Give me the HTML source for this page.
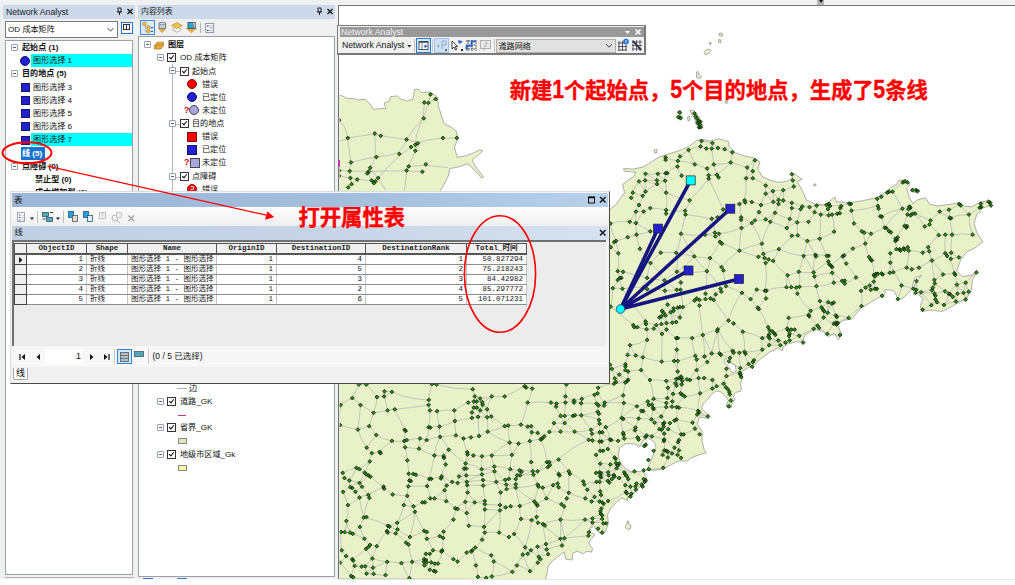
<!DOCTYPE html>
<html lang="zh">
<head>
<meta charset="utf-8">
<title>OD 成本矩阵</title>
<style>
html,body{margin:0;padding:0;}
body{width:1015px;height:585px;overflow:hidden;background:#fff;position:relative;font-family:"Liberation Sans","Noto Sans CJK SC",sans-serif;font-size:10px;color:#111;}
.abs{position:absolute;}
#app{position:absolute;left:0;top:0;width:1015px;height:579px;background:#f0f0f0;}
.ptitle{position:absolute;height:14px;background:#ccd9ea;font-size:8.3px;line-height:14px;color:#1a1a1a;white-space:nowrap;}
.box{position:absolute;background:#fff;border:1px solid #828790;box-sizing:border-box;}
.row{position:absolute;height:13px;line-height:13px;white-space:nowrap;font-size:8.1px;}
.b{font-weight:bold;}
.sq{position:absolute;width:9px;height:9px;background:#2121d2;border:1px solid #15156a;box-sizing:border-box;}
.exp{position:absolute;width:7px;height:7px;border:1px solid #9aa0a8;background:#fff;box-sizing:border-box;border-radius:1px;}
.exp:after{content:"";position:absolute;left:1px;top:2px;width:3px;height:1px;background:#4a62a0;}
.cb{position:absolute;width:9px;height:9px;border:1px solid #333;background:#fff;box-sizing:border-box;}
.cb:after{content:"";position:absolute;left:2px;top:0px;width:2px;height:4px;border:solid #111;border-width:0 1.5px 1.5px 0;transform:rotate(40deg);}
.circ{position:absolute;width:10px;height:10px;border-radius:50%;box-sizing:border-box;border:1px solid #333;}
#map{position:absolute;left:338px;top:4.500px;width:677px;height:574.500px;background:#fff;border-left:1.700px solid #707070;border-top:1.400px solid #747474;box-sizing:border-box;overflow:hidden;}
.mono{font-family:"Liberation Mono","Noto Sans CJK SC",monospace;}
.red{color:#ff0000;font-weight:bold;-webkit-text-stroke:0.350px #ff0000;font-family:"Liberation Sans","Noto Sans CJK SC",sans-serif;}
</style>
</head>
<body>
<div id="app">
<div id="map"></div>
<div class="abs" style="left:817px;top:0;width:7px;height:4.500px;background:#b4b4b4;"><div class="abs" style="left:2px;top:0;width:0;height:0;border:2px solid transparent;border-top:3px solid #111;"></div></div>
<svg class="abs" style="left:0;top:0" width="1015" height="585" viewBox="0 0 1015 585">
<defs><clipPath id="mc"><rect x="339.700" y="5.900" width="676" height="573.100"/></clipPath></defs>
<g clip-path="url(#mc)">
<path d="M339 95.3L342.5 95.9L346.3 98.2L353.8 98.5L357.6 100L365 99.1L369.8 103.8L373.5 109.4L380.1 108.5L385.8 108.5L384.2 102.9L389.5 101L390.5 96.7L397 95.9L400.8 99.1L407.4 101L413 99.1L414.3 89.7L418.6 89.1L421.5 92.5L429 92.1L432.7 93.5L437.4 97.2L438.4 105.7L441.2 115.1L444 123.5L451.5 127.3L456.2 131L458.1 138.6L454.4 147L457.2 157.4L466.6 155.5L474.1 152.7L479.7 149.8L482.6 150.8L477.9 155.5L472.2 160.2L475 165.8L483.5 177.1L481.6 178L470.3 165.8L466.6 163.9L459 166.8L449.7 168.6L448.7 175.2L444 184.6L440.3 190.3L445 200L520 215L600 212L610.3 209.1L616.4 204L624.6 192.7L622.6 184.5L627.7 180.4L633.8 176.3L635.9 172.2L630.8 171.8L624.2 171.2L623.6 168.5L632.8 169.1L643.1 167.1L651.3 161.9L659.5 156.8L669.7 153.7L682.1 149.6L690.3 145.5L696.4 140.4L702.6 139.4L710.8 141L719 138.9L728.2 141.4L729.2 146.5L735.4 152.7L743.6 155.8L753.8 157.8L760 161.9L757.9 169.1L762.1 176.3L770.3 180.4L778.5 182.4L786.7 181.4L791.8 178.3L793.8 173.2L796.2 175.3L802.3 179.4L797.2 181.4L802.3 190.6L806.4 199.9L814.6 204L823.8 205L830 200.9L835.1 196.8L836.2 201.9L849.5 202.5L861.8 200.9L876.2 197.8L884.4 192.7L890.5 187.6L896.7 184.5L898.7 180.4L906.9 180L910 184.5L906.9 188.6L909 196.8L913.1 204L917.2 199.9L925.4 197.8L929.5 204L937.7 206L952.1 204L958.2 202.9L964.4 206L971.1 206.9L979.9 202.6L987.1 200.6L991.5 204L982.8 208.4L977 214.2L974 222.9L977 233.1L982.8 241.8L975.5 247.6L966.8 251.9L961 259.2L956.6 270.8L962.4 276.6L971.1 275.2L977 272.3L972.6 279.5L971.1 291.1L966.8 298.4L958.1 302.8L950.8 307.1L942.1 311.5L930.5 310L921.8 311.5L920.3 305.7L923.2 298.4L917.4 294L913.1 288.2L917.4 279.5L921.8 275.2L914.5 278.1L911.6 289.7L904.4 296.9L898.6 299.9L895 293L892.8 290.5L885.6 289.5L884.6 294.6L876.4 298.7L868.2 303.8L861 307.9L855.9 314.1L851.8 319.2L843.6 320.3L837.4 324.4L841.5 333.6L838.5 339.7L834.4 333.6L828.2 336.7L823.1 331.5L816.9 329.5L810.8 331.5L804.6 335.6L802.6 341.8L796.4 341.8L788.2 343.8L783.1 346.9L782.1 351L777.9 347.9L769.7 352.1L761.5 358.2L754.4 364.4L747.2 368.5L741.4 371.5L742.6 377.5L740.3 383.5L741.4 388.3L740.3 391.3L735.5 392.5L733.1 395.5L734.9 399.7L731.9 403.8L731.3 407.4L727.1 407.4L726.5 405L728.3 400.3L725.9 396.7L723.5 394.3L719.9 391.3L715.7 391.3L711.5 394.3L707.9 399.1L703.2 403.8L701.4 408.6L705.6 412.2L709.1 415.8L706.7 418.2L699.6 417L697.1 424.1L702.2 431.3L702.2 441.5L704.2 449.7L706.3 452.8L699.1 454.9L690.9 457.9L687.8 461L678.6 461L670.4 465.1L662.2 469.2L654 470.3L646.8 470.3L648.2 467.2L651.3 460L653.8 453.4L656 447.7L654.4 441.9L647.8 437.8L642.7 440.7L640 446.5L633.9 443.8L625.3 443.8L619.5 447.7L618.3 455.9L620.3 462.9L625.9 469L632.6 472.3L637.6 471.5L643.7 471.9L646.8 478.5L643.7 484.6L637.6 488.7L633.5 493.8L627.3 497.9L632.4 495.3L627 498L627.9 500.6L621.7 498L616.4 502.4L611.1 507.7L607.5 514.8L608.4 522.8L605.8 530.8L602.2 534.3L597.8 531.7L593.3 526.4L589.8 528.1L590.7 532.6L595.1 534.3L590.7 539.7L588.9 543.2L592.5 548.5L591.6 552.1L587.1 551.2L582.7 553.8L577.4 551.2L573 553L572.1 560L565.9 559.2L564.1 552.1L560.5 554.7L552.6 560.9L548.1 566.3L547.2 573.3L545.5 579.6L339 579ZM725.3 357.8L728.3 362L731.9 363.2L735.5 365.6L736.1 371.5L731.9 372.7L729.5 367.9L725.9 364.4L724.1 362Z" fill="#e9f1c9" stroke="#9a9a9a" stroke-width="0.8" fill-rule="evenodd"/>
<path d="M627.9 520.5L629 524L631 525.5L630.5 528.5L627.5 529.5L625.3 527.5L626.3 524.5Z" fill="#e9f1c9" stroke="#8a8a8a" stroke-width="0.7"/>
<path d="M704 52.5L706 50L709.5 49L711 50.5L709 53L705.5 55Z" fill="#e9f1c9" stroke="#8a8a8a" stroke-width="0.7"/>
<path d="M696.5 72L698 71.5L699 75L701.5 76.5L700 78.5L696.5 77.5Z" fill="#e9f1c9" stroke="#8a8a8a" stroke-width="0.7"/>
<path d="M719 33.5L722 33L722.5 36L719.5 36Z" fill="#e9f1c9" stroke="#8a8a8a" stroke-width="0.7"/>
<path d="M718.5 39.5L721 40L720.5 43L718.5 42Z" fill="#e9f1c9" stroke="#8a8a8a" stroke-width="0.7"/>
<path d="M709.5 42L711.5 43L710 45Z" fill="#e9f1c9" stroke="#8a8a8a" stroke-width="0.7"/>
<path d="M725.5 100.5L727.5 101L727 103.5L725.5 103Z" fill="#e9f1c9" stroke="#8a8a8a" stroke-width="0.7"/>
<path d="M654 150L657 149.5L657 152.5L654.5 153Z" fill="#e9f1c9" stroke="#8a8a8a" stroke-width="0.7"/>
<path d="M910.5 189L914 188.3L918.5 189.5L919.5 191.5L916 192.5L911.5 191.5Z" fill="#e9f1c9" stroke="#8a8a8a" stroke-width="0.7"/>
<path d="M813.5 184.5L816 183.8L816 185.5L814 186Z" fill="#e9f1c9" stroke="#8a8a8a" stroke-width="0.7"/>
<path d="M690 110.5L693 110L696 113L699 117L702 123L702.5 128L699 129L696.5 124L694 118L691.5 114Z" fill="#e9f1c9" stroke="#8a8a8a" stroke-width="0.7"/>
<path d="M677.5 111.5L680.5 111L682 114L680 116Z" fill="#e9f1c9" stroke="#8a8a8a" stroke-width="0.7"/>
<path d="M677 116L680 115.5L682 118.5L679 120Z" fill="#e9f1c9" stroke="#8a8a8a" stroke-width="0.7"/>
<path d="M687.5 117L689.5 116.5L690 120L688 121Z" fill="#e9f1c9" stroke="#8a8a8a" stroke-width="0.7"/>
<path d="M599.6 501.5Q601.4 503.1 603.6 503.8M807.4 240.9Q811.5 247.8 815.4 254.8M482 474.4Q482.3 477.3 483 480.1M546.3 498.4Q553.5 502.1 561.4 504.2M618.3 253.3Q619.6 262.3 617.7 271.2M711.8 148.6Q714.9 148.7 717.9 148M522.8 554.7Q525.3 554.7 527.7 553.8M427.2 486.1Q429.7 492 430.3 498.4M943 274.5Q948.6 274 954.3 273.2M516.9 565.4Q519.3 559.8 522.8 554.7M871 233.7Q878.2 231.4 884.8 227.6M717.9 148Q721.5 147.9 724.7 149.2M792.8 180.4Q793.3 183.5 793.8 186.5M762.3 338.1Q761.6 343.9 762.3 349.7M842.7 256.4Q844 260.2 846.2 263.6M791.8 202.9Q797.4 203.8 802.3 206.4M819.9 301.1Q824 302.3 828.3 302.2M921 292.3Q927.8 292.3 934.4 293.7M659.5 429.2Q661.6 431.8 664.2 433.7M681 233.7Q687.6 245.1 694.2 256.4M384.5 391.3Q388.3 391 391.9 391.9M754.9 220.4Q760.4 220.4 765.7 219.4M824.2 311.4Q823.5 314.4 823.6 317.5M869.7 285.5Q870.1 287.7 870.8 289.8M598.2 387.8Q597.3 390.5 597.6 393.3M679 440.1Q679.6 445.2 679 450.4M841.3 206Q845 204.3 849.1 203.6M467.2 485.2Q468 488.8 467.6 492.4M963.5 292.9Q964.6 296.2 965.7 299.5M823.6 317.5Q820.7 321.8 817.4 325.7M636.9 406.3Q639.2 408.4 641.3 410.8M369.2 426.2Q363.5 428 357.9 429.6M574.6 431.7Q582.1 435.1 588.7 439.9M696.6 370.1Q698.5 373.9 698.6 378.1M565.4 402.6Q565.1 409.2 564.7 415.9M874.9 288.8Q878.8 292 882.1 295.8M929.5 224.5Q930 222.4 930.5 220.4M907.5 214.6Q904.9 220 904.5 225.9M480.1 410.4Q479.6 413.8 478.1 416.9M434.4 455.5Q439 456 443.6 455.9M739.4 250.7Q748.7 254.3 758.4 256.8M619.1 478.1Q622.5 481.3 625.3 485.2M741.1 217.3Q741.4 222.6 741.5 228M968.6 291.7Q966.4 295.3 965.7 299.5M949.6 217.9Q951.4 226.2 952.1 234.7M635.9 211.6Q632.3 216.4 629.7 221.8M676.8 271.8Q691.9 273.7 706.9 271.2M710.6 298.5Q712.2 299.1 713.7 299.9M769.7 330.3Q769 332.2 769.1 334.4M392.7 494.5Q400 495.6 407.3 495.9M730.1 357.9Q729.5 359.7 728.9 361.4M807.4 240.9Q804.8 248.3 803.6 256M584.2 484.6Q585.9 487.1 587.3 489.7M696.6 370.1Q697.1 364.8 696.7 359.5M601.1 494.9Q604.9 497.6 608.1 501M653.6 398.9Q650.4 399.7 647.8 401.5M774.2 333.3Q771.7 333.8 769.1 334.4M426.8 538.8Q430.5 544.2 433 550.3M701.5 141Q701.1 143.8 700.5 146.5M638.6 418.6Q630.1 416.8 621.6 417.9M602.2 518.9Q602.5 521.2 603.5 523.3M525.1 547.3Q528 548.8 530.9 550.3M666.5 329.6Q664.4 331.9 662 333.9M877.9 273.8Q879.8 273.5 881.6 273.4M698.1 410.8Q702.4 414.7 707.9 416.5M544.2 436.4Q542.7 438.2 540.7 439.5M652.9 407.7Q656.3 412.8 661.2 416.5M341.1 532Q340 541.2 341.7 550.3M741.1 217.3Q746.8 219.5 751.8 223.1M945.3 234.7Q948.7 234.5 952.1 234.7M384.5 391.3Q384.3 393.8 384.1 396.4M623.8 403Q621.7 410.3 621.6 417.9M635.5 486.3Q638.8 486 641.7 484.6M827.9 209.1Q829.4 212.3 832.1 214.6M770.3 221.8Q778.8 224.1 786.7 228M601.1 494.9Q597.9 496.3 594.5 496.9M667.9 457.5Q665.6 462.7 663.2 467.8M888.9 231.1Q892.2 235 895.6 238.8M631.2 197.8Q634.8 201.7 639 205M413.3 473.9Q421.7 475 429.3 478.9M500 505.1Q499.9 507.7 500 510.4M341.1 532Q342.9 532.4 344.7 532.2M673.7 308.3Q675.8 308.4 677.8 307.7M588.7 439.9Q571.7 446.8 558.6 459.6M739.5 204Q730.8 205.2 723.1 209.5M465.6 463.5Q464.3 465.9 464.1 468.6M516.9 565.4Q515.3 569.1 512.4 571.9M700.1 393.3Q698.6 385.8 698.6 378.1M661.4 316.3Q664.2 319.5 666.5 323.1M799.3 335.8Q801.2 339.1 803.1 342.6M922.7 252.7Q926 250.5 928.2 247.2M787.6 275.3Q789.1 281.3 791.3 287.2M560.5 538.8Q561.5 542.1 562 545.5M833.8 282.7Q837.9 281.6 842.1 281M645.1 180.4Q650.7 183.3 657 184.1M935.4 299.5Q936 300.9 937 302.2M616 463.1Q616.7 465.6 616.6 468.2M730.7 162.5Q724.5 169.5 716.9 174.8M608.2 472.3Q604.3 474.4 600.2 476M376.9 397Q380.5 396.3 384.1 396.4M473.8 407.7Q472.8 410 471.9 412.4M627.6 354.9Q627.1 359.7 625.4 364.2M816.7 205.6Q821.6 205.5 826.5 205M614.6 457.5Q611.8 460.6 610.3 464.5M553.1 485.2Q555.7 486.7 558.6 487.3M455.9 435.4Q460 436.3 463.5 438.5M939.7 211.6Q945.1 214.1 949.6 217.9M652.9 407.7Q652.5 413.6 651.5 419.4M909.4 206.6Q912 210.3 915.1 213.6M568.8 471.3Q576.3 476.1 583.2 481.5M751.8 223.1Q758 232.8 761.9 243.7M892.6 191.7Q898.1 199.8 902.4 208.7M830 206Q835.6 205.3 841.3 206M413.5 506.3Q418.2 505.1 422.3 502.4M831.8 303.6Q833.3 309.7 835.9 315.5M467.2 452.2Q470.3 453.7 473.4 455.5M643.7 211.6Q639.3 217 635.9 223.1M674.1 361Q675.9 366.3 677.7 371.5M373.5 412.8Q371.2 419.5 369.2 426.2M520.1 475.4Q526.8 474.7 533.5 474.8M465.3 501.9Q460.2 505.1 455.2 508.3M440.1 436.8Q435.3 445.5 434.4 455.5M434.8 563.6Q436.4 563.8 438 563.6M430.3 498.4Q432.3 498.7 434.4 498.4M408.7 473.7Q409 477.1 409.4 480.5M600.8 513.9Q601.7 516.4 602.2 518.9M373 567.7Q370.3 571.3 366.5 573.7M667.3 398.1Q670 399.7 672.4 401.5M514.2 534Q520.4 540 525.1 547.3M713.8 164.4Q722.4 164.6 730.7 162.5M530.9 550.3Q529.2 551.9 527.7 553.8M510.3 469.2Q513.4 472.6 517.1 475.4M403.7 505.1Q402.1 514.5 397.2 522.8M789.6 333.7Q790.1 337.1 789.6 340.5M752.8 178.3Q760 180.6 765.7 185.5M798.8 271.8Q800.5 279.2 799.5 286.8M765.6 263Q767.7 276.9 765 290.7M744.6 200.3Q741.7 201.6 739.5 204M681 233.7Q692.9 236.3 705 234.7M676.2 338.1Q677.2 343.9 676.8 349.7M667.9 451.8Q668.2 454.7 667.9 457.5M639 205Q640.7 208.8 643.7 211.6M783.2 190.2Q788.6 188.5 793.8 186.5M588.7 439.9Q590.6 440.1 592.4 440.5M645.5 173.8Q651.3 177 657 180.4M705 234.7Q709.8 233.2 714.9 232.7M837.9 323.1Q838.8 329.1 840 335M494.5 471.3Q499.4 476.1 505.2 479.9M625.3 485.2Q627.8 486 630.4 486.7M429.3 478.9Q427.7 482.3 427.2 486.1M553.9 423.1Q552.4 427.9 549.4 431.9M828.3 302.2Q824.8 304.6 821.5 307.3M797.8 235.4Q802 239.2 807.4 240.9M948.7 293.7Q947.2 299.7 944 305M510.3 469.2Q509.6 474.1 508.8 478.9M608.8 475.4Q608.2 478.1 607.8 480.9M697.1 414.5Q695.1 418.7 692.5 422.7M764.6 258.1Q766.5 259.2 768.7 259.5M772.9 191.1Q773.2 196.5 773.3 201.9M681 376.6Q684 377.9 686.9 379.3M968.9 214.6Q968.9 225 972.6 234.7M952.8 296.8Q954.9 298.9 955.9 301.5M542.8 487.7Q543.7 493.3 546.3 498.4M428.8 399.9Q429.2 402.5 428.6 405M484.8 509.5Q492.4 509.5 500 510.4M466.8 481.9Q467 483.6 467.2 485.2M394.8 409.3Q399.8 419.5 404.6 429.8M494.3 466.6Q502.6 466.3 510.3 469.2M484.8 532.6Q483.7 536.2 482.1 539.7M581.8 398.9Q581.6 401 581.2 403.2M928.2 247.2Q928.3 249.3 929.2 251.3M536.2 503.8Q536.2 510.4 536.6 517M359.5 483Q354.5 484.1 350.3 487.1M680 156.4Q678.6 158.5 677.9 160.9M407.3 460.4Q408.4 467 408.7 473.7M896.4 249.2Q893.7 251.8 890.3 253.3M653.8 328.6Q657.8 331.5 662 333.9M932.9 287.6Q933.9 290.6 934.4 293.7M830.8 265.6Q832.3 269.1 832.2 272.8M827.3 333.9Q833.5 335.8 840 335M865.6 287.6Q868 289.2 870.8 289.8M542.8 487.7Q547.9 486.5 553.1 485.2M820.8 214.6Q824.7 215.2 828.6 215.3M648.8 405Q644.8 407.6 641.3 410.8M619.1 478.1Q615.4 477.9 611.9 479.1M587.3 489.7Q590.9 493.3 594.5 496.9M470.9 437.4Q475 436.9 479.1 436M659.5 429.2Q656.1 433.3 651.9 436.4M471.9 412.4Q475.3 414.3 478.1 416.9M532.8 471.3Q535.2 471.3 537.6 471.3M635.9 489.7Q633.9 492.1 631.4 493.8M649.9 380Q644.5 376 641.1 370.1M514.2 534Q511.6 535.6 508.9 537M477.9 576.9Q482 577.8 486.2 577.8M667.6 304.6Q670.8 306.2 673.7 308.3M340.6 405Q338.7 415 340 425.1M441.6 476.4Q446.7 479.7 452.2 481.9M531.2 462.1Q531.7 466.7 532.8 471.3M486.2 577.8Q489.1 577.7 491.9 576.5M566.8 498.4Q566.2 502.7 564.1 506.5M493.8 561.5Q503.9 565.4 512.4 571.9M798.8 271.8Q806.2 273.4 813.7 272.4M794.7 329.6Q796.4 333.1 799.3 335.8M556.5 403.6Q560.9 402.3 565.4 402.6M537.5 546.7Q534 548.1 530.9 550.3M532.8 471.3Q533.5 473 533.5 474.8M698.1 410.8Q697.9 412.7 697.1 414.5M442.2 550.3Q441.2 557.3 438 563.6M762.3 349.7Q758.6 355.3 754 360.2M711.8 218.7Q714.6 217.9 717.5 217.3M500.6 492.4Q500.5 498.8 500 505.1M774.2 333.3Q776.9 336.6 778.3 340.5M751.8 202.1Q756.6 203.1 761 205M676.5 407.1Q677.9 413.2 676.5 419.4M827.9 209.1Q828.9 212.1 828.6 215.3M752.8 171.2Q752.9 174.7 752.8 178.3M754.9 220.4Q753.3 221.7 751.8 223.1M719 233.7Q717.3 235.3 715.3 236.4M478.1 416.9Q482.6 416.9 487.1 417.3M621.6 417.9Q614.5 423.9 605.8 427.2M387.2 561.8Q385.9 568.4 385.5 575.1M560.6 415.9Q557.4 419.6 553.9 423.1M980.8 203.6Q984.5 202.2 988.6 201.9M619.1 463.7Q621.7 468 624.2 472.3M751.8 223.1Q747 226.2 741.5 228M441.6 476.4Q435.5 478.2 429.3 478.9M711.8 218.7Q714.5 225.5 714.9 232.7M505.7 507.4Q502.7 508.5 500 510.4M413.5 506.3Q414.5 509 414.9 511.8M387.8 525.8Q392.3 528.6 397.5 529.4M662 310.8Q663.9 313.1 665.5 315.5M482.1 539.7Q479.3 544.2 475.2 547.6M483 480.1Q489.6 481.6 496.3 481.9M424.1 530.8Q425 534.9 426.8 538.8M673.1 393.9Q676.9 394.3 680.6 393.3M786.7 228Q791.5 224.4 797.2 222.4M656.3 325.1Q654.8 326.7 653.8 328.6M661.4 316.3Q660.8 320.2 661.4 324.1M726 286.2Q734.3 288.9 742 292.9M680.6 393.3Q682.7 394.8 684.7 396.4M581.2 415.3Q589.5 414 597.6 411.8M560.5 538.8Q553.6 542.2 546 544.1M732.6 350.8Q735.9 352.1 739.4 352.8M562 545.5Q554 546.3 546.7 549.4M947.1 256Q949 257.4 950.8 258.9M568.8 471.3Q568.8 482.1 568.8 492.8M814.4 276.5Q823 273.5 832.2 272.8M525.1 547.3Q524.2 551.1 522.8 554.7M646.8 435.4Q649.3 436.2 651.9 436.4M666.5 329.6Q670.5 334.8 676.2 338.1M619.1 463.7Q618.2 466.1 616.6 468.2M516.9 565.4Q524 567 530 571.2M893.3 272.2Q898.7 278.1 901.5 285.5M901.5 285.5Q907.5 287 913.4 288.8M976.4 272.4Q970.4 276.9 965.7 282.7M557.6 483.6Q558.3 485.4 558.6 487.3M949 209.7Q949.3 213.8 949.6 217.9M674.1 361Q675.9 361 677.7 361M721.5 267.1Q722.2 268.9 723.4 270.4M952.1 234.7Q962.3 233.2 972.6 234.7M596.5 403.6Q597.9 407.6 597.6 411.8M676.2 252.9Q685.2 254.7 694.2 256.4M726 286.2Q723.3 287.7 720.5 288.8M363.8 517.5Q362.3 522.4 359.9 526.9M787.2 328.6Q789.1 329.4 791.3 329.6M630.4 486.7Q627.9 489 625.9 491.8M791.3 329.6Q793 329.3 794.7 329.6M899.5 249.2Q901.5 248.8 903.6 248.2M509.7 442.6Q510 448.9 511.9 454.9M459 476.4Q462.4 479.9 466.8 481.9M625.3 382.5Q619.6 381.6 614.8 378.4M591.6 501.5Q595.6 500.7 599.6 501.5M903.6 248.2Q905.7 247.9 907.7 247.2M889.8 272.8Q891.6 272.6 893.3 272.2M706.3 148.6Q709 149.1 711.8 148.6M630 345.2Q632.6 350.5 635.8 355.5M434.8 563.6Q435 567.4 433.9 571M945.3 234.7Q944.6 244 945.2 253.3M707.1 168.5Q708.3 171.8 708.7 175.3M568.8 471.3Q563.5 471.9 558.6 473.9M662.6 454.9Q665.5 455.7 667.9 457.5M467.6 492.4Q471.5 497.1 474.7 502.4M657.8 173.8Q657.2 177.1 657 180.4M585.3 498.4Q576.6 496.8 568.8 492.8M401.4 563.1Q404.9 570.9 409.4 578.1M632.8 192.7Q637.6 194.7 642.7 195.8M604.1 405.6Q600.5 408.4 597.6 411.8M565.4 396.4Q564.9 399.5 565.4 402.6M623.2 395.4Q614.1 399.3 604.7 402.6M605.8 427.2Q603.1 430.2 599.6 432.3M681 376.6Q678.7 378 676.3 379M759 212.2Q762.5 215.6 765.7 219.4M664.2 439.5Q670.2 442.6 674.5 447.7M625.4 370.1Q622.1 372.1 619.2 374.6M654.6 422.7Q657.7 425.5 659.5 429.2M613.6 475Q613.1 477.2 611.9 479.1M371.8 453.2Q375.9 453.3 379.6 451.8M684.7 396.4Q679.9 401.2 676.5 407.1M628.1 371.5Q634.6 370.1 641.1 370.1M628.3 479.1Q627 482.3 625.3 485.2M700.1 393.3Q697.9 401.9 698.1 410.8M459 476.4Q462.6 476.1 466.2 475.4M778.9 249.2Q776.7 255.4 773.2 260.9M412.1 561.8Q418.1 560.4 424.1 559.2M466.2 475.4Q474.2 476.1 482 474.4M455.2 508.3Q455.5 514.1 453.4 519.6M500 510.4Q491.8 518.4 484.1 526.9M684.7 396.4Q692.6 395.9 700.1 393.3M546 544.1Q541.8 545.6 537.5 546.7M561.4 504.2Q562.7 505.4 564.1 506.5M710 258.1Q716.3 261.9 721.5 267.1M665.6 157.4Q671.5 160.2 677.9 160.9M895.6 238.8Q895.6 244.1 896.4 249.2M711.7 353.4Q710.1 358 707.3 362M512.4 571.9Q502.5 575.8 491.9 576.5M706.9 271.2Q715.4 278.7 720.5 288.8M530.9 550.3Q534.7 553.7 538.7 556.9M368.7 475.4Q364.7 479.8 359.5 483M408.5 544.6Q410.1 553.3 412.1 561.8M629.7 221.8Q632.7 222.9 635.9 223.1M439.5 426.6Q447.7 425.1 454.9 421M871.8 260.5Q874 267.5 873.8 274.9M663.2 467.8Q656.1 469 648.8 469.2M664.2 422.7Q664 424.7 663.6 426.8M471.9 412.4Q472.1 415.2 471.9 417.9M482 456.3Q486.9 455.7 491.8 455.5M938.7 235.2Q942 234.9 945.3 234.7M828.3 302.2Q827.4 307.5 827.7 312.8M624.2 438.5Q621.3 440 618.1 440.9M865.3 243.6Q859.3 246.5 852.9 248.6M764.6 258.1Q765.2 260.5 765.6 263M798.8 271.8Q793.5 274.4 787.6 275.3M968.9 214.6Q974.5 211.5 979.7 207.7M610.3 464.5Q609.4 468.5 608.2 472.3M931.3 305.2Q926.5 306.7 922.5 309.7M359.5 483Q360.5 485 362 486.7M448.7 449.7Q446.5 453.1 443.6 455.9M484.8 504.2Q485.1 506.8 484.8 509.5M372.3 558.6Q379.6 561.2 387.2 561.8M506.6 489.1Q511.2 488.5 515.8 487.7M634.5 471.3Q639.9 474.2 643.7 479.1M482 456.3Q481.4 462.8 481.6 469.2M556.5 403.6Q556.4 405.1 556.1 406.7M789.6 333.7Q794.3 335.4 799.3 335.8M723.4 270.4Q723.8 278.4 726 286.2M391.9 440.9Q384.8 445.2 379.6 451.8M907.7 247.2Q908.1 249 908.7 250.7M670 423.1Q667.1 422.3 664.2 422.7M688.6 150Q692.2 157 694.8 164.4M599.6 441.5Q604.5 439.5 609.9 439.5M594.5 394.8Q587.8 395.8 581.8 398.9M752.8 171.2Q750 175.3 746.1 178.3M609.9 439.5Q614 440.3 618.1 440.9M596.1 472.9Q597.9 472.6 599.6 472.3M666.1 192.7Q677.3 198.1 689.6 200.3M783.2 200.5Q787.5 201.5 791.8 202.9M828.3 302.2Q830.2 302.6 831.8 303.6M869.7 285.5Q872.4 287 874.9 288.8M599.6 472.3Q603.9 471.5 608.2 472.3M980.8 203.6Q980.4 205.7 979.7 207.7M480.1 410.4Q483.4 414 487.1 417.3M711.8 218.7Q710 227.4 705 234.7M610.3 223.5Q611.2 232.8 616 240.9M599.6 441.5Q599.8 446.2 600.2 450.8M921 292.3Q926.7 298.3 931.3 305.2M635.9 211.6Q635.1 217.3 635.9 223.1M677.7 371.5Q677.6 375.4 676.3 379M670.6 312.2Q668.2 314 665.5 315.5M369.4 497.9Q364.7 507.2 363.8 517.5M426.8 562.4Q429 562.1 431.2 562.4M437.1 411.2Q437.5 419 439.5 426.6M762.3 338.1Q766.1 337.6 769.7 338.5M653.6 398.9Q660.4 398.6 667.3 398.1M774.2 333.3Q780.4 330.1 787.2 328.6M454.3 410.4Q455 415.7 454.9 421M947.1 256Q949.2 254.4 951.2 252.7M603.5 523.3Q602.7 527.9 602.2 532.6M677.9 160.9Q686.6 161.4 694.8 164.4M601.3 508.6Q601.2 511.3 600.8 513.9M951.2 252.7Q951.2 255.8 950.8 258.9M869.7 285.5Q867.6 286.3 865.6 287.6M355.4 491.8Q357.8 494.4 359.5 497.5M560.5 519.6Q560.7 529.2 560.5 538.8M522.8 554.7Q526.3 563 530 571.2M670.6 312.2Q673.2 317.2 676.2 322.1M955.9 301.5Q960.9 301 965.7 299.5M536.6 517Q536.9 520 538 522.8M442.2 550.3Q447.4 555.2 453.4 559.2M491.8 396.4Q498.3 397.3 504.7 396.4M916.5 281Q914.3 284.7 913.4 288.8M504.7 426.2Q506.5 425.7 508.2 425.5M635.5 486.3Q635.5 488 635.9 489.7M638.6 418.6Q637 423.1 635.5 427.6M339.9 562.7Q346.2 568.8 351.1 576M861.8 231.3Q866.6 231.8 871 233.7M508.2 425.5Q514.6 425.9 520.9 424.7M611.8 368.9Q615.3 372 619.2 374.6M363.8 517.5Q376.6 519.4 387.8 525.8M959.2 204Q963.8 209.5 968.9 214.6M929.5 224.5Q935.2 228.9 938.7 235.2M739.5 204Q740.6 210.6 741.1 217.3M452.2 481.9Q454.9 482.5 457.6 483M647.1 277.9Q655.7 279.8 664.5 280.4M465.6 463.5Q474 465.2 481.6 469.2M598.2 387.8Q605.7 384.2 614 383.7M466.2 475.4Q466.4 478.7 466.8 481.9M560.5 519.6Q572.8 521.3 585 519.6M565.4 402.6Q569.6 401.3 574 400.5M534.3 501.5Q526.9 503.5 519.8 506M434.8 563.6Q432 566.5 429.8 569.8M747.1 167.5Q749.6 169.8 752.8 171.2M922.7 252.7Q925.9 252 929.2 251.3M397.5 529.4Q403.1 534.2 409.9 537M574 400.5Q577.8 399.4 581.8 398.9M692.5 422.7Q694.1 425.5 695 428.6M732.6 350.8Q731.7 354.5 730.1 357.9M650.5 263Q648 270.3 647.1 277.9M773.3 201.9Q776.1 201.3 778.5 199.9M679.9 317.5Q678.1 319.8 676.2 322.1M695 428.6Q697.1 431.7 699.7 434.4M778.5 199.9Q780.9 199.8 783.2 200.5M935.4 299.5Q933.3 302.4 931.3 305.2M645.5 191.7Q644.2 193.8 642.7 195.8M412.1 561.8Q411 570 409.4 578.1M757.8 307.7Q764.3 316.7 768.1 327.2M759 212.2Q756.7 216.2 754.9 220.4M566.4 384.5Q565.4 390.4 565.4 396.4M877.2 198.8Q879.3 197.9 881.3 196.8M937 302.2Q940.4 304 944 305M890.3 253.3Q890.3 257.9 890.3 262.6M572.9 415.9Q568.3 418.9 564.7 423.1M614.6 457.5Q615.2 460.3 616 463.1M624.2 472.3Q625.2 474.6 626.9 476.4M775 212.8Q770.5 216.3 765.7 219.4M881.3 196.8Q884.5 195 887.4 192.7M834.1 231.7Q827.4 236.2 819.7 238.8M581.2 415.3Q590.5 416 599 420M610.7 247.2Q614 251 618.3 253.3M343.1 491.8Q345.9 498.3 347.9 505.1M647.1 289.2Q656.1 288.2 664.9 290.7M465.3 501.9Q465.7 507.5 466.7 513.1M619.8 277.9Q620.1 283.6 622.4 288.8M816.4 286.2Q817.3 293.8 819.9 301.1M681.7 384.5Q682.3 382.8 682.3 381M787.2 328.6Q787.9 331.4 789.6 333.7M673.7 308.3Q672.2 310.3 670.6 312.2M373 567.7Q373.9 570.7 373.6 573.9M623.8 403Q630.5 404 636.9 406.3M742 292.9Q746.2 296.3 750.6 299.1M789.6 340.5Q787.4 341.2 785.5 342.6M950.8 258.9Q954.7 257.3 959 257.4M542.8 524Q550.6 532.6 560.5 538.8M647.1 339.9Q644 348.4 642.9 357.3M546.7 549.4Q547.2 551.9 548.1 554.2M744.6 200.3Q748.4 200.6 751.8 202.1M689.9 380Q692.3 374.4 696.6 370.1M821.5 307.3Q822.7 309.5 824.2 311.4M553.9 423.1Q557 427.6 560.6 431.7M714.9 232.7Q715.2 234.5 715.3 236.4M856 277.5Q861.2 282.2 865.6 287.6M583.2 481.5Q584 483 584.2 484.6M657 184.1Q650.5 186.6 645.5 191.7M608.8 475.4Q610.1 477.5 611.9 479.1M473.8 401.5Q475.3 401.9 476.8 401.5M623.2 395.4Q623 399.2 623.8 403M772.9 191.1Q775.8 195.4 778.5 199.9M873.8 281.6Q873.8 285.3 874.9 288.8M664.2 439.5Q665 444.9 664.2 450.4M527.7 426.6Q529.5 426.5 531.2 426.2M500 505.1Q503 505.9 505.7 507.4M466.8 481.9Q474.9 480.6 483 480.1M603.6 503.8Q606.1 502.8 608.1 501M414.9 511.8Q406.2 517.6 397.2 522.8M778.9 249.2Q790.7 254.7 803.6 256M702.8 335Q697.4 336.3 692.2 338.1M487.1 417.3Q488.1 424.5 487.7 431.7M592.5 518.4Q592.7 520.4 592.5 522.5M641.3 410.8Q647.3 414 651.5 419.4M546 544.1Q546.3 546.8 546.7 549.4M645.5 173.8Q651.7 174.7 657.8 173.8M657.8 173.8Q661.7 173 665.6 173.2M783.2 200.5Q780.8 202.3 778.5 204M624.2 438.5Q631 439.4 637.6 437.4M661.2 416.5Q656.4 418.2 651.5 419.4M815.4 254.8Q812.9 263.4 813.7 272.4M610.3 464.5Q613.3 464.2 616 463.1M849.1 203.6Q850.3 207.2 851.5 210.7M670 423.1Q669 426.1 668.3 429.2M613.6 475Q616.6 476 619.1 478.1M636.5 234.7Q632.1 235.9 627.7 237.2M930.5 220.4Q935.6 216.5 939.7 211.6M587.3 489.7Q586.8 494.2 585.3 498.4M954.3 273.2Q956.7 278.7 956.9 284.7M892.6 191.7Q896.7 186 902.8 182.4M404.2 441.1Q411.9 438.6 420 438.5M915.1 213.6Q920.7 219.5 924.8 226.5M677.7 371.5Q679 374.3 681 376.6M487.1 409.3Q489.2 412.9 491.2 416.5M517.1 475.4Q518.6 475.4 520.1 475.4M676.8 289.8Q678.6 289.7 680.5 289.8M369.2 426.2Q373.1 430.2 376.3 435M366.7 447.7Q369.2 450.5 371.8 453.2M359.5 497.5Q360.6 507.7 363.8 517.5M482.2 402.2Q479.9 405.3 476.8 407.7M820.8 214.6Q820.6 226.8 819.7 238.8M585.3 498.4Q588.3 500.1 591.6 501.5M352.3 398.1Q345.8 400.4 340.6 405M803.6 256Q802 264.1 798.8 271.8M360.5 405Q359.8 417.4 357.9 429.6M645.6 321.4Q646 325.3 646.6 329.2M682.3 381Q681.3 378.9 681 376.6M359.9 526.9Q361.9 532.9 364.4 538.8M537.5 546.7Q541.8 549 546.7 549.4M670.6 312.2Q672 317.4 672.3 322.7M662 333.9Q662 347.8 661.7 361.6M517.1 475.4Q516.7 477.3 515.8 479.1M610.7 306.7Q622 316 633.3 325.1M431.2 562.4Q429.7 565.9 429.8 569.8M352.3 559.2Q353.4 562.6 354.6 565.9M612.8 288.2Q612.9 297.6 610.7 306.7M647.8 401.5Q642.6 404.4 636.9 406.3M594.5 394.8Q595.3 399.2 596.5 403.6M719 233.7Q730.7 232.6 741.5 228M809.5 207.1Q813.1 206.3 816.7 205.6M621.6 417.9Q628.6 422.7 635.5 427.6M560.6 415.9Q562.2 419.8 564.7 423.1M902.4 208.7Q905.7 207.1 909.4 206.6M636.9 406.3Q628.1 410.6 621.6 417.9M391.9 391.9Q388.1 394.2 384.1 396.4M880.3 216.3Q882.9 221.8 884.8 227.6M739.7 372.7Q740.2 374.9 741.2 376.9M344.7 532.2Q347.4 532.1 350 532.6M387.8 525.8Q387.7 528.6 386.9 531.1M677.8 307.7Q680.4 307.1 682.9 307.1M662 310.8Q661.5 313.5 661.4 316.3M765 290.7Q775.5 287 786.5 287.2M695.3 355.9Q686.5 358.6 677.7 361M387.2 561.8Q394.4 561.6 401.4 563.1M466.7 513.1Q467.6 519.5 468.8 525.8M803.6 256Q809.4 254.4 815.4 254.8M510.7 506.3Q515.2 506.7 519.8 506M670.6 312.2Q674.8 315.7 679.9 317.5M661.4 324.1Q663.9 323.4 666.5 323.1M426.6 440.1Q423.1 444.7 419 448.7M534.3 501.5Q535.2 502.7 536.2 503.8M515.8 487.7Q524.3 495.6 534.3 501.5M346.4 521Q346.6 526.8 344.7 532.2M627.6 354.9Q631.6 355.5 635.8 355.5M538.7 556.9Q537.9 559.7 537.8 562.7M636.5 234.7Q637.3 242 639.9 248.8M604.7 402.6Q614.3 402.5 623.8 403M537.8 562.7Q533.3 566.4 530 571.2M525.1 547.3Q526.3 550.6 527.7 553.8M842.1 281Q843.6 282.2 844.7 283.7M424.5 565.4Q427.3 567.3 429.8 569.8M828.3 261.5Q820.8 266.7 813.7 272.4M937 302.2Q934.1 303.6 931.3 305.2M664.9 290.7Q665.3 297.8 667.6 304.6M664.2 450.4Q663.2 452.5 662.6 454.9M656.3 325.1Q659.7 329.2 662 333.9M797.2 222.4Q802.8 221.9 808.5 221.8M653.6 398.9Q652.4 401.6 651.9 404.6M428.6 427.2Q434.1 426.8 439.5 426.6M597.6 411.8Q598.8 415.8 599 420M956.9 284.7Q952 288.4 948.7 293.7M748.6 364.1Q744.5 366.2 740.3 368.2M527.7 402.6Q539.4 401.6 551 402.6M473.4 455.5Q477.7 455.9 482 456.3M426.6 440.1Q433.2 437.9 440.1 436.8M619.8 277.9Q616.8 283.4 612.8 288.2M617.7 271.2Q618.5 274.6 619.8 277.9M474.7 502.4Q470 507.2 466.7 513.1M397.5 529.4Q396.7 531.4 395.7 533.4M481.6 469.2Q488.2 469.3 494.5 471.3M619.2 374.6Q623.7 377.1 628.1 379.8M689.9 380Q688.4 379.7 686.9 379.3M384.1 396.4Q386.1 403.3 387.6 410.4M404.6 429.8Q405.1 435.5 404.2 441.1M581.2 415.3Q585.2 423.1 591 429.8M630.4 486.7Q631.4 490.2 631.4 493.8M791.8 235.8Q794.8 235 797.8 235.4M791.3 329.6Q790.3 331.6 789.6 333.7M623.1 271.8Q621.1 274.7 619.8 277.9M625.3 382.5Q626.5 381 628.1 379.8M645.6 321.4Q641.9 324.9 637.4 327.2M551 402.6Q553.7 403.6 556.5 403.6M500 510.4Q500.8 521.5 499.1 532.6M354.6 565.9Q352.7 570.9 351.1 576M676.5 419.4Q673.4 421.6 670 423.1M952.1 234.7Q950.7 243.7 951.2 252.7M773.3 201.9Q775.9 202.9 778.5 204M592.4 440.5Q596.1 440.8 599.6 441.5M491.2 555.3Q492.3 558.5 493.8 561.5M657.8 173.8Q661.5 177.4 665.2 180.8M632.8 192.7Q632.3 195.4 631.2 197.8M714.9 232.7Q716.9 233.1 719 233.7M600.2 450.8Q597.8 452.4 596.1 454.9M565.4 396.4Q569.4 399 574 400.5M807.4 240.9Q813.6 239.9 819.7 238.8M537.6 484.6Q540.1 486.3 542.8 487.7M568.8 492.8Q568.3 495.8 566.8 498.4M537.6 432.9Q539.3 436.1 540.7 439.5M907.5 214.6Q909 215.2 910.6 215.3M649.9 380Q653 389.2 653.6 398.9M628.3 479.1Q628.6 483.1 630.4 486.7M949 209.7Q954.5 207.6 959.2 204M642.9 357.3Q652.2 360.2 661.7 361.6M758.4 256.8Q760.8 255.2 763.4 253.9M532.2 388.6Q531.2 396 527.7 402.6M676.2 338.1Q684.2 337.3 692.2 338.1M581.2 403.2Q588.9 403.1 596.5 403.6M424.1 559.2Q425.2 560.9 426.8 562.4M475.2 547.6Q482.6 552.6 491.2 555.3M700.5 146.5Q694.3 147.3 688.6 150M553.9 423.1Q559.3 423.6 564.7 423.1M713.8 164.4Q710.7 166.8 707.1 168.5M945.2 253.3Q946.4 254.5 947.1 256M705.5 293.7Q708.5 295.6 710.6 298.5M414.9 511.8Q418.5 521.8 424.1 530.8M542.8 524Q544.4 534.1 546 544.1M674.5 447.7Q676.6 449.3 679 450.4M730.7 162.5Q739.1 164.2 747.1 167.5M846.2 263.6Q851.6 270.2 856 277.5M873.8 281.6Q871.5 283.2 869.7 285.5M629.7 221.8Q619.8 220.5 610.3 223.5M944 305Q949.6 302.2 955.9 301.5M817.4 325.7Q821.9 330.5 827.3 333.9M854 223.5Q857.8 227.5 861.8 231.3M646.6 329.2Q648 334.5 647.1 339.9M821.5 307.3Q816 308.7 810.7 310.8M667.3 398.1Q667 400.6 666.3 403M754 360.2Q751.4 362.3 748.6 364.1M934.8 283.5Q933.4 285.3 932.9 287.6M487.1 409.3Q486.7 413.3 487.1 417.3M465.3 501.9Q470 501.2 474.7 502.4M491.8 455.5Q501.9 456 511.9 454.9M540.7 439.5Q546.2 450.1 546.9 462.1M439.5 426.6Q438.9 431.7 440.1 436.8M426.8 538.8Q433.3 537.7 439.7 536.1M453.4 559.2Q455.4 560.4 457.5 561.5M861.1 290.9Q862.9 298.4 861.5 306.1M521 518.9Q526.4 518.6 531.6 520.1M425.9 553.8Q425 556.5 424.1 559.2M750.6 299.1Q754.5 303.2 757.8 307.7M356.4 467.8Q349.2 469.4 342.7 472.9M815.4 254.8Q821.1 254.7 826.7 255.8M346.1 556.1Q349.3 557.5 352.3 559.2M908.7 250.7Q915.9 250.5 922.7 252.7M934.4 280Q934.6 281.7 934.8 283.5M744.5 351.8Q745.3 358.4 748.6 364.1M537.6 484.6Q526.9 487.3 515.8 487.7M938.7 235.2Q932.7 240.5 928.2 247.2M665.5 315.5Q666.6 319.2 666.5 323.1M761 205Q767.4 204.5 773.3 201.9M788.6 317.9Q798.6 316.5 808.6 314.9M810.7 310.8Q810 313 808.6 314.9M480.1 398.5Q480.9 400.4 482.2 402.2M826.5 205Q826.9 207.2 827.9 209.1M610.3 464.5Q613.7 465.9 616.6 468.2M564.7 415.9Q565.3 419.5 564.7 423.1M599.6 423.7Q595.6 427.2 591 429.8M531.8 432.3Q534.7 432.6 537.6 432.9M558.6 487.3Q563.2 491.1 568.8 492.8M613.6 475Q611.2 474.8 608.8 475.4M599.6 441.5Q604 445 607.8 449.1M949.6 217.9Q958.9 214.3 968.9 214.6M514.2 534Q517.9 526.6 521 518.9M915.1 213.6Q922.7 217.3 930.5 220.4M622.4 288.8Q632.9 286.8 643.6 287.2M717.8 329.2Q718.1 341.4 719.5 353.4M621.6 417.9Q620.8 425.6 623.2 432.9M496.3 481.9Q500.6 480.2 505.2 479.9M643.6 287.2Q645.4 288.1 647.1 289.2M505.2 479.9Q507.1 479.7 508.8 478.9M667.9 387.8Q671.4 384.9 675.5 383.1M665.5 315.5Q663.5 316.2 661.4 316.3M694.6 300.5Q697.4 302.7 699.4 305.6M785.5 342.6Q782.8 343.6 780.4 345.2M675.5 383.1Q678.7 383.3 681.7 384.5M604.7 402.6Q604.7 404.2 604.1 405.6M769.7 338.5Q774 339.7 778.3 340.5M951.2 252.7Q954.8 255.5 959 257.4M765 290.7Q765.1 294.6 766 298.5M483 480.1Q483.2 482.9 483.2 485.6M599 420Q599 421.9 599.6 423.7M560.5 519.6Q562.7 528.9 564.4 538.2M478.1 416.9Q478.4 426.5 479.1 436M803.6 256Q809.8 263.5 813.7 272.4M599.6 423.7Q603 425 605.8 427.2M496.3 481.9Q501 484.3 506.2 484.6M664.2 450.4Q666.1 450.9 667.9 451.8M713.7 299.9Q721.1 310.3 728.5 320.6M791.8 208.1Q796.1 209.4 800.7 209.1M667.9 451.8Q665.4 453.6 662.6 454.9M585 519.6Q575.3 529.5 564.4 538.2M916.5 281Q916.3 285.4 916.3 289.8M441.6 476.4Q445 480.5 446.7 485.6M695 428.6Q688.6 432.9 681.1 434.4M827.7 312.8Q831.7 314.4 835.9 315.5M600.2 476Q604.5 475.4 608.8 475.4M748.6 364.1Q750.7 365.1 752.2 366.8M616.6 468.2Q612.6 470.7 608.2 472.3M694.2 256.4Q702.1 257.9 710 258.1M419 448.7Q426.3 453 434.4 455.5M358.9 384.5Q355.6 391.3 352.3 398.1M746.1 178.3Q746.7 189.4 744.6 200.3M619.2 374.6Q616.7 376.2 614.8 378.4M931.9 260.5Q938.3 266.8 943 274.5M484.8 501Q484.6 502.6 484.8 504.2M901.5 285.5Q900.7 292.6 897.8 299.1M720.5 288.8Q717.6 291.1 715.8 294.4M439.7 536.1Q441.3 537.2 443.1 537.9M633.3 325.1Q635.4 326.2 637.4 327.2M769.1 345.2Q774.7 345.1 780.4 345.2M515.8 487.7Q517.5 496.9 519.8 506M533.5 474.8Q535.4 479.7 537.6 484.6M574 400.5Q577.4 402.2 581.2 403.2M650.5 263Q659.1 270.4 664.5 280.4M585 519.6Q588.7 518.9 592.5 518.4M869.1 257Q870.3 258.9 871.8 260.5M956.9 284.7Q961.3 283.6 965.7 282.7M778.5 199.9Q778 201.9 778.5 204M600.2 450.8Q604 450 607.8 449.1M677.9 160.9Q678 163.8 677.5 166.6M665.6 173.2Q664.8 177 665.2 180.8M694.8 164.4Q701 166.2 707.1 168.5M711.8 148.6Q712.7 156.5 713.8 164.4M607.8 480.9Q609.9 480.1 611.9 479.1M537.6 432.9Q540.6 435.2 544.2 436.4M775 212.8Q773.2 217.6 770.3 221.8M765.7 193.7Q762.5 199 761 205M931.9 260.5Q925.3 263.9 919 267.7M491.8 396.4Q486 397.8 480.1 398.5M626.9 476.4Q627.7 477.7 628.3 479.1M653.6 398.9Q659.5 402.3 666.3 403M698.6 378.1Q701.4 378.7 704.1 378.1M642.9 357.3Q641.9 363.7 641.1 370.1M956.9 284.7Q957.5 289.2 957.5 293.7M376.3 435Q383.5 439.6 391.9 440.9M814.4 276.5Q816.4 281.1 816.4 286.2M861.8 231.3Q864.8 237.1 865.3 243.6M950.8 258.9Q952.6 266 954.3 273.2M359.5 469.2Q362 471.1 364.6 472.7M605.8 427.2Q609.2 432.9 609.9 439.5M508.8 478.9Q512.3 478.5 515.8 479.1M429.8 569.8Q431.9 570.1 433.9 571M778.3 340.5Q782 341.1 785.5 342.6M705.5 293.7Q706 296.4 705.5 299.1M558.6 473.9Q558.9 478.9 557.6 483.6M673.1 393.9Q673 397.8 672.4 401.5M654.6 422.7Q659.4 421.9 664.2 422.7M546.7 549.4Q542.3 552.7 538.7 556.9M746.1 178.3Q749.4 178.2 752.8 178.3M650.3 208.1Q658.3 207.8 666.1 210.1M676.5 419.4Q684.4 421.6 692.5 422.7M817.4 325.7Q815.4 327 813.7 328.8M705 234.7Q710.2 235.2 715.3 236.4M833.8 282.7Q825.5 286.3 816.4 286.2M429.9 410.4Q433.4 411 437.1 411.2M657 184.1Q661.1 188.9 666.1 192.7M802.3 206.4Q801.3 207.6 800.7 209.1M600.2 491.4Q600.5 493.2 601.1 494.9M672.4 401.5Q669.3 402.1 666.3 403M642.7 195.8Q641.1 200.5 639 205M778.5 204Q777.2 208.6 775 212.8M689.6 200.3Q688.4 205.9 685.1 210.7M877.8 206Q878.3 211.3 880.3 216.3M635.9 223.1Q643 227.3 650.3 231.3M476.8 401.5Q479.5 401.6 482.2 402.2M564.7 423.1Q570.4 426.6 574.6 431.7M527.7 426.6Q530 429.2 531.8 432.3M431.9 384.1Q429.5 391.8 428.8 399.9M463.5 438.5Q467.1 437.5 470.9 437.4M783.2 190.2Q784.2 195.4 783.2 200.5M519.5 470.3Q526.2 470.4 532.8 471.3M625.3 382.5Q621.9 378.7 619.2 374.6M404.2 441.1Q404.4 444.2 405.1 447.3M397.2 522.8Q397.3 526.1 397.5 529.4M408.3 486.3Q417.8 486 427.2 486.1M797.4 293.7Q802.3 303.6 810.7 310.8M420 438.5Q418.7 443.5 419 448.7M473.8 401.5Q475.8 404.4 476.8 407.7M725.8 387.2Q727.8 389.3 729.3 391.9M766 298.5Q762.1 303.2 757.8 307.7M656.3 325.1Q658.7 324.1 661.4 324.1M744.5 351.8Q748.8 356.5 754 360.2M672 406.7Q674.3 406.7 676.5 407.1M778.3 340.5Q773.3 342 769.1 345.2M549.4 431.9Q555 431.9 560.6 431.7M661.2 416.5Q658.2 420 654.6 422.7M826.5 205Q828.2 205.6 830 206M870.8 289.8Q872.9 289.5 874.9 288.8M708.7 175.3Q708.6 177 708.7 178.7M407.3 495.9Q409.3 501.7 413.5 506.3M596.1 454.9Q597.4 459.7 600.2 463.7M667.9 387.8Q667.8 392.9 667.3 398.1M689.9 380Q694.2 378.9 698.6 378.1M625.9 491.8Q628.9 492.2 631.4 493.8M428.6 405Q411.8 407.8 394.8 409.3M630.4 486.7Q632.9 486.1 635.5 486.3M609.9 439.5Q609.7 444.5 607.8 449.1M403.7 505.1Q408.5 506.4 413.5 506.3M666.1 192.7Q667.9 201.4 666.1 210.1M832.1 214.6Q834.5 223 834.1 231.7M610 364.8Q610.8 366.9 611.8 368.9M717.8 329.2Q714.4 341.2 711.7 353.4M934.8 283.5Q940 287.2 945 291.3M768.7 259.5Q770.9 260.5 773.2 260.9M484.8 532.6Q492 531.7 499.1 532.6M482.2 402.2Q481.7 406.4 480.1 410.4M431.2 562.4Q433 563 434.8 563.6M352.3 398.1Q357 400.8 360.5 405M475.2 547.6Q473.7 548.8 472.4 550.3M664.5 280.4Q663.7 285.6 664.9 290.7M350.3 487.1Q346.4 488.9 343.1 491.8M682.3 381Q679.4 379.5 676.3 379M699.4 299.9Q699.9 302.8 699.4 305.6M682.9 307.1Q681.6 312.4 679.9 317.5M625.3 485.2Q625 488.6 625.9 491.8M711.7 353.4Q715.6 354 719.5 353.4M712.4 380Q712.3 384.3 712.4 388.6M614 383.7Q614.6 381.1 614.8 378.4M529.8 441.1Q531.6 451.5 531.2 462.1M356.4 467.8Q353.5 474.5 349.3 480.5M496.3 481.9Q490.1 485 483.2 485.6M409.4 480.5Q408.3 483.3 408.3 486.3M346.1 556.1Q343.7 560.1 339.9 562.7M519.8 506Q519.5 512.5 521 518.9M505.2 479.9Q505.6 482.3 506.2 484.6M769.1 334.4Q766.1 336.9 762.3 338.1M663.6 426.8Q663.7 430.3 664.2 433.7M639 181.4Q642.1 181.2 645.1 180.4M929.2 251.3Q930.2 256 931.9 260.5M647.8 401.5Q648.2 403.3 648.8 405M827.7 312.8Q825.5 315 823.6 317.5M372.3 558.6Q368.3 562 365.2 566.3M765.7 185.5Q766 189.6 765.7 193.7M809.5 207.1Q811.5 210.1 814.6 212.2M468.2 402.6Q471 402 473.8 401.5M902.4 208.7Q905.3 211.4 907.5 214.6M391.9 391.9Q409.5 399.9 428.8 399.9M520.9 424.7Q524.4 425.3 527.7 426.6M702.8 335Q707.5 344.1 711.7 353.4M597.6 393.3Q600.8 398.3 604.7 402.6M496.3 481.9Q497.8 487.5 500.6 492.4M599.6 423.7Q600 428 599.6 432.3M444.6 490.2Q446.6 495.5 446.3 501.2M473.8 407.7Q475.3 407.7 476.8 407.7M739.7 372.7Q733 374.1 726.5 376.1M707.3 362Q701.6 365.5 696.6 370.1M457.6 483Q462.1 482 466.8 481.9M468.2 402.6Q460.7 405.5 454.3 410.4M639.9 248.8Q644.4 256.5 650.5 263M425.9 553.8Q427.8 554.2 429.8 553.8M614 383.7Q619.7 383.7 625.3 382.5M446.7 485.6Q445.5 487.8 444.6 490.2M426.8 562.4Q425.6 563.8 424.5 565.4M346.4 521Q347.3 527.1 350 532.6M484.8 509.5Q485.5 518.2 484.1 526.9M931.9 260.5Q932.4 270.3 934.4 280M730.9 400.5Q729.5 403.3 728.8 406.3M667.6 304.6Q668.6 308.6 670.6 312.2M715.8 294.4Q712.8 295.9 710.6 298.5M765.7 185.5Q769 188.7 772.9 191.1M704.5 356.5Q706.3 359 707.3 362M537.5 546.7Q538.1 551.8 538.7 556.9M430.3 498.4Q426 499.8 422.3 502.4M677.5 166.6Q671.1 169 665.6 173.2M364.6 472.7Q362 477.8 359.5 483M887.4 192.7Q889.9 191.7 892.6 191.7M664.2 433.7Q664.6 436.6 664.2 439.5M434.4 498.4Q440.6 498.5 446.3 501.2M828.6 215.3Q830.3 214.7 832.1 214.6M832.2 272.8Q837.9 276 842.1 281M852.9 248.6Q847.5 252.1 842.7 256.4M904.5 225.9Q899.5 232 895.6 238.8M871 233.7Q868.3 238.7 865.3 243.6M664.9 290.7Q670.9 291.3 676.8 289.8M814.6 212.2Q812.3 217.5 808.5 221.8M694.6 300.5Q697 299.9 699.4 299.9M368.3 494.9Q368.8 496.4 369.4 497.9M623.1 271.8Q635 275 647.1 277.9M428.6 427.2Q428.7 433.8 426.6 440.1M645.6 321.4Q650.6 324.2 656.3 325.1M376.3 435Q371.2 441.1 366.7 447.7M359.9 526.9Q356.2 530.2 352.8 533.8M676.8 271.8Q670.4 275.8 664.5 280.4M676.2 252.9Q678.3 262.3 676.8 271.8M769.1 345.2Q765.9 347.8 762.3 349.7M508.2 425.5Q508.4 434.1 509.7 442.6M673.1 393.9Q670.1 395.9 667.3 398.1M366 548.9Q369.1 553.8 372.3 558.6M762.3 338.1Q766 341.4 769.1 345.2M672 453.4Q674.6 454.7 677.6 454.9M481.6 469.2Q481.3 471.8 482 474.4M666.3 403Q668.9 405.2 672 406.7M762.3 349.7Q753.6 352.5 744.5 351.8M657 180.4Q657.4 182.2 657 184.1M564.1 506.5Q563.1 513.3 560.5 519.6M515.8 479.1Q515.5 481.6 515.8 484.2M493.8 561.5Q493.8 569.1 491.9 576.5M824.2 311.4Q826 311.9 827.7 312.8M476.8 401.5Q478.3 399.8 480.1 398.5M564.7 423.1Q562.3 427.2 560.6 431.7M624.2 472.3Q621.6 475.1 619.1 478.1M775 212.8Q781.9 217 789.7 218.9M599.6 432.3Q600.5 436.9 599.6 441.5M531.2 426.2Q532.1 429.2 531.8 432.3M783.2 190.2Q780.1 194.7 778.5 199.9M505.7 507.4Q508.1 506.4 510.7 506.3M758.4 256.8Q761.5 257.7 764.6 258.1M699.4 305.6Q700.4 320.4 702.8 335M504.7 426.2Q496.6 430 487.7 431.7M473.8 401.5Q474.1 404.6 473.8 407.7M851.5 210.7Q864.9 209.8 877.8 206M354.6 565.9Q358.2 565.5 361.7 566.6M476.8 401.5Q476.2 404.6 476.8 407.7M796.2 287.6Q797.4 290.5 797.4 293.7M649.9 380Q658.2 379.3 666.3 381M413.3 473.9Q411.1 477.1 409.4 480.5M676.8 349.7Q678.2 355.3 677.7 361M361.7 566.6Q363.5 566.8 365.2 566.3M675.5 383.1Q675.8 381 676.3 379M592.5 522.5Q598 521.9 603.5 523.3M666.3 381Q667.6 384.3 667.9 387.8M519.5 470.3Q518.2 472.8 517.1 475.4M945.2 253.3Q948.3 253.5 951.2 252.7M706.9 271.2Q707.4 282.5 705.5 293.7M362 486.7Q358.8 489.4 355.4 491.8M799.3 335.8Q794.4 338 789.6 340.5M596.5 403.6Q600.7 403.3 604.7 402.6M408.3 486.3Q407.3 491 407.3 495.9M756.8 289.6Q754.1 294.6 750.6 299.1M720 241.9Q715.5 250.3 710 258.1M791.8 202.9Q791.4 205.5 791.8 208.1M407.3 495.9Q404.7 500.2 403.7 505.1M650.3 208.1Q647 209.9 643.7 211.6M754.9 160.3Q752.7 165.5 752.8 171.2M627.7 237.2Q622.1 239.9 616 240.9M692.2 338.1Q692.4 347.2 695.3 355.9M666.1 210.1Q675.5 212.2 685.1 210.7M754 360.2Q753 363.4 752.2 366.8M902.8 182.4Q905.2 182.6 907.5 182.4M549.4 431.9Q547.2 434.7 544.2 436.4M837.2 213.8Q839.8 210.2 841.3 206M420 438.5Q423.2 439.5 426.6 440.1M957.5 293.7Q956.6 297.6 955.9 301.5M672.4 401.5Q672.1 404.1 672 406.7M660.8 252.7Q668.5 251.7 676.2 252.9M726.5 368.8Q725.9 372.4 726.5 376.1M924.8 226.5Q927.1 225.5 929.5 224.5M368.7 475.4Q375.9 481.4 383.5 486.7M474.7 502.4Q479.8 502.6 484.8 504.2M350.3 487.1Q352.7 489.6 355.4 491.8M352.8 533.8Q358.9 535.6 364.4 538.8M728.5 320.6Q730.9 322.3 733.6 323.5M712.4 380Q715.1 382.7 716.5 386.2M467.2 452.2Q467.3 458 465.6 463.5M429.9 410.4Q430.3 418.8 428.6 427.2M412.1 561.8Q418.3 563.3 424.5 565.4M487.7 431.7Q497.8 438.9 509.7 442.6M647.1 339.9Q639.1 344.4 630 345.2M454.9 421Q455.2 428.2 455.9 435.4M716.5 386.2Q714.7 387.8 712.4 388.6M651.9 404.6Q652.6 406.1 652.9 407.7M799.3 335.8Q806.5 332.2 813.7 328.8M464.1 468.6Q461.8 472.7 459 476.4M395.7 533.4Q401.4 537.5 406 542.7M663.6 426.8Q665.9 428.1 668.3 429.2M592.5 522.5Q594.7 526.1 598.1 528.7M537.6 471.3Q541.7 466.2 546.9 462.1M668.3 429.2Q665.8 431 664.2 433.7M529.8 441.1Q535.1 439.5 540.7 439.5M357.9 429.6Q360.5 439.5 366.7 447.7M945.2 253.3Q939.3 258.2 931.9 260.5M674.5 447.7Q673.9 450.8 672 453.4M772.9 191.1Q769.6 193 765.7 193.7M596.5 481.9Q598.1 482.1 599.6 481.9M702.8 335Q704.9 345.6 704.5 356.5M599.6 481.9Q603.7 481 607.8 480.9M679 450.4Q678.1 452.6 677.6 454.9M428.6 405Q429.8 407.6 429.9 410.4M639 181.4Q642.2 186.6 645.5 191.7M474.8 396.4Q475.9 398.9 476.8 401.5M761 205Q760.5 208.7 759 212.2M717.8 329.2Q723.3 341.3 732.6 350.8M786.5 287.2Q788.9 287 791.3 287.2M455.2 508.3Q461.1 510.1 466.7 513.1M660.8 252.7Q655.2 257.4 650.5 263M666.5 323.1Q669.4 323.3 672.3 322.7M482.2 402.2Q485.1 405.4 487.1 409.3M440.1 436.8Q445.5 442.6 448.7 449.7M531.8 432.3Q529.9 436.5 529.8 441.1M370 545Q368.1 547 366 548.9M365.2 566.3Q369.1 567 373 567.7M667.6 304.6Q664.9 307.7 662 310.8M635.8 355.5Q639.2 356.9 642.9 357.3M371.8 453.2Q370.9 457.4 369.8 461.4M675.5 383.1Q679 382.4 682.3 381M538 522.8Q540.5 523 542.8 524M537.6 471.3Q535.2 472.7 533.5 474.8M819.7 238.8Q823.1 247.4 826.7 255.8M603.6 503.8Q602.6 506.3 601.3 508.6M913.4 288.8Q915 289 916.3 289.8M708.7 175.3Q712.8 175.4 716.9 174.8M789.7 218.9Q793.5 220.5 797.2 222.4M916.3 289.8Q916 291.4 915.5 292.9M833.8 323.7Q835.9 323.3 837.9 323.1M667.9 451.8Q670 452.5 672 453.4M643.7 479.1Q644.3 480.5 644.7 481.9M832.2 272.8Q833.5 277.7 833.8 282.7M434.4 455.5Q432 467.2 429.3 478.9M665.2 180.8Q666.8 186.7 666.1 192.7M625.4 364.2Q625.8 367.1 625.4 370.1M616.6 468.2Q620.5 470.2 624.2 472.3M770.3 221.8Q764.2 232.1 761.9 243.7M440.1 436.8Q448 435.9 455.9 435.4M483.2 485.6Q483.8 493.3 484.8 501M341.7 550.3Q343.4 553.6 346.1 556.1M510.3 469.2Q514.8 470.4 519.5 470.3M799.5 286.8Q808 286.9 816.4 286.2M366 548.9Q359.8 554.9 352.3 559.2M694.2 256.4Q686.7 265.5 676.8 271.8M723.7 383.7Q725.1 385.3 725.8 387.2M666.3 403Q666.2 405 666.3 407.1M376.8 546.2Q374.3 552.3 372.3 558.6M585 519.6Q589 520.3 592.5 522.5M657 180.4Q661.1 181.2 665.2 180.8M712.4 143.1Q712.2 145.8 711.8 148.6M452.2 481.9Q449.4 483.7 446.7 485.6M494.5 471.3Q488.5 474 482 474.4M666.3 407.1Q669.2 407.3 672 406.7M665.2 180.8Q661.3 183 657 184.1M387.2 561.8Q380.1 564.8 373 567.7M814.6 212.2Q817.7 213.5 820.8 214.6M906.7 267.7Q899.6 268.7 893.3 272.2M359.5 497.5Q354.5 502.5 347.9 505.1M741.5 228Q739.6 239.2 739.4 250.7M765.7 193.7Q769.7 197.7 773.3 201.9M819.9 301.1Q820.3 304.3 821.5 307.3M833.8 323.7Q830.2 328.6 827.3 333.9M635.5 427.6Q629 429.4 623.2 432.9M626.9 476.4Q622.9 476.6 619.1 478.1M518.5 443.6Q524.3 443.1 529.8 441.1M491.8 396.4Q487.5 400.1 482.2 402.2M549.8 465.1Q554.1 469.6 558.6 473.9M910.6 215.3Q913 214.7 915.1 213.6M956.9 284.7Q959.7 289.2 963.5 292.9M634.5 471.3Q630.2 473.1 626.9 476.4M600.2 476Q600 479 599.6 481.9M719 233.7Q720.4 237.7 720 241.9M965.7 282.7Q966.7 287.3 968.6 291.7M763.4 253.9Q764.2 255.9 764.6 258.1M796.2 287.6Q797.8 287.3 799.5 286.8M376.9 397Q376.8 405.3 373.5 412.8M676.8 349.7Q675.8 355.5 674.1 361M506.2 484.6Q506.3 486.9 506.6 489.1M594.5 496.9Q593.4 499.5 591.6 501.5M518.5 443.6Q515.7 449.5 511.9 454.9M594.5 394.8Q595.9 393.8 597.6 393.3M677.8 307.7Q678 312.8 679.9 317.5M598.1 528.7Q599.9 530.9 602.2 532.6M653.8 328.6Q650.2 328.7 646.6 329.2M560.6 415.9Q562.7 416.3 564.7 415.9M588.9 532.2Q588.8 534 588.4 535.8M560.5 519.6Q551.5 521 542.8 524M704.5 356.5Q707.8 354.3 711.7 353.4M906.7 267.7Q909.2 268.7 911.8 269.3M564.7 415.9Q568.8 415.3 572.9 415.9M911.8 269.3Q915.2 267.7 919 267.7M842.7 256.4Q835.9 260 830.8 265.6M527.7 402.6Q525.4 414 520.9 424.7M915.5 292.9Q918.3 293.2 921 292.3M754.9 160.3Q750.7 163.6 747.1 167.5M732.3 152.3Q731.1 157.3 730.7 162.5M681.7 384.5Q680.8 388.9 680.6 393.3M672 453.4Q669.5 455 667.9 457.5M623.2 432.9Q624.1 435.6 624.2 438.5M921 292.3Q927.5 291.2 932.9 287.6M873.8 274.9Q874.1 278.3 873.8 281.6M681 233.7Q680.3 243.8 676.2 252.9M742 292.9Q732.7 305.5 728.5 320.6M600.2 463.7Q605.3 463.2 610.3 464.5M802.3 206.4Q805.9 206.7 809.5 207.1M362 486.7Q364.6 491.2 368.3 494.9M679 440.1Q677.1 444.1 674.5 447.7M786.7 228Q788.9 232.1 791.8 235.8M635.9 223.1Q635.8 228.9 636.5 234.7M617.7 271.2Q620.4 271.7 623.1 271.8M437.1 411.2Q445.6 409.4 454.3 410.4M474.7 502.4Q479.8 502.2 484.8 501M635.5 427.6Q640.6 432.3 646.8 435.4M487.7 431.7Q483.8 434.5 479.1 436M499.1 532.6Q503.6 535.8 508.9 537M433 550.3Q437.6 551.2 442.2 550.3M769.7 330.3Q772.1 331.6 774.2 333.3M473.4 455.5Q468.7 458.7 465.6 463.5M511.9 454.9Q510.3 462 510.3 469.2M600.8 513.9Q596.2 515.3 592.5 518.4M778.3 340.5Q779 343 780.4 345.2M873.8 274.9Q875.8 274 877.9 273.8M701.5 141Q707 141.8 712.4 143.1M728.5 320.6Q723 324.8 717.8 329.2M603.5 523.3Q600.9 526.1 598.1 528.7M602.2 518.9Q597.7 521.5 592.5 522.5M957.5 293.7Q960.4 292.7 963.5 292.9M733.6 323.5Q738.6 327.2 742.8 331.7M723.7 383.7Q725 379.8 726.5 376.1M720 241.9Q729.5 246.6 739.4 250.7M848.6 317.9Q842.8 319.4 837.9 323.1M963.5 292.9Q965.9 291.8 968.6 291.7M431.9 384.1Q434.2 384.2 436.4 384.5M436.4 384.5Q454.2 389.8 472.7 389.2M639 181.4Q635.1 186.6 632.8 192.7M830 206Q829.2 207.7 827.9 209.1M474.8 396.4Q474.1 398.9 473.8 401.5M934.4 293.7Q935.4 296.5 935.4 299.5M831.8 303.6Q828.8 307.8 827.7 312.8M471.9 417.9Q474.9 417.1 478.1 416.9M645.1 180.4Q645.1 186 645.5 191.7M884.8 227.6Q886.8 229.3 888.9 231.1M768.7 259.5Q767.1 261.2 765.6 263M890.3 262.6Q892.4 267.2 893.3 272.2M387.6 410.4Q380.6 412 373.5 412.8M356.4 467.8Q358 468.4 359.5 469.2M405.1 447.3Q412 448.4 419 448.7M491.2 416.5Q498.1 421.1 504.7 426.2M664.5 280.4Q670.5 285.4 676.8 289.8M628.1 371.5Q628.1 375.7 628.1 379.8M515.8 484.2Q515.7 485.9 515.8 487.7M682.3 381Q684.8 380.7 686.9 379.3M680.9 282.5Q680.6 286.2 680.5 289.8M724.7 149.2Q728.5 150.8 732.3 152.3M383.5 486.7Q375.7 490.4 368.3 494.9M548.1 554.2Q543.4 555.4 538.7 556.9M739.4 352.8Q740.1 360.5 740.3 368.2M572.9 415.9Q577 415.1 581.2 415.3M588.4 535.8Q576.4 536.8 564.4 538.2M769.1 334.4Q769.6 336.4 769.7 338.5M444.6 490.2Q439.2 493.9 434.4 498.4M445.7 464.5Q442.6 470.1 441.6 476.4M787.6 275.3Q786.3 281.2 786.5 287.2M765.7 219.4Q767.8 220.9 770.3 221.8M372.3 558.6Q373.3 563.1 373 567.7M637.6 437.4Q642 435.5 646.8 435.4M414.9 511.8Q414.1 524.7 409.9 537M685.1 210.7Q685.3 212.7 685.5 214.6M616 463.1Q617.6 463.1 619.1 463.7M553.1 485.2Q555.2 484 557.6 483.6M761.9 243.7Q761.5 249 763.4 253.9M366.3 384.5Q372 390.4 376.9 397M939.7 211.6Q944.2 209.8 949 209.7M484.8 504.2Q492.4 504.7 500 505.1M592 433.7Q591.9 437.1 592.4 440.5M558.6 459.6Q563.8 465.3 568.8 471.3M909.4 206.6Q910.7 210.8 910.6 215.3M661.7 361.6Q667.9 361.3 674.1 361M695.3 355.9Q696.3 357.5 696.7 359.5M778.9 249.2Q770.9 250.8 763.4 253.9M468.2 402.6Q470.5 405.7 473.8 407.7M625.9 491.8Q617.9 498.2 608.1 501M622.4 288.8Q633.5 305.5 645.6 321.4M491.8 455.5Q492.2 461.2 494.3 466.6M694.6 300.5Q688.6 303.4 682.9 307.1M896.4 249.2Q897.9 249 899.5 249.2M347.9 505.1Q348.7 513.2 346.4 521M616 240.9Q617.3 247.1 618.3 253.3M715.8 294.4Q715.3 297.3 713.7 299.9M651.5 419.4Q652.8 421.3 654.6 422.7M717.8 329.2Q710.3 332 702.8 335M791.8 235.8Q785.9 243 778.9 249.2M881.6 273.4Q885.8 273.6 889.8 272.8M443.1 537.9Q443.4 544.1 442.2 550.3M383.5 486.7Q388.1 490.6 392.7 494.5M712.4 388.6Q706.3 391 700.1 393.3M475.9 565.4Q477.9 571 477.9 576.9M386.9 531.1Q380.8 538 376.8 546.2M677.5 166.6Q679.2 171.3 681.6 175.7M835.9 315.5Q842.4 315.9 848.6 317.9M788.6 317.9Q788 323.3 787.2 328.6M650.3 231.3Q643.5 233.6 636.5 234.7M667.9 387.8Q669.9 391.4 673.1 393.9M639 205Q637.2 208.2 635.9 211.6M558.6 459.6Q553.6 461.5 549.8 465.1M645.5 173.8Q644.9 177.1 645.1 180.4M494.5 471.3Q494.7 476.7 496.3 481.9M634.5 471.3Q629.4 472.2 624.2 472.3M524.6 386.2Q528.2 388 532.2 388.6M596.1 472.9Q598.3 474.3 600.2 476M965.7 282.7Q963.9 287.6 963.5 292.9M391.9 440.9Q398.1 441.6 404.2 441.1M681.1 434.4Q680 437.2 679 440.1M487.1 417.3Q489.1 416.6 491.2 416.5M715.3 236.4Q717.5 239.3 720 241.9M616.6 468.2Q614.9 471.5 613.6 475M952.8 296.8Q948.1 300.6 944 305M364.6 472.7Q366.9 473.7 368.7 475.4M350 532.6Q351.5 533 352.8 533.8M647.1 277.9Q645.2 282.5 643.6 287.2M368.3 494.9Q363.7 495.5 359.5 497.5M401.4 563.1Q406.7 561.8 412.1 561.8M482 474.4Q473.7 476.8 466.8 481.9M494.3 466.6Q493.9 468.9 494.5 471.3M546.3 498.4Q541.8 502 536.2 503.8M676.8 271.8Q678.3 277.3 680.9 282.5M443.6 531.7Q443.9 534.8 443.1 537.9M443.6 455.9Q445.2 460.1 445.7 464.5M661.4 324.1Q664.1 326.7 666.5 329.6M536.6 517Q534.5 519.1 531.6 520.1M688.6 150Q684 152.8 680 156.4M648.8 405Q650.4 404.8 651.9 404.6M349.3 480.5Q354.5 481.4 359.5 483M641.3 410.8Q639.3 414.5 638.6 418.6M659.5 429.2Q661.8 428.4 663.6 426.8M635.9 211.6Q639.8 211.5 643.7 211.6M466.7 552.6Q462.4 557.4 457.5 561.5M677.6 454.9Q679.2 456.5 681.1 457.9M685.5 214.6Q698.8 216.1 711.8 218.7M823.6 317.5Q828.2 321.5 833.8 323.7M865.6 287.6Q863.5 289.4 861.1 290.9M943 274.5Q939.1 277.9 934.4 280M584.2 484.6Q590.1 482 596.5 481.9M880.3 216.3Q890.8 210.9 902.4 208.7M599.6 432.3Q605.4 435 609.9 439.5M820.8 214.6Q824.9 212.5 827.9 209.1M835.9 315.5Q836.6 319.4 837.9 323.1M676.5 419.4Q678.5 427 681.1 434.4M635.5 427.6Q635.6 432.7 637.6 437.4M480.1 410.4Q483.6 410 487.1 409.3M797.2 222.4Q796.9 228.9 797.8 235.4M739.4 250.7Q750.1 245.5 761.9 243.7M360.5 405Q367.4 408.3 373.5 412.8M471.9 417.9Q463.3 419 454.9 421M728.9 361.4Q734.1 365.6 740.3 368.2M600.2 463.7Q604.6 467.6 608.2 472.3M756.8 289.6Q760.9 290.1 765 290.7M472.7 389.2Q474.1 392.7 474.8 396.4M611.8 368.9Q613.7 373.5 614.8 378.4M800.7 209.1Q798.7 215.7 797.2 222.4M463.5 438.5Q464.1 445.7 467.2 452.2M729.3 391.9Q729.2 396.4 730.9 400.5M369.8 461.4Q367 467 364.6 472.7M406 542.7Q407.5 543.4 408.5 544.6M601.1 494.9Q600.6 498.3 599.6 501.5M506.2 484.6Q510.9 486.5 515.8 487.7M773.2 260.9Q779 269.4 787.6 275.3M666.3 381Q671.1 381.3 675.5 383.1M519.5 470.3Q519.4 472.9 520.1 475.4M491.8 396.4Q488.4 402.5 487.1 409.3M676.5 407.1Q687.6 407 698.1 410.8M739.4 250.7Q729 257.3 721.5 267.1M566.8 498.4Q564 501.2 561.4 504.2M602.2 518.9Q597.4 517.9 592.5 518.4M596.5 403.6Q600.3 404.9 604.1 405.6M560.6 431.7Q567.6 432.2 574.6 431.7M828.3 261.5Q829.3 263.7 830.8 265.6M467.2 485.2Q475.2 485.1 483.2 485.6M532.8 471.3Q526.6 473.7 520.1 475.4M574.6 431.7Q583 432.5 591 429.8M708.7 178.7Q716.7 193.7 723.1 209.5M747.1 167.5Q747.4 173 746.1 178.3M680.5 289.8Q682.3 298.4 682.9 307.1M666.1 210.1Q666 211.9 666.1 213.6M712.4 380Q708.2 379.6 704.1 378.1M472.4 550.3Q474.4 557.8 475.9 565.4M890.3 262.6Q889.8 267.7 889.8 272.8M387.6 410.4Q391.2 409.7 394.8 409.3M808.6 314.9Q812.4 320.8 817.4 325.7M611.8 368.9Q618.6 366.6 625.4 364.2M708.7 178.7Q700 190.2 689.6 200.3M340 425.1Q348.7 428.3 357.9 429.6M877.2 198.8Q877.4 202.4 877.8 206M553.1 485.2Q549.8 491.9 546.3 498.4M612.8 288.2Q617.7 287.8 622.4 288.8M472.4 550.3Q469.3 550.8 466.7 552.6M366.5 573.7Q370 573.3 373.6 573.9M433 550.3Q431.5 552.1 429.8 553.8M719.5 353.4Q726.1 352.3 732.6 350.8M716.5 386.2Q720.4 385.6 723.7 383.7M405.1 447.3Q406.8 453.7 407.3 460.4M424.1 530.8Q417.6 535.1 409.9 537M484.1 526.9Q484.2 529.8 484.8 532.6M373.6 573.9Q379.4 575.7 385.5 575.1M813.7 272.4Q814.1 274.5 814.4 276.5M464.1 468.6Q464.4 472.2 466.2 475.4M652.9 407.7Q659.6 406.9 666.3 407.1M429.8 553.8Q429.8 558.2 431.2 562.4M560.5 538.8Q562.4 538.1 564.4 538.2M592.5 522.5Q590.3 527.2 588.9 532.2M537.6 471.3Q544.2 469.2 549.8 465.1M934.4 293.7Q939.6 292 945 291.3M668.3 429.2Q674.3 432.8 681.1 434.4M645.1 180.4Q651.1 180.6 657 180.4M638.6 418.6Q645.1 418.5 651.5 419.4M537.6 484.6Q537.6 493.4 534.3 501.5M945 291.3Q946.8 292.6 948.7 293.7M661.2 416.5Q662.9 419.5 664.2 422.7M625.3 382.5Q624.1 388.9 623.2 395.4M531.6 520.1Q530.2 534.1 525.1 547.3M816.7 205.6Q816.3 209.1 814.6 212.2M476.8 407.7Q478.7 408.7 480.1 410.4M861.5 306.1Q854.7 311.6 848.6 317.9M592 433.7Q590.9 437.1 588.7 439.9M581.2 403.2Q581.7 409.2 581.2 415.3M909.4 206.6Q908.3 210.6 907.5 214.6M468.8 525.8Q476.5 525.6 484.1 526.9M474.8 396.4Q477.5 397.4 480.1 398.5M524.6 386.2Q514.9 391.7 504.7 396.4M509.7 442.6Q514 443.6 518.5 443.6M704.5 356.5Q700.7 358.2 696.7 359.5M342.7 472.9Q343.9 475.4 344.5 478.1M596.5 481.9Q591.1 484.9 587.3 489.7M742.8 331.7Q745.1 341.6 744.5 351.8M344.5 478.1Q346.8 479.4 349.3 480.5M599.6 481.9Q599.7 486.7 600.2 491.4M370 545Q373.4 545.4 376.8 546.2M409.9 537Q407.7 539.6 406 542.7M791.3 287.2Q793.7 287.7 796.2 287.6M616 240.9Q613.4 244.1 610.7 247.2M700.5 146.5Q703.5 147.3 706.3 148.6M672.3 322.7Q674.2 322 676.2 322.1M509.7 442.6Q499.7 447.6 491.8 455.5M459 476.4Q457.6 479.5 457.6 483M697.1 414.5Q702.6 415 707.9 416.5M772.9 191.1Q778 190.2 783.2 190.2M719.5 353.4Q724.7 356 730.1 357.9M637.4 327.2Q641.9 328.8 646.6 329.2M865.3 243.6Q866.2 250.6 869.1 257M591 429.8Q591.3 431.9 592 433.7M531.6 520.1Q534.7 521.7 538 522.8M717.5 217.3Q720.5 213.6 723.1 209.5M630 345.2Q629.8 350.3 627.6 354.9M916.3 289.8Q918.7 291.1 921 292.3M592 433.7Q595.9 433.4 599.6 432.3M826.7 255.8Q827.7 258.6 828.3 261.5M666.3 407.1Q664.2 412.1 661.2 416.5M675.5 383.1Q674.5 388.6 673.1 393.9M467.6 492.4Q466.3 497.1 465.3 501.9M546.9 462.1Q548.7 463.3 549.8 465.1M832.1 214.6Q834.7 214.5 837.2 213.8M713.8 164.4Q714.9 169.8 716.9 174.8M856 277.5Q850.7 281.3 844.7 283.7M599.6 472.3Q600.1 474.1 600.2 476M644.7 481.9Q643.4 483.5 641.7 484.6M789.7 218.9Q788.4 223.5 786.7 228M902.4 208.7Q891.7 216.3 884.8 227.6M851.5 210.7Q853.1 217 854 223.5M556.1 406.7Q557.5 411.7 560.6 415.9M740.3 368.2Q740.3 370.5 739.7 372.7M608.2 472.3Q608.7 473.8 608.8 475.4M625.4 370.1Q626.8 370.8 628.1 371.5M908.7 250.7Q909 259.3 906.7 267.7M699.4 299.9Q702.4 299 705.5 299.1M494.3 466.6Q487.8 467.4 481.6 469.2M397.2 522.8Q392.6 524.6 387.8 525.8M443.6 531.7Q441.5 533.7 439.7 536.1M446.3 501.2Q451.1 504.2 455.2 508.3M705.5 299.1Q708 298.5 710.6 298.5M694.2 256.4Q699.3 264.9 706.9 271.2M364.4 538.8Q367.1 542 370 545M564.4 538.2Q563.8 542.1 562 545.5M768.1 327.2Q769 328.7 769.7 330.3M666.5 323.1Q667.1 326.4 666.5 329.6M739.4 352.8Q741.8 351.8 744.5 351.8M448.7 449.7Q457 456.9 465.6 463.5M666.3 381Q671.1 379.1 676.3 379M365.2 566.3Q366.3 569.9 366.5 573.7M712.4 143.1Q715.6 145 717.9 148M710 258.1Q709.6 264.9 706.9 271.2M453.4 519.6Q448.6 525.8 443.6 531.7M651.9 436.4Q658.3 437 664.2 439.5M769.7 338.5Q769.7 341.9 769.1 345.2M948.7 293.7Q950.8 295.2 952.8 296.8M506.6 489.1Q503.8 491.2 500.6 492.4M742.8 331.7Q753.1 333.3 762.3 338.1M952.8 296.8Q954.9 294.9 957.5 293.7M358.9 384.5Q362.6 385.2 366.3 384.5M607.8 449.1Q611.5 453.1 614.6 457.5M835.9 315.5Q835 319.6 833.8 323.7M349.3 480.5Q349.4 483.9 350.3 487.1M677.7 361Q677 366.3 677.7 371.5M600.2 463.7Q599.6 468 599.6 472.3M600.2 476Q603.6 479.1 607.8 480.9M685.5 214.6Q683.1 224.1 681 233.7M791.8 208.1Q791.6 213.7 789.7 218.9M386.9 531.1Q391.3 532.5 395.7 533.4M369.8 461.4Q364.7 465.4 359.5 469.2M506.2 484.6Q511 485.1 515.8 484.2M408.7 473.7Q411 473.6 413.3 473.9M594.5 496.9Q596.8 499.4 599.6 501.5M339.1 141.4Q347.8 138 354.5 136.9Q361.3 135.8 368.1 135Q374.8 134.2 377.8 135Q380.7 135.8 393.6 137.6Q406.6 139.5 412.3 141.4Q417.9 143.3 423.4 141.4Q429 139.5 435.9 138.8Q442.9 138 456.8 138M430.5 94.4Q428.4 102.9 426.1 110.6Q423.7 118.3 418.8 123.3Q413.9 128.2 410.3 133.9Q406.6 139.5 403 146.7Q399.3 154 387.8 155.5Q376.4 157 369.8 158.1Q363.2 159.2 351 162.4M424.3 102.5Q423.7 118.3 419.8 126.1Q415.8 133.9 415.3 144.8M435.6 99.1L428.4 102.9M339.1 120.2Q344.4 124.5 346.1 131.2Q347.8 138 349.4 150.2Q351 162.4 350.3 166.8Q349.7 171.1 350 174.6Q350.4 178 351.5 184.2M374.8 133.5Q376.4 157 373.3 162.3Q370.2 167.7 368.7 170.5Q367.3 173.3 371.7 180.5M339.1 170.5Q349.7 171.1 359.2 171.3Q368.8 171.5 387.7 171Q406.6 170.5 422.4 171.8M408.7 166.4Q425.8 164.3 447.8 167.7M417.9 143.3Q415.3 150.8 412 158.6Q408.7 166.4 407.7 168.5Q406.6 170.5 404.5 190.3M411.1 147Q399.3 154 388.8 166Q378.2 178 373.9 183.1M339.1 175.8Q350.4 178 353.8 178.8Q357.2 179.5 364.4 180Q371.7 180.5 375.4 181.2M370.2 167.7Q378.2 178 385.8 190.3M348.2 187.4Q351.5 184.2 357.2 179.5" fill="none" stroke="#b2b2b2" stroke-width="0.7"/>
<path d="M430.5 92.5l1.9 1.9l-1.9 1.9l-1.9-1.9zM435.6 97.2l1.9 1.9l-1.9 1.9l-1.9-1.9zM424.3 100.6l1.9 1.9l-1.9 1.9l-1.9-1.9zM428.4 101l1.9 1.9l-1.9 1.9l-1.9-1.9zM423.7 116.4l1.9 1.9l-1.9 1.9l-1.9-1.9zM339.1 118.3l1.9 1.9l-1.9 1.9l-1.9-1.9zM374.8 131.6l1.9 1.9l-1.9 1.9l-1.9-1.9zM380.7 133.9l1.9 1.9l-1.9 1.9l-1.9-1.9zM347.8 136.1l1.9 1.9l-1.9 1.9l-1.9-1.9zM406.6 137.6l1.9 1.9l-1.9 1.9l-1.9-1.9zM442.9 136.1l1.9 1.9l-1.9 1.9l-1.9-1.9zM456.8 136.1l1.9 1.9l-1.9 1.9l-1.9-1.9zM417.9 141.4l1.9 1.9l-1.9 1.9l-1.9-1.9zM415.3 142.9l1.9 1.9l-1.9 1.9l-1.9-1.9zM411.1 145.1l1.9 1.9l-1.9 1.9l-1.9-1.9zM415.3 148.9l1.9 1.9l-1.9 1.9l-1.9-1.9zM399.3 152.1l1.9 1.9l-1.9 1.9l-1.9-1.9zM376.4 155.1l1.9 1.9l-1.9 1.9l-1.9-1.9zM351 160.5l1.9 1.9l-1.9 1.9l-1.9-1.9zM425.8 162.4l1.9 1.9l-1.9 1.9l-1.9-1.9zM408.7 164.5l1.9 1.9l-1.9 1.9l-1.9-1.9zM370.2 165.8l1.9 1.9l-1.9 1.9l-1.9-1.9zM406.6 168.6l1.9 1.9l-1.9 1.9l-1.9-1.9zM422.4 169.9l1.9 1.9l-1.9 1.9l-1.9-1.9zM349.7 169.2l1.9 1.9l-1.9 1.9l-1.9-1.9zM368.8 169.6l1.9 1.9l-1.9 1.9l-1.9-1.9zM367.3 171.4l1.9 1.9l-1.9 1.9l-1.9-1.9zM339.1 168.6l1.9 1.9l-1.9 1.9l-1.9-1.9zM339.1 173.9l1.9 1.9l-1.9 1.9l-1.9-1.9zM350.4 176.1l1.9 1.9l-1.9 1.9l-1.9-1.9zM357.2 177.6l1.9 1.9l-1.9 1.9l-1.9-1.9zM378.2 176.1l1.9 1.9l-1.9 1.9l-1.9-1.9zM371.7 178.6l1.9 1.9l-1.9 1.9l-1.9-1.9zM375.4 179.3l1.9 1.9l-1.9 1.9l-1.9-1.9zM373.9 181.2l1.9 1.9l-1.9 1.9l-1.9-1.9zM351.5 182.3l1.9 1.9l-1.9 1.9l-1.9-1.9zM348.2 185.5l1.9 1.9l-1.9 1.9l-1.9-1.9zM700.5 125.2l1.9 1.9l-1.9 1.9l-1.9-1.9zM701.5 139.1l1.9 1.9l-1.9 1.9l-1.9-1.9zM712.4 141.2l1.9 1.9l-1.9 1.9l-1.9-1.9zM700.5 144.6l1.9 1.9l-1.9 1.9l-1.9-1.9zM706.3 146.7l1.9 1.9l-1.9 1.9l-1.9-1.9zM711.8 146.7l1.9 1.9l-1.9 1.9l-1.9-1.9zM717.9 146.1l1.9 1.9l-1.9 1.9l-1.9-1.9zM724.7 147.3l1.9 1.9l-1.9 1.9l-1.9-1.9zM732.3 150.4l1.9 1.9l-1.9 1.9l-1.9-1.9zM688.6 148.1l1.9 1.9l-1.9 1.9l-1.9-1.9zM680 154.5l1.9 1.9l-1.9 1.9l-1.9-1.9zM665.6 155.5l1.9 1.9l-1.9 1.9l-1.9-1.9zM665.6 158l1.9 1.9l-1.9 1.9l-1.9-1.9zM677.9 159l1.9 1.9l-1.9 1.9l-1.9-1.9zM694.8 162.5l1.9 1.9l-1.9 1.9l-1.9-1.9zM713.8 162.5l1.9 1.9l-1.9 1.9l-1.9-1.9zM730.7 160.6l1.9 1.9l-1.9 1.9l-1.9-1.9zM754.9 158.4l1.9 1.9l-1.9 1.9l-1.9-1.9zM677.5 164.7l1.9 1.9l-1.9 1.9l-1.9-1.9zM707.1 166.6l1.9 1.9l-1.9 1.9l-1.9-1.9zM747.1 165.6l1.9 1.9l-1.9 1.9l-1.9-1.9zM752.8 169.3l1.9 1.9l-1.9 1.9l-1.9-1.9zM645.5 171.9l1.9 1.9l-1.9 1.9l-1.9-1.9zM657.8 171.9l1.9 1.9l-1.9 1.9l-1.9-1.9zM665.6 171.3l1.9 1.9l-1.9 1.9l-1.9-1.9zM667.3 171.3l1.9 1.9l-1.9 1.9l-1.9-1.9zM681.6 173.8l1.9 1.9l-1.9 1.9l-1.9-1.9zM708.7 173.4l1.9 1.9l-1.9 1.9l-1.9-1.9zM716.9 172.9l1.9 1.9l-1.9 1.9l-1.9-1.9zM718.6 175.4l1.9 1.9l-1.9 1.9l-1.9-1.9zM746.1 176.4l1.9 1.9l-1.9 1.9l-1.9-1.9zM752.8 176.4l1.9 1.9l-1.9 1.9l-1.9-1.9zM639 179.5l1.9 1.9l-1.9 1.9l-1.9-1.9zM645.1 178.5l1.9 1.9l-1.9 1.9l-1.9-1.9zM657 178.5l1.9 1.9l-1.9 1.9l-1.9-1.9zM665.2 178.9l1.9 1.9l-1.9 1.9l-1.9-1.9zM657 182.2l1.9 1.9l-1.9 1.9l-1.9-1.9zM708.7 176.8l1.9 1.9l-1.9 1.9l-1.9-1.9zM765.7 183.6l1.9 1.9l-1.9 1.9l-1.9-1.9zM772.9 189.2l1.9 1.9l-1.9 1.9l-1.9-1.9zM783.2 188.3l1.9 1.9l-1.9 1.9l-1.9-1.9zM792.8 178.5l1.9 1.9l-1.9 1.9l-1.9-1.9zM793.8 184.6l1.9 1.9l-1.9 1.9l-1.9-1.9zM791.8 172.3l1.9 1.9l-1.9 1.9l-1.9-1.9zM632.8 190.8l1.9 1.9l-1.9 1.9l-1.9-1.9zM645.5 189.8l1.9 1.9l-1.9 1.9l-1.9-1.9zM666.1 190.8l1.9 1.9l-1.9 1.9l-1.9-1.9zM642.7 193.9l1.9 1.9l-1.9 1.9l-1.9-1.9zM631.2 195.9l1.9 1.9l-1.9 1.9l-1.9-1.9zM765.7 191.8l1.9 1.9l-1.9 1.9l-1.9-1.9zM689.6 198.4l1.9 1.9l-1.9 1.9l-1.9-1.9zM744.6 198.4l1.9 1.9l-1.9 1.9l-1.9-1.9zM739.5 202.1l1.9 1.9l-1.9 1.9l-1.9-1.9zM745.2 200.6l1.9 1.9l-1.9 1.9l-1.9-1.9zM751.8 200.2l1.9 1.9l-1.9 1.9l-1.9-1.9zM761 203.1l1.9 1.9l-1.9 1.9l-1.9-1.9zM773.3 200l1.9 1.9l-1.9 1.9l-1.9-1.9zM778.5 198l1.9 1.9l-1.9 1.9l-1.9-1.9zM783.2 198.6l1.9 1.9l-1.9 1.9l-1.9-1.9zM778.5 202.1l1.9 1.9l-1.9 1.9l-1.9-1.9zM791.8 201l1.9 1.9l-1.9 1.9l-1.9-1.9zM791.8 206.2l1.9 1.9l-1.9 1.9l-1.9-1.9zM639 203.1l1.9 1.9l-1.9 1.9l-1.9-1.9zM650.3 206.2l1.9 1.9l-1.9 1.9l-1.9-1.9zM666.1 208.2l1.9 1.9l-1.9 1.9l-1.9-1.9zM635.9 209.7l1.9 1.9l-1.9 1.9l-1.9-1.9zM643.7 209.7l1.9 1.9l-1.9 1.9l-1.9-1.9zM685.1 208.8l1.9 1.9l-1.9 1.9l-1.9-1.9zM666.1 211.7l1.9 1.9l-1.9 1.9l-1.9-1.9zM685.5 212.7l1.9 1.9l-1.9 1.9l-1.9-1.9zM759 210.3l1.9 1.9l-1.9 1.9l-1.9-1.9zM775 210.9l1.9 1.9l-1.9 1.9l-1.9-1.9zM711.8 216.8l1.9 1.9l-1.9 1.9l-1.9-1.9zM717.5 215.4l1.9 1.9l-1.9 1.9l-1.9-1.9zM723.1 207.6l1.9 1.9l-1.9 1.9l-1.9-1.9zM741.1 215.4l1.9 1.9l-1.9 1.9l-1.9-1.9zM741.1 217.9l1.9 1.9l-1.9 1.9l-1.9-1.9zM754.9 218.5l1.9 1.9l-1.9 1.9l-1.9-1.9zM765.7 217.5l1.9 1.9l-1.9 1.9l-1.9-1.9zM770.3 219.9l1.9 1.9l-1.9 1.9l-1.9-1.9zM751.8 221.2l1.9 1.9l-1.9 1.9l-1.9-1.9zM789.7 217l1.9 1.9l-1.9 1.9l-1.9-1.9zM629.7 219.9l1.9 1.9l-1.9 1.9l-1.9-1.9zM635.9 221.2l1.9 1.9l-1.9 1.9l-1.9-1.9zM610.3 221.6l1.9 1.9l-1.9 1.9l-1.9-1.9zM681 231.8l1.9 1.9l-1.9 1.9l-1.9-1.9zM705 232.8l1.9 1.9l-1.9 1.9l-1.9-1.9zM714.9 230.8l1.9 1.9l-1.9 1.9l-1.9-1.9zM719 231.8l1.9 1.9l-1.9 1.9l-1.9-1.9zM715.3 234.5l1.9 1.9l-1.9 1.9l-1.9-1.9zM741.5 226.1l1.9 1.9l-1.9 1.9l-1.9-1.9zM786.7 226.1l1.9 1.9l-1.9 1.9l-1.9-1.9zM650.3 229.4l1.9 1.9l-1.9 1.9l-1.9-1.9zM636.5 232.8l1.9 1.9l-1.9 1.9l-1.9-1.9zM627.7 235.3l1.9 1.9l-1.9 1.9l-1.9-1.9zM616 239l1.9 1.9l-1.9 1.9l-1.9-1.9zM720 240l1.9 1.9l-1.9 1.9l-1.9-1.9zM791.8 233.9l1.9 1.9l-1.9 1.9l-1.9-1.9zM802.3 204.5l1.9 1.9l-1.9 1.9l-1.9-1.9zM800.7 207.2l1.9 1.9l-1.9 1.9l-1.9-1.9zM809.5 205.2l1.9 1.9l-1.9 1.9l-1.9-1.9zM816.7 203.7l1.9 1.9l-1.9 1.9l-1.9-1.9zM814.6 210.3l1.9 1.9l-1.9 1.9l-1.9-1.9zM820.8 212.7l1.9 1.9l-1.9 1.9l-1.9-1.9zM826.5 203.1l1.9 1.9l-1.9 1.9l-1.9-1.9zM829 202.1l1.9 1.9l-1.9 1.9l-1.9-1.9zM830 204.1l1.9 1.9l-1.9 1.9l-1.9-1.9zM827.9 207.2l1.9 1.9l-1.9 1.9l-1.9-1.9zM828.6 213.4l1.9 1.9l-1.9 1.9l-1.9-1.9zM832.1 212.7l1.9 1.9l-1.9 1.9l-1.9-1.9zM837.2 211.9l1.9 1.9l-1.9 1.9l-1.9-1.9zM839.8 211.3l1.9 1.9l-1.9 1.9l-1.9-1.9zM841.3 204.1l1.9 1.9l-1.9 1.9l-1.9-1.9zM840.3 206.2l1.9 1.9l-1.9 1.9l-1.9-1.9zM849.1 201.7l1.9 1.9l-1.9 1.9l-1.9-1.9zM850.9 202.1l1.9 1.9l-1.9 1.9l-1.9-1.9zM851.5 208.8l1.9 1.9l-1.9 1.9l-1.9-1.9zM797.2 220.5l1.9 1.9l-1.9 1.9l-1.9-1.9zM808.5 219.9l1.9 1.9l-1.9 1.9l-1.9-1.9zM854 221.6l1.9 1.9l-1.9 1.9l-1.9-1.9zM834.1 229.8l1.9 1.9l-1.9 1.9l-1.9-1.9zM861.8 229.4l1.9 1.9l-1.9 1.9l-1.9-1.9zM864.3 230.8l1.9 1.9l-1.9 1.9l-1.9-1.9zM871 231.8l1.9 1.9l-1.9 1.9l-1.9-1.9zM797.8 233.5l1.9 1.9l-1.9 1.9l-1.9-1.9zM807.4 239l1.9 1.9l-1.9 1.9l-1.9-1.9zM819.7 236.9l1.9 1.9l-1.9 1.9l-1.9-1.9zM865.3 241.7l1.9 1.9l-1.9 1.9l-1.9-1.9zM877.2 196.9l1.9 1.9l-1.9 1.9l-1.9-1.9zM881.3 194.9l1.9 1.9l-1.9 1.9l-1.9-1.9zM887.4 190.8l1.9 1.9l-1.9 1.9l-1.9-1.9zM889.1 189.8l1.9 1.9l-1.9 1.9l-1.9-1.9zM892.6 189.8l1.9 1.9l-1.9 1.9l-1.9-1.9zM902.8 180.5l1.9 1.9l-1.9 1.9l-1.9-1.9zM904.9 179.5l1.9 1.9l-1.9 1.9l-1.9-1.9zM907.5 180.5l1.9 1.9l-1.9 1.9l-1.9-1.9zM912.5 188.3l1.9 1.9l-1.9 1.9l-1.9-1.9zM916.2 188.3l1.9 1.9l-1.9 1.9l-1.9-1.9zM917.6 189.2l1.9 1.9l-1.9 1.9l-1.9-1.9zM877.8 204.1l1.9 1.9l-1.9 1.9l-1.9-1.9zM878.6 206.8l1.9 1.9l-1.9 1.9l-1.9-1.9zM880.3 214.4l1.9 1.9l-1.9 1.9l-1.9-1.9zM881.9 214.8l1.9 1.9l-1.9 1.9l-1.9-1.9zM902.4 206.8l1.9 1.9l-1.9 1.9l-1.9-1.9zM909.4 204.7l1.9 1.9l-1.9 1.9l-1.9-1.9zM910.4 205.8l1.9 1.9l-1.9 1.9l-1.9-1.9zM908.4 207.2l1.9 1.9l-1.9 1.9l-1.9-1.9zM907.5 212.7l1.9 1.9l-1.9 1.9l-1.9-1.9zM910.6 213.4l1.9 1.9l-1.9 1.9l-1.9-1.9zM912.5 211.9l1.9 1.9l-1.9 1.9l-1.9-1.9zM915.1 211.7l1.9 1.9l-1.9 1.9l-1.9-1.9zM884.8 225.7l1.9 1.9l-1.9 1.9l-1.9-1.9zM886.4 226.3l1.9 1.9l-1.9 1.9l-1.9-1.9zM888.9 229.2l1.9 1.9l-1.9 1.9l-1.9-1.9zM890.9 230.4l1.9 1.9l-1.9 1.9l-1.9-1.9zM904.5 224l1.9 1.9l-1.9 1.9l-1.9-1.9zM906.9 224.2l1.9 1.9l-1.9 1.9l-1.9-1.9zM906.3 225.7l1.9 1.9l-1.9 1.9l-1.9-1.9zM895.6 236.9l1.9 1.9l-1.9 1.9l-1.9-1.9zM897.7 235.5l1.9 1.9l-1.9 1.9l-1.9-1.9zM896.7 238l1.9 1.9l-1.9 1.9l-1.9-1.9zM924.8 224.6l1.9 1.9l-1.9 1.9l-1.9-1.9zM929.5 222.6l1.9 1.9l-1.9 1.9l-1.9-1.9zM930.5 218.5l1.9 1.9l-1.9 1.9l-1.9-1.9zM939.7 209.7l1.9 1.9l-1.9 1.9l-1.9-1.9zM949 207.8l1.9 1.9l-1.9 1.9l-1.9-1.9zM949.6 216l1.9 1.9l-1.9 1.9l-1.9-1.9zM951 216.4l1.9 1.9l-1.9 1.9l-1.9-1.9zM938.7 233.3l1.9 1.9l-1.9 1.9l-1.9-1.9zM945.3 232.8l1.9 1.9l-1.9 1.9l-1.9-1.9zM952.1 232.8l1.9 1.9l-1.9 1.9l-1.9-1.9zM959.2 202.1l1.9 1.9l-1.9 1.9l-1.9-1.9zM960.7 203.5l1.9 1.9l-1.9 1.9l-1.9-1.9zM968.9 212.7l1.9 1.9l-1.9 1.9l-1.9-1.9zM972.6 232.8l1.9 1.9l-1.9 1.9l-1.9-1.9zM980.8 201.7l1.9 1.9l-1.9 1.9l-1.9-1.9zM979.7 205.8l1.9 1.9l-1.9 1.9l-1.9-1.9zM988.6 200l1.9 1.9l-1.9 1.9l-1.9-1.9zM990 200.6l1.9 1.9l-1.9 1.9l-1.9-1.9zM614.2 240.2l1.9 1.9l-1.9 1.9l-1.9-1.9zM610.7 245.3l1.9 1.9l-1.9 1.9l-1.9-1.9zM618.3 251.4l1.9 1.9l-1.9 1.9l-1.9-1.9zM639.9 246.9l1.9 1.9l-1.9 1.9l-1.9-1.9zM660.8 250.8l1.9 1.9l-1.9 1.9l-1.9-1.9zM676.2 251l1.9 1.9l-1.9 1.9l-1.9-1.9zM694.2 254.5l1.9 1.9l-1.9 1.9l-1.9-1.9zM710 256.2l1.9 1.9l-1.9 1.9l-1.9-1.9zM650.5 261.1l1.9 1.9l-1.9 1.9l-1.9-1.9zM721.9 241.8l1.9 1.9l-1.9 1.9l-1.9-1.9zM739.4 248.8l1.9 1.9l-1.9 1.9l-1.9-1.9zM761.9 241.8l1.9 1.9l-1.9 1.9l-1.9-1.9zM778.9 247.3l1.9 1.9l-1.9 1.9l-1.9-1.9zM758.4 254.9l1.9 1.9l-1.9 1.9l-1.9-1.9zM763.4 252l1.9 1.9l-1.9 1.9l-1.9-1.9zM764.6 256.2l1.9 1.9l-1.9 1.9l-1.9-1.9zM768.7 257.6l1.9 1.9l-1.9 1.9l-1.9-1.9zM773.2 259l1.9 1.9l-1.9 1.9l-1.9-1.9zM765.6 261.1l1.9 1.9l-1.9 1.9l-1.9-1.9zM803.6 254.1l1.9 1.9l-1.9 1.9l-1.9-1.9zM617.7 269.3l1.9 1.9l-1.9 1.9l-1.9-1.9zM623.1 269.9l1.9 1.9l-1.9 1.9l-1.9-1.9zM676.8 269.9l1.9 1.9l-1.9 1.9l-1.9-1.9zM706.9 269.3l1.9 1.9l-1.9 1.9l-1.9-1.9zM721.5 265.2l1.9 1.9l-1.9 1.9l-1.9-1.9zM723.4 268.5l1.9 1.9l-1.9 1.9l-1.9-1.9zM798.8 269.9l1.9 1.9l-1.9 1.9l-1.9-1.9zM787.6 273.4l1.9 1.9l-1.9 1.9l-1.9-1.9zM619.8 276l1.9 1.9l-1.9 1.9l-1.9-1.9zM617.7 278.1l1.9 1.9l-1.9 1.9l-1.9-1.9zM621.4 276l1.9 1.9l-1.9 1.9l-1.9-1.9zM647.1 276l1.9 1.9l-1.9 1.9l-1.9-1.9zM664.5 278.5l1.9 1.9l-1.9 1.9l-1.9-1.9zM680.9 280.6l1.9 1.9l-1.9 1.9l-1.9-1.9zM612.8 286.3l1.9 1.9l-1.9 1.9l-1.9-1.9zM622.4 286.9l1.9 1.9l-1.9 1.9l-1.9-1.9zM643.6 285.3l1.9 1.9l-1.9 1.9l-1.9-1.9zM647.1 287.3l1.9 1.9l-1.9 1.9l-1.9-1.9zM664.9 288.8l1.9 1.9l-1.9 1.9l-1.9-1.9zM676.8 287.9l1.9 1.9l-1.9 1.9l-1.9-1.9zM680.5 287.9l1.9 1.9l-1.9 1.9l-1.9-1.9zM726 284.3l1.9 1.9l-1.9 1.9l-1.9-1.9zM720.5 286.9l1.9 1.9l-1.9 1.9l-1.9-1.9zM721.3 289.8l1.9 1.9l-1.9 1.9l-1.9-1.9zM715.8 292.5l1.9 1.9l-1.9 1.9l-1.9-1.9zM705.5 291.8l1.9 1.9l-1.9 1.9l-1.9-1.9zM756.8 287.7l1.9 1.9l-1.9 1.9l-1.9-1.9zM765 288.8l1.9 1.9l-1.9 1.9l-1.9-1.9zM766.4 288.8l1.9 1.9l-1.9 1.9l-1.9-1.9zM786.5 285.3l1.9 1.9l-1.9 1.9l-1.9-1.9zM791.3 285.3l1.9 1.9l-1.9 1.9l-1.9-1.9zM796.2 285.7l1.9 1.9l-1.9 1.9l-1.9-1.9zM799.5 284.9l1.9 1.9l-1.9 1.9l-1.9-1.9zM797.4 291.8l1.9 1.9l-1.9 1.9l-1.9-1.9zM742 291l1.9 1.9l-1.9 1.9l-1.9-1.9zM694.6 298.6l1.9 1.9l-1.9 1.9l-1.9-1.9zM696.7 296.6l1.9 1.9l-1.9 1.9l-1.9-1.9zM699.4 298l1.9 1.9l-1.9 1.9l-1.9-1.9zM705.5 297.2l1.9 1.9l-1.9 1.9l-1.9-1.9zM710.6 296.6l1.9 1.9l-1.9 1.9l-1.9-1.9zM713.7 298l1.9 1.9l-1.9 1.9l-1.9-1.9zM750.6 297.2l1.9 1.9l-1.9 1.9l-1.9-1.9zM766 296.6l1.9 1.9l-1.9 1.9l-1.9-1.9zM610.7 304.8l1.9 1.9l-1.9 1.9l-1.9-1.9zM667.6 302.7l1.9 1.9l-1.9 1.9l-1.9-1.9zM699.4 303.7l1.9 1.9l-1.9 1.9l-1.9-1.9zM673.7 306.4l1.9 1.9l-1.9 1.9l-1.9-1.9zM677.8 305.8l1.9 1.9l-1.9 1.9l-1.9-1.9zM679.9 305.2l1.9 1.9l-1.9 1.9l-1.9-1.9zM682.9 305.2l1.9 1.9l-1.9 1.9l-1.9-1.9zM757.8 305.8l1.9 1.9l-1.9 1.9l-1.9-1.9zM758.8 307.2l1.9 1.9l-1.9 1.9l-1.9-1.9zM662 308.9l1.9 1.9l-1.9 1.9l-1.9-1.9zM663.5 310.9l1.9 1.9l-1.9 1.9l-1.9-1.9zM670.6 310.3l1.9 1.9l-1.9 1.9l-1.9-1.9zM673.7 308.9l1.9 1.9l-1.9 1.9l-1.9-1.9zM665.5 313.6l1.9 1.9l-1.9 1.9l-1.9-1.9zM661.4 314.4l1.9 1.9l-1.9 1.9l-1.9-1.9zM659.4 315.6l1.9 1.9l-1.9 1.9l-1.9-1.9zM679.9 315.6l1.9 1.9l-1.9 1.9l-1.9-1.9zM788.6 316l1.9 1.9l-1.9 1.9l-1.9-1.9zM728.5 318.7l1.9 1.9l-1.9 1.9l-1.9-1.9zM733.6 321.6l1.9 1.9l-1.9 1.9l-1.9-1.9zM645.6 319.5l1.9 1.9l-1.9 1.9l-1.9-1.9zM646 322.2l1.9 1.9l-1.9 1.9l-1.9-1.9zM633.3 323.2l1.9 1.9l-1.9 1.9l-1.9-1.9zM634.3 325.3l1.9 1.9l-1.9 1.9l-1.9-1.9zM637.4 325.3l1.9 1.9l-1.9 1.9l-1.9-1.9zM656.3 323.2l1.9 1.9l-1.9 1.9l-1.9-1.9zM661.4 322.2l1.9 1.9l-1.9 1.9l-1.9-1.9zM666.5 321.2l1.9 1.9l-1.9 1.9l-1.9-1.9zM672.3 320.8l1.9 1.9l-1.9 1.9l-1.9-1.9zM676.2 320.2l1.9 1.9l-1.9 1.9l-1.9-1.9zM653.8 326.7l1.9 1.9l-1.9 1.9l-1.9-1.9zM646.6 327.3l1.9 1.9l-1.9 1.9l-1.9-1.9zM666.5 327.7l1.9 1.9l-1.9 1.9l-1.9-1.9zM717.8 327.3l1.9 1.9l-1.9 1.9l-1.9-1.9zM717.2 329.4l1.9 1.9l-1.9 1.9l-1.9-1.9zM742.8 329.8l1.9 1.9l-1.9 1.9l-1.9-1.9zM768.1 325.3l1.9 1.9l-1.9 1.9l-1.9-1.9zM769.7 328.4l1.9 1.9l-1.9 1.9l-1.9-1.9zM772.2 329.4l1.9 1.9l-1.9 1.9l-1.9-1.9zM774.2 331.4l1.9 1.9l-1.9 1.9l-1.9-1.9zM775.3 332.9l1.9 1.9l-1.9 1.9l-1.9-1.9zM769.1 332.5l1.9 1.9l-1.9 1.9l-1.9-1.9zM768.5 334.5l1.9 1.9l-1.9 1.9l-1.9-1.9zM787.2 326.7l1.9 1.9l-1.9 1.9l-1.9-1.9zM788.2 328.4l1.9 1.9l-1.9 1.9l-1.9-1.9zM791.3 327.7l1.9 1.9l-1.9 1.9l-1.9-1.9zM794.7 327.7l1.9 1.9l-1.9 1.9l-1.9-1.9zM789.6 331.8l1.9 1.9l-1.9 1.9l-1.9-1.9zM789 334.1l1.9 1.9l-1.9 1.9l-1.9-1.9zM799.3 333.9l1.9 1.9l-1.9 1.9l-1.9-1.9zM662 332l1.9 1.9l-1.9 1.9l-1.9-1.9zM702.8 333.1l1.9 1.9l-1.9 1.9l-1.9-1.9zM676.2 336.2l1.9 1.9l-1.9 1.9l-1.9-1.9zM677.8 336.2l1.9 1.9l-1.9 1.9l-1.9-1.9zM692.2 336.2l1.9 1.9l-1.9 1.9l-1.9-1.9zM762.3 336.2l1.9 1.9l-1.9 1.9l-1.9-1.9zM769.7 336.6l1.9 1.9l-1.9 1.9l-1.9-1.9zM778.3 338.6l1.9 1.9l-1.9 1.9l-1.9-1.9zM789.6 338.6l1.9 1.9l-1.9 1.9l-1.9-1.9zM785.5 340.7l1.9 1.9l-1.9 1.9l-1.9-1.9zM647.1 338l1.9 1.9l-1.9 1.9l-1.9-1.9zM630 343.3l1.9 1.9l-1.9 1.9l-1.9-1.9zM769.1 343.3l1.9 1.9l-1.9 1.9l-1.9-1.9zM780.4 343.3l1.9 1.9l-1.9 1.9l-1.9-1.9zM676.8 347.8l1.9 1.9l-1.9 1.9l-1.9-1.9zM762.3 347.8l1.9 1.9l-1.9 1.9l-1.9-1.9zM627.6 353l1.9 1.9l-1.9 1.9l-1.9-1.9zM635.8 353.6l1.9 1.9l-1.9 1.9l-1.9-1.9zM642.9 355.4l1.9 1.9l-1.9 1.9l-1.9-1.9zM695.3 354l1.9 1.9l-1.9 1.9l-1.9-1.9zM704.5 354.6l1.9 1.9l-1.9 1.9l-1.9-1.9zM711.7 351.5l1.9 1.9l-1.9 1.9l-1.9-1.9zM719.5 351.5l1.9 1.9l-1.9 1.9l-1.9-1.9zM720.9 353l1.9 1.9l-1.9 1.9l-1.9-1.9zM732.6 348.9l1.9 1.9l-1.9 1.9l-1.9-1.9zM733.6 350.9l1.9 1.9l-1.9 1.9l-1.9-1.9zM739.4 350.9l1.9 1.9l-1.9 1.9l-1.9-1.9zM744.5 349.9l1.9 1.9l-1.9 1.9l-1.9-1.9zM745.5 351.9l1.9 1.9l-1.9 1.9l-1.9-1.9zM730.1 356l1.9 1.9l-1.9 1.9l-1.9-1.9zM852.9 246.7l1.9 1.9l-1.9 1.9l-1.9-1.9zM895.4 239.1l1.9 1.9l-1.9 1.9l-1.9-1.9zM896.4 247.3l1.9 1.9l-1.9 1.9l-1.9-1.9zM899.5 247.3l1.9 1.9l-1.9 1.9l-1.9-1.9zM900.5 248.8l1.9 1.9l-1.9 1.9l-1.9-1.9zM903.6 246.3l1.9 1.9l-1.9 1.9l-1.9-1.9zM904.6 247.7l1.9 1.9l-1.9 1.9l-1.9-1.9zM907.7 245.3l1.9 1.9l-1.9 1.9l-1.9-1.9zM908.7 248.8l1.9 1.9l-1.9 1.9l-1.9-1.9zM890.3 251.4l1.9 1.9l-1.9 1.9l-1.9-1.9zM922.7 250.8l1.9 1.9l-1.9 1.9l-1.9-1.9zM928.2 245.3l1.9 1.9l-1.9 1.9l-1.9-1.9zM929.2 249.4l1.9 1.9l-1.9 1.9l-1.9-1.9zM945.2 251.4l1.9 1.9l-1.9 1.9l-1.9-1.9zM947.1 254.1l1.9 1.9l-1.9 1.9l-1.9-1.9zM951.2 250.8l1.9 1.9l-1.9 1.9l-1.9-1.9zM950.8 257l1.9 1.9l-1.9 1.9l-1.9-1.9zM959 255.5l1.9 1.9l-1.9 1.9l-1.9-1.9zM931.9 258.6l1.9 1.9l-1.9 1.9l-1.9-1.9zM815.4 252.9l1.9 1.9l-1.9 1.9l-1.9-1.9zM816 254.5l1.9 1.9l-1.9 1.9l-1.9-1.9zM826.7 253.9l1.9 1.9l-1.9 1.9l-1.9-1.9zM828.7 253.9l1.9 1.9l-1.9 1.9l-1.9-1.9zM842.7 254.5l1.9 1.9l-1.9 1.9l-1.9-1.9zM844.1 253.5l1.9 1.9l-1.9 1.9l-1.9-1.9zM869.1 255.1l1.9 1.9l-1.9 1.9l-1.9-1.9zM870.8 257.6l1.9 1.9l-1.9 1.9l-1.9-1.9zM871.8 258.6l1.9 1.9l-1.9 1.9l-1.9-1.9zM890.3 260.7l1.9 1.9l-1.9 1.9l-1.9-1.9zM828.3 259.6l1.9 1.9l-1.9 1.9l-1.9-1.9zM829.3 262.3l1.9 1.9l-1.9 1.9l-1.9-1.9zM830.8 263.7l1.9 1.9l-1.9 1.9l-1.9-1.9zM832.2 265.2l1.9 1.9l-1.9 1.9l-1.9-1.9zM846.2 261.7l1.9 1.9l-1.9 1.9l-1.9-1.9zM906.7 265.8l1.9 1.9l-1.9 1.9l-1.9-1.9zM911.8 267.4l1.9 1.9l-1.9 1.9l-1.9-1.9zM919 265.8l1.9 1.9l-1.9 1.9l-1.9-1.9zM813.7 270.5l1.9 1.9l-1.9 1.9l-1.9-1.9zM814.4 274.6l1.9 1.9l-1.9 1.9l-1.9-1.9zM832.2 270.9l1.9 1.9l-1.9 1.9l-1.9-1.9zM856 275.6l1.9 1.9l-1.9 1.9l-1.9-1.9zM873.8 273l1.9 1.9l-1.9 1.9l-1.9-1.9zM874.9 274.6l1.9 1.9l-1.9 1.9l-1.9-1.9zM875.9 271.9l1.9 1.9l-1.9 1.9l-1.9-1.9zM877.9 271.9l1.9 1.9l-1.9 1.9l-1.9-1.9zM881.6 271.5l1.9 1.9l-1.9 1.9l-1.9-1.9zM882.7 272.6l1.9 1.9l-1.9 1.9l-1.9-1.9zM889.8 270.9l1.9 1.9l-1.9 1.9l-1.9-1.9zM893.3 270.3l1.9 1.9l-1.9 1.9l-1.9-1.9zM943 272.6l1.9 1.9l-1.9 1.9l-1.9-1.9zM954.3 271.3l1.9 1.9l-1.9 1.9l-1.9-1.9zM955.3 273l1.9 1.9l-1.9 1.9l-1.9-1.9zM976.4 270.5l1.9 1.9l-1.9 1.9l-1.9-1.9zM833.8 280.8l1.9 1.9l-1.9 1.9l-1.9-1.9zM842.1 279.1l1.9 1.9l-1.9 1.9l-1.9-1.9zM844.7 278.7l1.9 1.9l-1.9 1.9l-1.9-1.9zM844.7 281.8l1.9 1.9l-1.9 1.9l-1.9-1.9zM873.8 279.7l1.9 1.9l-1.9 1.9l-1.9-1.9zM869.7 283.6l1.9 1.9l-1.9 1.9l-1.9-1.9zM865.6 285.7l1.9 1.9l-1.9 1.9l-1.9-1.9zM816.4 284.3l1.9 1.9l-1.9 1.9l-1.9-1.9zM901.5 283.6l1.9 1.9l-1.9 1.9l-1.9-1.9zM916.5 279.1l1.9 1.9l-1.9 1.9l-1.9-1.9zM934.4 278.1l1.9 1.9l-1.9 1.9l-1.9-1.9zM934.8 281.6l1.9 1.9l-1.9 1.9l-1.9-1.9zM956.9 282.8l1.9 1.9l-1.9 1.9l-1.9-1.9zM965.7 280.8l1.9 1.9l-1.9 1.9l-1.9-1.9zM861.1 289l1.9 1.9l-1.9 1.9l-1.9-1.9zM870.8 287.9l1.9 1.9l-1.9 1.9l-1.9-1.9zM874.9 286.9l1.9 1.9l-1.9 1.9l-1.9-1.9zM876.9 286.9l1.9 1.9l-1.9 1.9l-1.9-1.9zM913.4 286.9l1.9 1.9l-1.9 1.9l-1.9-1.9zM916.3 287.9l1.9 1.9l-1.9 1.9l-1.9-1.9zM915.5 291l1.9 1.9l-1.9 1.9l-1.9-1.9zM921 290.4l1.9 1.9l-1.9 1.9l-1.9-1.9zM932.9 285.7l1.9 1.9l-1.9 1.9l-1.9-1.9zM931.9 288.4l1.9 1.9l-1.9 1.9l-1.9-1.9zM934.4 291.8l1.9 1.9l-1.9 1.9l-1.9-1.9zM935.4 293.9l1.9 1.9l-1.9 1.9l-1.9-1.9zM945 289.4l1.9 1.9l-1.9 1.9l-1.9-1.9zM948.7 291.8l1.9 1.9l-1.9 1.9l-1.9-1.9zM950.2 292.5l1.9 1.9l-1.9 1.9l-1.9-1.9zM952.8 294.9l1.9 1.9l-1.9 1.9l-1.9-1.9zM957.5 291.8l1.9 1.9l-1.9 1.9l-1.9-1.9zM963.5 291l1.9 1.9l-1.9 1.9l-1.9-1.9zM968.6 289.8l1.9 1.9l-1.9 1.9l-1.9-1.9zM882.1 293.9l1.9 1.9l-1.9 1.9l-1.9-1.9zM897.8 297.2l1.9 1.9l-1.9 1.9l-1.9-1.9zM819.9 299.2l1.9 1.9l-1.9 1.9l-1.9-1.9zM828.3 300.3l1.9 1.9l-1.9 1.9l-1.9-1.9zM831.8 301.7l1.9 1.9l-1.9 1.9l-1.9-1.9zM833.8 300.7l1.9 1.9l-1.9 1.9l-1.9-1.9zM935.4 297.6l1.9 1.9l-1.9 1.9l-1.9-1.9zM937 300.3l1.9 1.9l-1.9 1.9l-1.9-1.9zM931.3 303.3l1.9 1.9l-1.9 1.9l-1.9-1.9zM944 303.1l1.9 1.9l-1.9 1.9l-1.9-1.9zM955.9 299.6l1.9 1.9l-1.9 1.9l-1.9-1.9zM965.7 297.6l1.9 1.9l-1.9 1.9l-1.9-1.9zM861.5 304.2l1.9 1.9l-1.9 1.9l-1.9-1.9zM821.5 305.4l1.9 1.9l-1.9 1.9l-1.9-1.9zM823 307.8l1.9 1.9l-1.9 1.9l-1.9-1.9zM824.2 309.5l1.9 1.9l-1.9 1.9l-1.9-1.9zM827.7 310.9l1.9 1.9l-1.9 1.9l-1.9-1.9zM810.7 308.9l1.9 1.9l-1.9 1.9l-1.9-1.9zM808.6 313l1.9 1.9l-1.9 1.9l-1.9-1.9zM809.2 314.4l1.9 1.9l-1.9 1.9l-1.9-1.9zM823.6 315.6l1.9 1.9l-1.9 1.9l-1.9-1.9zM835.9 313.6l1.9 1.9l-1.9 1.9l-1.9-1.9zM836.9 315l1.9 1.9l-1.9 1.9l-1.9-1.9zM848.6 316l1.9 1.9l-1.9 1.9l-1.9-1.9zM922.5 307.8l1.9 1.9l-1.9 1.9l-1.9-1.9zM833.8 321.8l1.9 1.9l-1.9 1.9l-1.9-1.9zM835.9 320.8l1.9 1.9l-1.9 1.9l-1.9-1.9zM837.9 321.2l1.9 1.9l-1.9 1.9l-1.9-1.9zM836.5 322.6l1.9 1.9l-1.9 1.9l-1.9-1.9zM817.4 323.8l1.9 1.9l-1.9 1.9l-1.9-1.9zM819.1 325.9l1.9 1.9l-1.9 1.9l-1.9-1.9zM813.7 326.9l1.9 1.9l-1.9 1.9l-1.9-1.9zM827.3 332l1.9 1.9l-1.9 1.9l-1.9-1.9zM840 333.1l1.9 1.9l-1.9 1.9l-1.9-1.9zM803.1 340.7l1.9 1.9l-1.9 1.9l-1.9-1.9zM358.9 382.6l1.9 1.9l-1.9 1.9l-1.9-1.9zM366.3 382.6l1.9 1.9l-1.9 1.9l-1.9-1.9zM431.9 382.2l1.9 1.9l-1.9 1.9l-1.9-1.9zM436.4 382.6l1.9 1.9l-1.9 1.9l-1.9-1.9zM472.7 387.3l1.9 1.9l-1.9 1.9l-1.9-1.9zM524.6 384.3l1.9 1.9l-1.9 1.9l-1.9-1.9zM526.1 385.7l1.9 1.9l-1.9 1.9l-1.9-1.9zM532.2 386.7l1.9 1.9l-1.9 1.9l-1.9-1.9zM384.5 389.4l1.9 1.9l-1.9 1.9l-1.9-1.9zM391.9 390l1.9 1.9l-1.9 1.9l-1.9-1.9zM352.3 396.2l1.9 1.9l-1.9 1.9l-1.9-1.9zM376.9 395.1l1.9 1.9l-1.9 1.9l-1.9-1.9zM384.1 394.5l1.9 1.9l-1.9 1.9l-1.9-1.9zM428.8 398l1.9 1.9l-1.9 1.9l-1.9-1.9zM474.8 394.5l1.9 1.9l-1.9 1.9l-1.9-1.9zM491.8 394.5l1.9 1.9l-1.9 1.9l-1.9-1.9zM504.7 394.5l1.9 1.9l-1.9 1.9l-1.9-1.9zM468.2 400.7l1.9 1.9l-1.9 1.9l-1.9-1.9zM473.8 399.6l1.9 1.9l-1.9 1.9l-1.9-1.9zM476.8 399.6l1.9 1.9l-1.9 1.9l-1.9-1.9zM480.1 396.6l1.9 1.9l-1.9 1.9l-1.9-1.9zM482.2 400.3l1.9 1.9l-1.9 1.9l-1.9-1.9zM482.6 403.1l1.9 1.9l-1.9 1.9l-1.9-1.9zM527.7 400.7l1.9 1.9l-1.9 1.9l-1.9-1.9zM340.6 403.1l1.9 1.9l-1.9 1.9l-1.9-1.9zM360.5 403.1l1.9 1.9l-1.9 1.9l-1.9-1.9zM428.6 403.1l1.9 1.9l-1.9 1.9l-1.9-1.9zM387.6 408.5l1.9 1.9l-1.9 1.9l-1.9-1.9zM394.8 407.4l1.9 1.9l-1.9 1.9l-1.9-1.9zM373.5 410.9l1.9 1.9l-1.9 1.9l-1.9-1.9zM429.9 408.5l1.9 1.9l-1.9 1.9l-1.9-1.9zM437.1 409.3l1.9 1.9l-1.9 1.9l-1.9-1.9zM454.3 408.5l1.9 1.9l-1.9 1.9l-1.9-1.9zM473.8 405.8l1.9 1.9l-1.9 1.9l-1.9-1.9zM476.8 405.8l1.9 1.9l-1.9 1.9l-1.9-1.9zM480.1 408.5l1.9 1.9l-1.9 1.9l-1.9-1.9zM471.9 410.5l1.9 1.9l-1.9 1.9l-1.9-1.9zM487.1 407.4l1.9 1.9l-1.9 1.9l-1.9-1.9zM471.9 416l1.9 1.9l-1.9 1.9l-1.9-1.9zM478.1 415l1.9 1.9l-1.9 1.9l-1.9-1.9zM487.1 415.4l1.9 1.9l-1.9 1.9l-1.9-1.9zM491.2 414.6l1.9 1.9l-1.9 1.9l-1.9-1.9zM340 423.2l1.9 1.9l-1.9 1.9l-1.9-1.9zM369.2 424.3l1.9 1.9l-1.9 1.9l-1.9-1.9zM357.9 427.7l1.9 1.9l-1.9 1.9l-1.9-1.9zM404.6 427.9l1.9 1.9l-1.9 1.9l-1.9-1.9zM405.7 429l1.9 1.9l-1.9 1.9l-1.9-1.9zM428.6 425.3l1.9 1.9l-1.9 1.9l-1.9-1.9zM430.3 425.7l1.9 1.9l-1.9 1.9l-1.9-1.9zM439.5 424.7l1.9 1.9l-1.9 1.9l-1.9-1.9zM454.9 419.1l1.9 1.9l-1.9 1.9l-1.9-1.9zM504.7 424.3l1.9 1.9l-1.9 1.9l-1.9-1.9zM508.2 423.6l1.9 1.9l-1.9 1.9l-1.9-1.9zM520.9 422.8l1.9 1.9l-1.9 1.9l-1.9-1.9zM527.7 424.7l1.9 1.9l-1.9 1.9l-1.9-1.9zM531.2 424.3l1.9 1.9l-1.9 1.9l-1.9-1.9zM531.8 430.4l1.9 1.9l-1.9 1.9l-1.9-1.9zM537.6 431l1.9 1.9l-1.9 1.9l-1.9-1.9zM487.7 429.8l1.9 1.9l-1.9 1.9l-1.9-1.9zM376.3 433.1l1.9 1.9l-1.9 1.9l-1.9-1.9zM391.9 439l1.9 1.9l-1.9 1.9l-1.9-1.9zM404.2 439.2l1.9 1.9l-1.9 1.9l-1.9-1.9zM406.7 438.2l1.9 1.9l-1.9 1.9l-1.9-1.9zM420 436.6l1.9 1.9l-1.9 1.9l-1.9-1.9zM426.6 438.2l1.9 1.9l-1.9 1.9l-1.9-1.9zM440.1 434.9l1.9 1.9l-1.9 1.9l-1.9-1.9zM455.9 433.5l1.9 1.9l-1.9 1.9l-1.9-1.9zM463.5 436.6l1.9 1.9l-1.9 1.9l-1.9-1.9zM470.9 435.5l1.9 1.9l-1.9 1.9l-1.9-1.9zM479.1 434.1l1.9 1.9l-1.9 1.9l-1.9-1.9zM509.7 440.7l1.9 1.9l-1.9 1.9l-1.9-1.9zM518.5 441.7l1.9 1.9l-1.9 1.9l-1.9-1.9zM529.8 439.2l1.9 1.9l-1.9 1.9l-1.9-1.9zM366.7 445.8l1.9 1.9l-1.9 1.9l-1.9-1.9zM405.1 445.4l1.9 1.9l-1.9 1.9l-1.9-1.9zM419 446.8l1.9 1.9l-1.9 1.9l-1.9-1.9zM448.7 447.8l1.9 1.9l-1.9 1.9l-1.9-1.9zM371.8 451.3l1.9 1.9l-1.9 1.9l-1.9-1.9zM379.6 449.9l1.9 1.9l-1.9 1.9l-1.9-1.9zM380.6 451.3l1.9 1.9l-1.9 1.9l-1.9-1.9zM434.4 453.6l1.9 1.9l-1.9 1.9l-1.9-1.9zM443.6 454l1.9 1.9l-1.9 1.9l-1.9-1.9zM444 456l1.9 1.9l-1.9 1.9l-1.9-1.9zM467.2 450.3l1.9 1.9l-1.9 1.9l-1.9-1.9zM467.6 452.6l1.9 1.9l-1.9 1.9l-1.9-1.9zM473.4 453.6l1.9 1.9l-1.9 1.9l-1.9-1.9zM482 454.4l1.9 1.9l-1.9 1.9l-1.9-1.9zM491.8 453.6l1.9 1.9l-1.9 1.9l-1.9-1.9zM511.9 453l1.9 1.9l-1.9 1.9l-1.9-1.9zM369.8 459.5l1.9 1.9l-1.9 1.9l-1.9-1.9zM407.3 458.5l1.9 1.9l-1.9 1.9l-1.9-1.9zM445.7 462.6l1.9 1.9l-1.9 1.9l-1.9-1.9zM465.6 461.6l1.9 1.9l-1.9 1.9l-1.9-1.9zM531.2 460.2l1.9 1.9l-1.9 1.9l-1.9-1.9zM494.3 464.7l1.9 1.9l-1.9 1.9l-1.9-1.9zM356.4 465.9l1.9 1.9l-1.9 1.9l-1.9-1.9zM359.5 467.3l1.9 1.9l-1.9 1.9l-1.9-1.9zM364.6 470.8l1.9 1.9l-1.9 1.9l-1.9-1.9zM366.3 472.5l1.9 1.9l-1.9 1.9l-1.9-1.9zM368.7 473.5l1.9 1.9l-1.9 1.9l-1.9-1.9zM370.4 474.9l1.9 1.9l-1.9 1.9l-1.9-1.9zM464.1 466.7l1.9 1.9l-1.9 1.9l-1.9-1.9zM466.2 466.7l1.9 1.9l-1.9 1.9l-1.9-1.9zM481.6 467.3l1.9 1.9l-1.9 1.9l-1.9-1.9zM494.5 469.4l1.9 1.9l-1.9 1.9l-1.9-1.9zM510.3 467.3l1.9 1.9l-1.9 1.9l-1.9-1.9zM519.5 468.4l1.9 1.9l-1.9 1.9l-1.9-1.9zM521.6 469.8l1.9 1.9l-1.9 1.9l-1.9-1.9zM532.8 469.4l1.9 1.9l-1.9 1.9l-1.9-1.9zM537.6 469.4l1.9 1.9l-1.9 1.9l-1.9-1.9zM342.7 471l1.9 1.9l-1.9 1.9l-1.9-1.9zM344.5 476.2l1.9 1.9l-1.9 1.9l-1.9-1.9zM349.3 478.6l1.9 1.9l-1.9 1.9l-1.9-1.9zM408.7 471.8l1.9 1.9l-1.9 1.9l-1.9-1.9zM413.3 472l1.9 1.9l-1.9 1.9l-1.9-1.9zM415.9 472.9l1.9 1.9l-1.9 1.9l-1.9-1.9zM441.6 474.5l1.9 1.9l-1.9 1.9l-1.9-1.9zM440.9 476.6l1.9 1.9l-1.9 1.9l-1.9-1.9zM429.3 477l1.9 1.9l-1.9 1.9l-1.9-1.9zM431.3 477l1.9 1.9l-1.9 1.9l-1.9-1.9zM459 474.5l1.9 1.9l-1.9 1.9l-1.9-1.9zM466.2 473.5l1.9 1.9l-1.9 1.9l-1.9-1.9zM482 472.5l1.9 1.9l-1.9 1.9l-1.9-1.9zM517.1 473.5l1.9 1.9l-1.9 1.9l-1.9-1.9zM520.1 473.5l1.9 1.9l-1.9 1.9l-1.9-1.9zM533.5 472.9l1.9 1.9l-1.9 1.9l-1.9-1.9zM409.4 478.6l1.9 1.9l-1.9 1.9l-1.9-1.9zM410.8 479.2l1.9 1.9l-1.9 1.9l-1.9-1.9zM359.5 481.1l1.9 1.9l-1.9 1.9l-1.9-1.9zM362 484.8l1.9 1.9l-1.9 1.9l-1.9-1.9zM452.2 480l1.9 1.9l-1.9 1.9l-1.9-1.9zM457.6 481.1l1.9 1.9l-1.9 1.9l-1.9-1.9zM466.8 480l1.9 1.9l-1.9 1.9l-1.9-1.9zM467.2 483.3l1.9 1.9l-1.9 1.9l-1.9-1.9zM483 478.2l1.9 1.9l-1.9 1.9l-1.9-1.9zM496.3 480l1.9 1.9l-1.9 1.9l-1.9-1.9zM505.2 478l1.9 1.9l-1.9 1.9l-1.9-1.9zM508.8 477l1.9 1.9l-1.9 1.9l-1.9-1.9zM515.8 477.2l1.9 1.9l-1.9 1.9l-1.9-1.9zM537.6 482.7l1.9 1.9l-1.9 1.9l-1.9-1.9zM350.3 485.2l1.9 1.9l-1.9 1.9l-1.9-1.9zM352.3 486.2l1.9 1.9l-1.9 1.9l-1.9-1.9zM355.4 489.9l1.9 1.9l-1.9 1.9l-1.9-1.9zM343.1 489.9l1.9 1.9l-1.9 1.9l-1.9-1.9zM383.5 484.8l1.9 1.9l-1.9 1.9l-1.9-1.9zM384.1 486.8l1.9 1.9l-1.9 1.9l-1.9-1.9zM408.3 484.4l1.9 1.9l-1.9 1.9l-1.9-1.9zM427.2 484.2l1.9 1.9l-1.9 1.9l-1.9-1.9zM446.7 483.7l1.9 1.9l-1.9 1.9l-1.9-1.9zM444.6 488.3l1.9 1.9l-1.9 1.9l-1.9-1.9zM483.2 483.7l1.9 1.9l-1.9 1.9l-1.9-1.9zM506.2 482.7l1.9 1.9l-1.9 1.9l-1.9-1.9zM506.6 487.2l1.9 1.9l-1.9 1.9l-1.9-1.9zM515.8 482.3l1.9 1.9l-1.9 1.9l-1.9-1.9zM515.8 485.8l1.9 1.9l-1.9 1.9l-1.9-1.9zM368.3 493l1.9 1.9l-1.9 1.9l-1.9-1.9zM369.4 496l1.9 1.9l-1.9 1.9l-1.9-1.9zM359.5 495.6l1.9 1.9l-1.9 1.9l-1.9-1.9zM392.7 492.6l1.9 1.9l-1.9 1.9l-1.9-1.9zM407.3 494l1.9 1.9l-1.9 1.9l-1.9-1.9zM430.3 496.5l1.9 1.9l-1.9 1.9l-1.9-1.9zM434.4 496.5l1.9 1.9l-1.9 1.9l-1.9-1.9zM467.6 490.5l1.9 1.9l-1.9 1.9l-1.9-1.9zM500.6 490.5l1.9 1.9l-1.9 1.9l-1.9-1.9zM566.4 382.6l1.9 1.9l-1.9 1.9l-1.9-1.9zM598.2 385.9l1.9 1.9l-1.9 1.9l-1.9-1.9zM614 381.8l1.9 1.9l-1.9 1.9l-1.9-1.9zM616 380.2l1.9 1.9l-1.9 1.9l-1.9-1.9zM625.3 380.6l1.9 1.9l-1.9 1.9l-1.9-1.9zM627.3 379.1l1.9 1.9l-1.9 1.9l-1.9-1.9zM649.9 378.1l1.9 1.9l-1.9 1.9l-1.9-1.9zM666.3 379.1l1.9 1.9l-1.9 1.9l-1.9-1.9zM667.9 385.9l1.9 1.9l-1.9 1.9l-1.9-1.9zM675.5 381.2l1.9 1.9l-1.9 1.9l-1.9-1.9zM676.5 383.8l1.9 1.9l-1.9 1.9l-1.9-1.9zM681.7 382.6l1.9 1.9l-1.9 1.9l-1.9-1.9zM682.3 379.1l1.9 1.9l-1.9 1.9l-1.9-1.9zM689.9 378.1l1.9 1.9l-1.9 1.9l-1.9-1.9zM712.4 378.1l1.9 1.9l-1.9 1.9l-1.9-1.9zM716.5 384.3l1.9 1.9l-1.9 1.9l-1.9-1.9zM712.4 386.7l1.9 1.9l-1.9 1.9l-1.9-1.9zM723.7 381.8l1.9 1.9l-1.9 1.9l-1.9-1.9zM725.8 385.3l1.9 1.9l-1.9 1.9l-1.9-1.9zM727.8 387.3l1.9 1.9l-1.9 1.9l-1.9-1.9zM729.3 390l1.9 1.9l-1.9 1.9l-1.9-1.9zM729.9 392.5l1.9 1.9l-1.9 1.9l-1.9-1.9zM730.9 398.6l1.9 1.9l-1.9 1.9l-1.9-1.9zM728.8 404.4l1.9 1.9l-1.9 1.9l-1.9-1.9zM565.4 394.5l1.9 1.9l-1.9 1.9l-1.9-1.9zM594.5 392.9l1.9 1.9l-1.9 1.9l-1.9-1.9zM597.6 391.4l1.9 1.9l-1.9 1.9l-1.9-1.9zM623.2 393.5l1.9 1.9l-1.9 1.9l-1.9-1.9zM673.1 392l1.9 1.9l-1.9 1.9l-1.9-1.9zM680.6 391.4l1.9 1.9l-1.9 1.9l-1.9-1.9zM682.3 392.9l1.9 1.9l-1.9 1.9l-1.9-1.9zM684.7 394.5l1.9 1.9l-1.9 1.9l-1.9-1.9zM700.1 391.4l1.9 1.9l-1.9 1.9l-1.9-1.9zM653.6 397l1.9 1.9l-1.9 1.9l-1.9-1.9zM647.8 399.6l1.9 1.9l-1.9 1.9l-1.9-1.9zM667.3 396.2l1.9 1.9l-1.9 1.9l-1.9-1.9zM672.4 399.6l1.9 1.9l-1.9 1.9l-1.9-1.9zM551 400.7l1.9 1.9l-1.9 1.9l-1.9-1.9zM556.5 401.7l1.9 1.9l-1.9 1.9l-1.9-1.9zM556.1 404.8l1.9 1.9l-1.9 1.9l-1.9-1.9zM565.4 400.7l1.9 1.9l-1.9 1.9l-1.9-1.9zM574 398.6l1.9 1.9l-1.9 1.9l-1.9-1.9zM574 400.7l1.9 1.9l-1.9 1.9l-1.9-1.9zM581.8 397l1.9 1.9l-1.9 1.9l-1.9-1.9zM581.2 401.3l1.9 1.9l-1.9 1.9l-1.9-1.9zM596.5 401.7l1.9 1.9l-1.9 1.9l-1.9-1.9zM598.6 403.7l1.9 1.9l-1.9 1.9l-1.9-1.9zM604.7 400.7l1.9 1.9l-1.9 1.9l-1.9-1.9zM604.1 403.7l1.9 1.9l-1.9 1.9l-1.9-1.9zM623.8 401.1l1.9 1.9l-1.9 1.9l-1.9-1.9zM636.9 404.4l1.9 1.9l-1.9 1.9l-1.9-1.9zM648.8 403.1l1.9 1.9l-1.9 1.9l-1.9-1.9zM651.9 402.7l1.9 1.9l-1.9 1.9l-1.9-1.9zM652.9 405.8l1.9 1.9l-1.9 1.9l-1.9-1.9zM653.6 407.2l1.9 1.9l-1.9 1.9l-1.9-1.9zM666.3 401.1l1.9 1.9l-1.9 1.9l-1.9-1.9zM666.3 405.2l1.9 1.9l-1.9 1.9l-1.9-1.9zM672 404.8l1.9 1.9l-1.9 1.9l-1.9-1.9zM676.5 405.2l1.9 1.9l-1.9 1.9l-1.9-1.9zM679 405.8l1.9 1.9l-1.9 1.9l-1.9-1.9zM698.1 408.9l1.9 1.9l-1.9 1.9l-1.9-1.9zM699.1 410.5l1.9 1.9l-1.9 1.9l-1.9-1.9zM697.1 412.6l1.9 1.9l-1.9 1.9l-1.9-1.9zM707.9 414.6l1.9 1.9l-1.9 1.9l-1.9-1.9zM560.6 414l1.9 1.9l-1.9 1.9l-1.9-1.9zM564.7 414l1.9 1.9l-1.9 1.9l-1.9-1.9zM572.9 414l1.9 1.9l-1.9 1.9l-1.9-1.9zM575 413.4l1.9 1.9l-1.9 1.9l-1.9-1.9zM581.2 413.4l1.9 1.9l-1.9 1.9l-1.9-1.9zM597.6 409.9l1.9 1.9l-1.9 1.9l-1.9-1.9zM599 411.9l1.9 1.9l-1.9 1.9l-1.9-1.9zM641.3 408.9l1.9 1.9l-1.9 1.9l-1.9-1.9zM643.3 409.3l1.9 1.9l-1.9 1.9l-1.9-1.9zM661.2 414.6l1.9 1.9l-1.9 1.9l-1.9-1.9zM638.6 416.7l1.9 1.9l-1.9 1.9l-1.9-1.9zM621.6 416l1.9 1.9l-1.9 1.9l-1.9-1.9zM623.2 417.1l1.9 1.9l-1.9 1.9l-1.9-1.9zM651.5 417.5l1.9 1.9l-1.9 1.9l-1.9-1.9zM654.6 420.8l1.9 1.9l-1.9 1.9l-1.9-1.9zM676.5 417.5l1.9 1.9l-1.9 1.9l-1.9-1.9zM674.5 418.7l1.9 1.9l-1.9 1.9l-1.9-1.9zM670 421.2l1.9 1.9l-1.9 1.9l-1.9-1.9zM664.2 420.8l1.9 1.9l-1.9 1.9l-1.9-1.9zM663.2 422.2l1.9 1.9l-1.9 1.9l-1.9-1.9zM692.5 420.8l1.9 1.9l-1.9 1.9l-1.9-1.9zM695 426.7l1.9 1.9l-1.9 1.9l-1.9-1.9zM699.7 432.5l1.9 1.9l-1.9 1.9l-1.9-1.9zM553.9 421.2l1.9 1.9l-1.9 1.9l-1.9-1.9zM564.7 421.2l1.9 1.9l-1.9 1.9l-1.9-1.9zM599 418.1l1.9 1.9l-1.9 1.9l-1.9-1.9zM599.6 421.8l1.9 1.9l-1.9 1.9l-1.9-1.9zM605.8 425.3l1.9 1.9l-1.9 1.9l-1.9-1.9zM635.5 425.7l1.9 1.9l-1.9 1.9l-1.9-1.9zM634.9 428.4l1.9 1.9l-1.9 1.9l-1.9-1.9zM659.5 427.3l1.9 1.9l-1.9 1.9l-1.9-1.9zM661.6 427.9l1.9 1.9l-1.9 1.9l-1.9-1.9zM663.6 424.9l1.9 1.9l-1.9 1.9l-1.9-1.9zM668.3 427.3l1.9 1.9l-1.9 1.9l-1.9-1.9zM664.2 431.8l1.9 1.9l-1.9 1.9l-1.9-1.9zM681.1 432.5l1.9 1.9l-1.9 1.9l-1.9-1.9zM683.7 432.5l1.9 1.9l-1.9 1.9l-1.9-1.9zM549.4 430l1.9 1.9l-1.9 1.9l-1.9-1.9zM560.6 429.8l1.9 1.9l-1.9 1.9l-1.9-1.9zM574.6 429.8l1.9 1.9l-1.9 1.9l-1.9-1.9zM591 427.9l1.9 1.9l-1.9 1.9l-1.9-1.9zM592 431.8l1.9 1.9l-1.9 1.9l-1.9-1.9zM599.6 430.4l1.9 1.9l-1.9 1.9l-1.9-1.9zM602.3 430.4l1.9 1.9l-1.9 1.9l-1.9-1.9zM623.2 431l1.9 1.9l-1.9 1.9l-1.9-1.9zM623.6 433.1l1.9 1.9l-1.9 1.9l-1.9-1.9zM624.2 436.6l1.9 1.9l-1.9 1.9l-1.9-1.9zM637.6 435.5l1.9 1.9l-1.9 1.9l-1.9-1.9zM638.6 437.6l1.9 1.9l-1.9 1.9l-1.9-1.9zM646.8 433.5l1.9 1.9l-1.9 1.9l-1.9-1.9zM645.4 435.1l1.9 1.9l-1.9 1.9l-1.9-1.9zM651.9 434.5l1.9 1.9l-1.9 1.9l-1.9-1.9zM664.2 437.6l1.9 1.9l-1.9 1.9l-1.9-1.9zM663.8 439.2l1.9 1.9l-1.9 1.9l-1.9-1.9zM679 438.2l1.9 1.9l-1.9 1.9l-1.9-1.9zM678 440.3l1.9 1.9l-1.9 1.9l-1.9-1.9zM544.2 434.5l1.9 1.9l-1.9 1.9l-1.9-1.9zM542.2 436.6l1.9 1.9l-1.9 1.9l-1.9-1.9zM540.7 437.6l1.9 1.9l-1.9 1.9l-1.9-1.9zM588.7 438l1.9 1.9l-1.9 1.9l-1.9-1.9zM592.4 438.6l1.9 1.9l-1.9 1.9l-1.9-1.9zM599.6 439.6l1.9 1.9l-1.9 1.9l-1.9-1.9zM601.7 439.6l1.9 1.9l-1.9 1.9l-1.9-1.9zM609.9 437.6l1.9 1.9l-1.9 1.9l-1.9-1.9zM611.3 438.2l1.9 1.9l-1.9 1.9l-1.9-1.9zM618.1 439l1.9 1.9l-1.9 1.9l-1.9-1.9zM645.8 442.7l1.9 1.9l-1.9 1.9l-1.9-1.9zM644.3 444.2l1.9 1.9l-1.9 1.9l-1.9-1.9zM653.6 448.9l1.9 1.9l-1.9 1.9l-1.9-1.9zM674.5 445.8l1.9 1.9l-1.9 1.9l-1.9-1.9zM679 448.5l1.9 1.9l-1.9 1.9l-1.9-1.9zM664.2 448.5l1.9 1.9l-1.9 1.9l-1.9-1.9zM666.3 448.9l1.9 1.9l-1.9 1.9l-1.9-1.9zM667.9 449.9l1.9 1.9l-1.9 1.9l-1.9-1.9zM662.6 453l1.9 1.9l-1.9 1.9l-1.9-1.9zM672 451.5l1.9 1.9l-1.9 1.9l-1.9-1.9zM677.6 453l1.9 1.9l-1.9 1.9l-1.9-1.9zM681.1 456l1.9 1.9l-1.9 1.9l-1.9-1.9zM667.9 455.6l1.9 1.9l-1.9 1.9l-1.9-1.9zM600.2 448.9l1.9 1.9l-1.9 1.9l-1.9-1.9zM603.1 448.9l1.9 1.9l-1.9 1.9l-1.9-1.9zM607.8 447.2l1.9 1.9l-1.9 1.9l-1.9-1.9zM596.1 453l1.9 1.9l-1.9 1.9l-1.9-1.9zM614.6 455.6l1.9 1.9l-1.9 1.9l-1.9-1.9zM615.6 457.1l1.9 1.9l-1.9 1.9l-1.9-1.9zM648.4 458.1l1.9 1.9l-1.9 1.9l-1.9-1.9zM558.6 457.7l1.9 1.9l-1.9 1.9l-1.9-1.9zM546.9 460.2l1.9 1.9l-1.9 1.9l-1.9-1.9zM549.4 460.2l1.9 1.9l-1.9 1.9l-1.9-1.9zM549.8 463.2l1.9 1.9l-1.9 1.9l-1.9-1.9zM547.7 465.3l1.9 1.9l-1.9 1.9l-1.9-1.9zM600.2 461.8l1.9 1.9l-1.9 1.9l-1.9-1.9zM610.3 462.6l1.9 1.9l-1.9 1.9l-1.9-1.9zM616 461.2l1.9 1.9l-1.9 1.9l-1.9-1.9zM619.1 461.8l1.9 1.9l-1.9 1.9l-1.9-1.9zM617.7 463.8l1.9 1.9l-1.9 1.9l-1.9-1.9zM616.6 466.3l1.9 1.9l-1.9 1.9l-1.9-1.9zM663.2 465.9l1.9 1.9l-1.9 1.9l-1.9-1.9zM648.8 467.3l1.9 1.9l-1.9 1.9l-1.9-1.9zM643.7 468.4l1.9 1.9l-1.9 1.9l-1.9-1.9zM634.5 469.4l1.9 1.9l-1.9 1.9l-1.9-1.9zM568.8 469.4l1.9 1.9l-1.9 1.9l-1.9-1.9zM569.9 472l1.9 1.9l-1.9 1.9l-1.9-1.9zM558.6 472l1.9 1.9l-1.9 1.9l-1.9-1.9zM559.6 473.5l1.9 1.9l-1.9 1.9l-1.9-1.9zM596.1 471l1.9 1.9l-1.9 1.9l-1.9-1.9zM599.6 470.4l1.9 1.9l-1.9 1.9l-1.9-1.9zM601.1 471.4l1.9 1.9l-1.9 1.9l-1.9-1.9zM608.2 470.4l1.9 1.9l-1.9 1.9l-1.9-1.9zM624.2 470.4l1.9 1.9l-1.9 1.9l-1.9-1.9zM625.3 472.5l1.9 1.9l-1.9 1.9l-1.9-1.9zM626.9 474.5l1.9 1.9l-1.9 1.9l-1.9-1.9zM613.6 473.1l1.9 1.9l-1.9 1.9l-1.9-1.9zM614.4 474.5l1.9 1.9l-1.9 1.9l-1.9-1.9zM628.3 477.2l1.9 1.9l-1.9 1.9l-1.9-1.9zM619.1 476.2l1.9 1.9l-1.9 1.9l-1.9-1.9zM600.2 474.1l1.9 1.9l-1.9 1.9l-1.9-1.9zM601.1 475.5l1.9 1.9l-1.9 1.9l-1.9-1.9zM608.8 473.5l1.9 1.9l-1.9 1.9l-1.9-1.9zM583.2 479.6l1.9 1.9l-1.9 1.9l-1.9-1.9zM584.2 482.7l1.9 1.9l-1.9 1.9l-1.9-1.9zM596.5 480l1.9 1.9l-1.9 1.9l-1.9-1.9zM599.6 480l1.9 1.9l-1.9 1.9l-1.9-1.9zM607.8 479l1.9 1.9l-1.9 1.9l-1.9-1.9zM609.3 480.7l1.9 1.9l-1.9 1.9l-1.9-1.9zM611.9 477.2l1.9 1.9l-1.9 1.9l-1.9-1.9zM625.3 483.3l1.9 1.9l-1.9 1.9l-1.9-1.9zM630.4 484.8l1.9 1.9l-1.9 1.9l-1.9-1.9zM635.5 484.4l1.9 1.9l-1.9 1.9l-1.9-1.9zM636.5 481.7l1.9 1.9l-1.9 1.9l-1.9-1.9zM643.7 477.2l1.9 1.9l-1.9 1.9l-1.9-1.9zM645.8 478.6l1.9 1.9l-1.9 1.9l-1.9-1.9zM644.7 480l1.9 1.9l-1.9 1.9l-1.9-1.9zM641.7 482.7l1.9 1.9l-1.9 1.9l-1.9-1.9zM642.7 484.8l1.9 1.9l-1.9 1.9l-1.9-1.9zM635.9 487.8l1.9 1.9l-1.9 1.9l-1.9-1.9zM538.7 484.8l1.9 1.9l-1.9 1.9l-1.9-1.9zM542.8 485.8l1.9 1.9l-1.9 1.9l-1.9-1.9zM553.1 483.3l1.9 1.9l-1.9 1.9l-1.9-1.9zM557.6 481.7l1.9 1.9l-1.9 1.9l-1.9-1.9zM558.6 485.4l1.9 1.9l-1.9 1.9l-1.9-1.9zM587.3 487.8l1.9 1.9l-1.9 1.9l-1.9-1.9zM600.2 489.5l1.9 1.9l-1.9 1.9l-1.9-1.9zM601.1 493l1.9 1.9l-1.9 1.9l-1.9-1.9zM594.5 495l1.9 1.9l-1.9 1.9l-1.9-1.9zM585.3 496.5l1.9 1.9l-1.9 1.9l-1.9-1.9zM568.8 490.9l1.9 1.9l-1.9 1.9l-1.9-1.9zM566.8 496.5l1.9 1.9l-1.9 1.9l-1.9-1.9zM546.3 496.5l1.9 1.9l-1.9 1.9l-1.9-1.9zM625.9 489.9l1.9 1.9l-1.9 1.9l-1.9-1.9zM626.9 491.5l1.9 1.9l-1.9 1.9l-1.9-1.9zM631.4 491.9l1.9 1.9l-1.9 1.9l-1.9-1.9zM630.4 494.6l1.9 1.9l-1.9 1.9l-1.9-1.9zM728.9 359.5l1.9 1.9l-1.9 1.9l-1.9-1.9zM707.3 360.1l1.9 1.9l-1.9 1.9l-1.9-1.9zM754 358.3l1.9 1.9l-1.9 1.9l-1.9-1.9zM752.8 360.1l1.9 1.9l-1.9 1.9l-1.9-1.9zM748.6 362.2l1.9 1.9l-1.9 1.9l-1.9-1.9zM752.2 364.9l1.9 1.9l-1.9 1.9l-1.9-1.9zM740.3 366.3l1.9 1.9l-1.9 1.9l-1.9-1.9zM726.5 366.9l1.9 1.9l-1.9 1.9l-1.9-1.9zM696.6 368.2l1.9 1.9l-1.9 1.9l-1.9-1.9zM739.7 370.8l1.9 1.9l-1.9 1.9l-1.9-1.9zM740.3 372.6l1.9 1.9l-1.9 1.9l-1.9-1.9zM741.2 375l1.9 1.9l-1.9 1.9l-1.9-1.9zM726.5 374.2l1.9 1.9l-1.9 1.9l-1.9-1.9zM698.6 376.2l1.9 1.9l-1.9 1.9l-1.9-1.9zM704.1 376.2l1.9 1.9l-1.9 1.9l-1.9-1.9zM610 362.9l1.9 1.9l-1.9 1.9l-1.9-1.9zM611.8 367l1.9 1.9l-1.9 1.9l-1.9-1.9zM625.4 362.3l1.9 1.9l-1.9 1.9l-1.9-1.9zM625.4 364.7l1.9 1.9l-1.9 1.9l-1.9-1.9zM625.4 368.2l1.9 1.9l-1.9 1.9l-1.9-1.9zM628.1 369.6l1.9 1.9l-1.9 1.9l-1.9-1.9zM619.2 372.7l1.9 1.9l-1.9 1.9l-1.9-1.9zM641.1 368.2l1.9 1.9l-1.9 1.9l-1.9-1.9zM661.7 359.7l1.9 1.9l-1.9 1.9l-1.9-1.9zM674.1 359.1l1.9 1.9l-1.9 1.9l-1.9-1.9zM677.7 359.1l1.9 1.9l-1.9 1.9l-1.9-1.9zM677.7 369.6l1.9 1.9l-1.9 1.9l-1.9-1.9zM696.7 357.6l1.9 1.9l-1.9 1.9l-1.9-1.9zM614.8 376.5l1.9 1.9l-1.9 1.9l-1.9-1.9zM628.1 377.9l1.9 1.9l-1.9 1.9l-1.9-1.9zM681 374.7l1.9 1.9l-1.9 1.9l-1.9-1.9zM678.6 376.5l1.9 1.9l-1.9 1.9l-1.9-1.9zM676.3 377.1l1.9 1.9l-1.9 1.9l-1.9-1.9zM681.6 376.5l1.9 1.9l-1.9 1.9l-1.9-1.9zM686.9 377.4l1.9 1.9l-1.9 1.9l-1.9-1.9zM347.9 503.2l1.9 1.9l-1.9 1.9l-1.9-1.9zM403.7 503.2l1.9 1.9l-1.9 1.9l-1.9-1.9zM413.5 504.4l1.9 1.9l-1.9 1.9l-1.9-1.9zM422.3 500.5l1.9 1.9l-1.9 1.9l-1.9-1.9zM425 500.5l1.9 1.9l-1.9 1.9l-1.9-1.9zM446.3 499.3l1.9 1.9l-1.9 1.9l-1.9-1.9zM465.3 500l1.9 1.9l-1.9 1.9l-1.9-1.9zM474.7 500.5l1.9 1.9l-1.9 1.9l-1.9-1.9zM484.8 499.1l1.9 1.9l-1.9 1.9l-1.9-1.9zM484.8 502.3l1.9 1.9l-1.9 1.9l-1.9-1.9zM500 503.2l1.9 1.9l-1.9 1.9l-1.9-1.9zM505.7 505.5l1.9 1.9l-1.9 1.9l-1.9-1.9zM510.7 504.4l1.9 1.9l-1.9 1.9l-1.9-1.9zM414.9 509.9l1.9 1.9l-1.9 1.9l-1.9-1.9zM455.2 506.4l1.9 1.9l-1.9 1.9l-1.9-1.9zM457.5 507.1l1.9 1.9l-1.9 1.9l-1.9-1.9zM466.7 511.2l1.9 1.9l-1.9 1.9l-1.9-1.9zM484.8 507.6l1.9 1.9l-1.9 1.9l-1.9-1.9zM500 508.5l1.9 1.9l-1.9 1.9l-1.9-1.9zM363.8 515.6l1.9 1.9l-1.9 1.9l-1.9-1.9zM366.5 515.1l1.9 1.9l-1.9 1.9l-1.9-1.9zM346.4 519.1l1.9 1.9l-1.9 1.9l-1.9-1.9zM453.4 517.7l1.9 1.9l-1.9 1.9l-1.9-1.9zM397.2 520.9l1.9 1.9l-1.9 1.9l-1.9-1.9zM387.8 523.9l1.9 1.9l-1.9 1.9l-1.9-1.9zM389.5 524.8l1.9 1.9l-1.9 1.9l-1.9-1.9zM359.9 525l1.9 1.9l-1.9 1.9l-1.9-1.9zM468.8 523.9l1.9 1.9l-1.9 1.9l-1.9-1.9zM484.1 525l1.9 1.9l-1.9 1.9l-1.9-1.9zM397.5 527.5l1.9 1.9l-1.9 1.9l-1.9-1.9zM386.9 529.2l1.9 1.9l-1.9 1.9l-1.9-1.9zM387.8 530.7l1.9 1.9l-1.9 1.9l-1.9-1.9zM395.7 531.5l1.9 1.9l-1.9 1.9l-1.9-1.9zM341.1 530.1l1.9 1.9l-1.9 1.9l-1.9-1.9zM344.7 530.3l1.9 1.9l-1.9 1.9l-1.9-1.9zM350 530.7l1.9 1.9l-1.9 1.9l-1.9-1.9zM352.8 531.9l1.9 1.9l-1.9 1.9l-1.9-1.9zM424.1 528.9l1.9 1.9l-1.9 1.9l-1.9-1.9zM426.8 530.1l1.9 1.9l-1.9 1.9l-1.9-1.9zM443.6 529.8l1.9 1.9l-1.9 1.9l-1.9-1.9zM484.8 530.7l1.9 1.9l-1.9 1.9l-1.9-1.9zM499.1 530.7l1.9 1.9l-1.9 1.9l-1.9-1.9zM514.2 532.1l1.9 1.9l-1.9 1.9l-1.9-1.9zM364.4 536.9l1.9 1.9l-1.9 1.9l-1.9-1.9zM409.9 535.1l1.9 1.9l-1.9 1.9l-1.9-1.9zM426.8 536.9l1.9 1.9l-1.9 1.9l-1.9-1.9zM439.7 534.2l1.9 1.9l-1.9 1.9l-1.9-1.9zM443.1 536l1.9 1.9l-1.9 1.9l-1.9-1.9zM508.9 535.1l1.9 1.9l-1.9 1.9l-1.9-1.9zM482.1 537.8l1.9 1.9l-1.9 1.9l-1.9-1.9zM406 540.8l1.9 1.9l-1.9 1.9l-1.9-1.9zM408.5 542.7l1.9 1.9l-1.9 1.9l-1.9-1.9zM370 543.1l1.9 1.9l-1.9 1.9l-1.9-1.9zM368.3 545.2l1.9 1.9l-1.9 1.9l-1.9-1.9zM366 547l1.9 1.9l-1.9 1.9l-1.9-1.9zM376.8 544.3l1.9 1.9l-1.9 1.9l-1.9-1.9zM475.2 545.7l1.9 1.9l-1.9 1.9l-1.9-1.9zM472.4 548.4l1.9 1.9l-1.9 1.9l-1.9-1.9zM471.1 549.6l1.9 1.9l-1.9 1.9l-1.9-1.9zM466.7 550.7l1.9 1.9l-1.9 1.9l-1.9-1.9zM341.7 548.4l1.9 1.9l-1.9 1.9l-1.9-1.9zM346.1 554.2l1.9 1.9l-1.9 1.9l-1.9-1.9zM433 548.4l1.9 1.9l-1.9 1.9l-1.9-1.9zM442.2 548.4l1.9 1.9l-1.9 1.9l-1.9-1.9zM441.5 549.8l1.9 1.9l-1.9 1.9l-1.9-1.9zM425.9 551.9l1.9 1.9l-1.9 1.9l-1.9-1.9zM429.8 551.9l1.9 1.9l-1.9 1.9l-1.9-1.9zM491.2 553.4l1.9 1.9l-1.9 1.9l-1.9-1.9zM352.3 557.3l1.9 1.9l-1.9 1.9l-1.9-1.9zM353.2 558.7l1.9 1.9l-1.9 1.9l-1.9-1.9zM372.3 556.7l1.9 1.9l-1.9 1.9l-1.9-1.9zM339.9 560.8l1.9 1.9l-1.9 1.9l-1.9-1.9zM387.2 559.9l1.9 1.9l-1.9 1.9l-1.9-1.9zM401.4 561.2l1.9 1.9l-1.9 1.9l-1.9-1.9zM412.1 559.9l1.9 1.9l-1.9 1.9l-1.9-1.9zM424.1 557.3l1.9 1.9l-1.9 1.9l-1.9-1.9zM425.9 558.1l1.9 1.9l-1.9 1.9l-1.9-1.9zM423.8 559.9l1.9 1.9l-1.9 1.9l-1.9-1.9zM426.8 560.5l1.9 1.9l-1.9 1.9l-1.9-1.9zM431.2 560.5l1.9 1.9l-1.9 1.9l-1.9-1.9zM434.8 561.7l1.9 1.9l-1.9 1.9l-1.9-1.9zM438 561.7l1.9 1.9l-1.9 1.9l-1.9-1.9zM424.5 563.5l1.9 1.9l-1.9 1.9l-1.9-1.9zM453.4 557.3l1.9 1.9l-1.9 1.9l-1.9-1.9zM457.5 559.6l1.9 1.9l-1.9 1.9l-1.9-1.9zM493.8 559.6l1.9 1.9l-1.9 1.9l-1.9-1.9zM475.9 563.5l1.9 1.9l-1.9 1.9l-1.9-1.9zM516.9 563.5l1.9 1.9l-1.9 1.9l-1.9-1.9zM354.6 564l1.9 1.9l-1.9 1.9l-1.9-1.9zM361.7 564.7l1.9 1.9l-1.9 1.9l-1.9-1.9zM365.2 564.4l1.9 1.9l-1.9 1.9l-1.9-1.9zM373 565.8l1.9 1.9l-1.9 1.9l-1.9-1.9zM429.8 567.9l1.9 1.9l-1.9 1.9l-1.9-1.9zM433.9 569.1l1.9 1.9l-1.9 1.9l-1.9-1.9zM435.6 569.7l1.9 1.9l-1.9 1.9l-1.9-1.9zM512.4 570l1.9 1.9l-1.9 1.9l-1.9-1.9zM366.5 571.8l1.9 1.9l-1.9 1.9l-1.9-1.9zM373.6 572l1.9 1.9l-1.9 1.9l-1.9-1.9zM385.5 573.2l1.9 1.9l-1.9 1.9l-1.9-1.9zM351.1 574.1l1.9 1.9l-1.9 1.9l-1.9-1.9zM353.2 575.3l1.9 1.9l-1.9 1.9l-1.9-1.9zM409.4 576.2l1.9 1.9l-1.9 1.9l-1.9-1.9zM477.9 575l1.9 1.9l-1.9 1.9l-1.9-1.9zM486.2 575.9l1.9 1.9l-1.9 1.9l-1.9-1.9zM491.9 574.6l1.9 1.9l-1.9 1.9l-1.9-1.9zM591.6 499.6l1.9 1.9l-1.9 1.9l-1.9-1.9zM599.6 499.6l1.9 1.9l-1.9 1.9l-1.9-1.9zM602.2 500.5l1.9 1.9l-1.9 1.9l-1.9-1.9zM603.6 501.9l1.9 1.9l-1.9 1.9l-1.9-1.9zM608.1 499.1l1.9 1.9l-1.9 1.9l-1.9-1.9zM534.3 499.6l1.9 1.9l-1.9 1.9l-1.9-1.9zM536.2 501.9l1.9 1.9l-1.9 1.9l-1.9-1.9zM537.5 503.7l1.9 1.9l-1.9 1.9l-1.9-1.9zM519.8 504.1l1.9 1.9l-1.9 1.9l-1.9-1.9zM561.4 502.3l1.9 1.9l-1.9 1.9l-1.9-1.9zM564.1 504.6l1.9 1.9l-1.9 1.9l-1.9-1.9zM601.3 506.7l1.9 1.9l-1.9 1.9l-1.9-1.9zM600.4 509.4l1.9 1.9l-1.9 1.9l-1.9-1.9zM600.8 512l1.9 1.9l-1.9 1.9l-1.9-1.9zM602.2 513.5l1.9 1.9l-1.9 1.9l-1.9-1.9zM602.2 517l1.9 1.9l-1.9 1.9l-1.9-1.9zM536.6 515.1l1.9 1.9l-1.9 1.9l-1.9-1.9zM521 517l1.9 1.9l-1.9 1.9l-1.9-1.9zM531.6 518.2l1.9 1.9l-1.9 1.9l-1.9-1.9zM560.5 517.7l1.9 1.9l-1.9 1.9l-1.9-1.9zM585 517.7l1.9 1.9l-1.9 1.9l-1.9-1.9zM592.5 516.5l1.9 1.9l-1.9 1.9l-1.9-1.9zM592.5 520.6l1.9 1.9l-1.9 1.9l-1.9-1.9zM603.5 521.4l1.9 1.9l-1.9 1.9l-1.9-1.9zM606.1 521.4l1.9 1.9l-1.9 1.9l-1.9-1.9zM538 520.9l1.9 1.9l-1.9 1.9l-1.9-1.9zM542.8 522.1l1.9 1.9l-1.9 1.9l-1.9-1.9zM544.9 523.6l1.9 1.9l-1.9 1.9l-1.9-1.9zM598.1 526.8l1.9 1.9l-1.9 1.9l-1.9-1.9zM588.9 530.3l1.9 1.9l-1.9 1.9l-1.9-1.9zM602.2 530.7l1.9 1.9l-1.9 1.9l-1.9-1.9zM588.4 533.9l1.9 1.9l-1.9 1.9l-1.9-1.9zM560.5 536.9l1.9 1.9l-1.9 1.9l-1.9-1.9zM564.4 536.3l1.9 1.9l-1.9 1.9l-1.9-1.9zM546 542.2l1.9 1.9l-1.9 1.9l-1.9-1.9zM562 543.6l1.9 1.9l-1.9 1.9l-1.9-1.9zM525.1 545.4l1.9 1.9l-1.9 1.9l-1.9-1.9zM537.5 544.8l1.9 1.9l-1.9 1.9l-1.9-1.9zM530.9 548.4l1.9 1.9l-1.9 1.9l-1.9-1.9zM546.7 547.5l1.9 1.9l-1.9 1.9l-1.9-1.9zM522.8 552.8l1.9 1.9l-1.9 1.9l-1.9-1.9zM527.7 551.9l1.9 1.9l-1.9 1.9l-1.9-1.9zM548.1 552.3l1.9 1.9l-1.9 1.9l-1.9-1.9zM538.7 555l1.9 1.9l-1.9 1.9l-1.9-1.9zM540.5 557.3l1.9 1.9l-1.9 1.9l-1.9-1.9zM537.8 560.8l1.9 1.9l-1.9 1.9l-1.9-1.9zM530 569.3l1.9 1.9l-1.9 1.9l-1.9-1.9zM990.9 203.6l1.9 1.9l-1.9 1.9l-1.9-1.9zM981.3 205l1.9 1.9l-1.9 1.9l-1.9-1.9zM679.7 110.5l1.9 1.9l-1.9 1.9l-1.9-1.9zM678.4 115.2l1.9 1.9l-1.9 1.9l-1.9-1.9zM680.7 116.1l1.9 1.9l-1.9 1.9l-1.9-1.9zM694.4 111.4l1.9 1.9l-1.9 1.9l-1.9-1.9zM695.7 114.3l1.9 1.9l-1.9 1.9l-1.9-1.9zM697 116.7l1.9 1.9l-1.9 1.9l-1.9-1.9zM698.5 119l1.9 1.9l-1.9 1.9l-1.9-1.9zM700.4 119.9l1.9 1.9l-1.9 1.9l-1.9-1.9zM697.6 121.2l1.9 1.9l-1.9 1.9l-1.9-1.9zM699.8 122.7l1.9 1.9l-1.9 1.9l-1.9-1.9zM699.1 125.5l1.9 1.9l-1.9 1.9l-1.9-1.9z" fill="#2c9210" stroke="#071c02" stroke-width="0.85" stroke-linejoin="round"/>
<path d="M620.5 309L690.7 180.4" stroke="#15157e" stroke-width="3.5" stroke-linecap="round"/>
<path d="M620.5 309L730.3 208.7" stroke="#15157e" stroke-width="3.5" stroke-linecap="round"/>
<path d="M620.5 309L658 228.6" stroke="#15157e" stroke-width="3.5" stroke-linecap="round"/>
<path d="M620.5 309L688.5 270.5" stroke="#15157e" stroke-width="3.5" stroke-linecap="round"/>
<path d="M620.5 309L739 279" stroke="#15157e" stroke-width="3.5" stroke-linecap="round"/>
<rect x="686.2" y="175.9" width="9" height="9" fill="#00ffff" stroke="#222" stroke-width="0.7"/>
<rect x="725.8" y="204.2" width="9" height="9" fill="#2222d0" stroke="#222" stroke-width="0.7"/>
<rect x="653.5" y="224.1" width="9" height="9" fill="#2222d0" stroke="#222" stroke-width="0.7"/>
<rect x="684" y="266" width="9" height="9" fill="#2222d0" stroke="#222" stroke-width="0.7"/>
<rect x="734.5" y="274.5" width="9" height="9" fill="#2222d0" stroke="#222" stroke-width="0.7"/>
<circle cx="620.5" cy="309" r="4.3" fill="#00ffff" stroke="#145" stroke-width="0.8"/>
</g></svg>
<div class="abs" style="left:338px;top:160px;width:2px;height:7px;background:#c03aa8;"></div>
<div class="abs" style="left:339px;top:579px;width:676px;height:1px;background:#e6e6e6;"></div>
<div class="ptitle" style="left:3px;top:5px;width:132px;"><span style="position:absolute;left:3px;font-size:8.700px;">Network Analyst</span>
<svg class="abs" style="left:112px;top:2px" width="20" height="10" viewBox="0 0 20 10"><path d="M3 1h3v4h-3zM2 5h5M4.5 5v3" stroke="#222" stroke-width="1" fill="none"/><path d="M12.5 2l5 5M17.5 2l-5 5" stroke="#111" stroke-width="1.3"/></svg></div>
<div class="box" style="left:5px;top:21px;width:113px;height:17px;border-color:#7a7a7a;"><span class="abs" style="left:2px;top:1px;font-size:8.1px;line-height:14px;white-space:nowrap;">OD 成本矩阵</span>
<svg class="abs" style="left:101px;top:5px" width="8" height="6"><path d="M0.5 1l3 3.2l3-3.2" stroke="#444" fill="none" stroke-width="1"/></svg></div>
<div class="abs" style="left:120.500px;top:21.800px;width:12.500px;height:12.400px;border:1.800px solid #1f76d6;background:#fff;box-sizing:border-box;"><div class="abs" style="left:1.200px;top:1px;width:5.500px;height:4.500px;border:1px solid #333;border-top-width:1.800px;background:#fff;"></div><div class="abs" style="left:4.500px;top:2.500px;width:1px;height:5px;background:#333;"></div></div>
<div class="box" style="left:5px;top:40px;width:128.300px;height:535px;border-color:#9aa0aa;"></div>
<div class="abs" style="left:31px;top:54px;width:101px;height:13px;background:#00ffff;"></div>
<div class="abs" style="left:31px;top:133px;width:101px;height:13px;background:#00ffff;"></div>
<div class="abs" style="left:21px;top:147px;width:24px;height:13px;background:#1874d2;"></div>
<div class="exp" style="left:11px;top:44px;"></div>
<div class="row b" style="left:22px;top:41px;">起始点 (1)</div>
<div class="circ" style="left:20px;top:56px;background:#2020d0;border-color:#14146a;"></div>
<div class="row" style="left:33px;top:54px;">图形选择 1</div>
<div class="exp" style="left:11px;top:70px;"></div>
<div class="row b" style="left:22px;top:67px;">目的地点 (5)</div>
<div class="sq" style="left:20.5px;top:83px;"></div><div class="row" style="left:33px;top:80.6px;">图形选择 3</div>
<div class="sq" style="left:20.5px;top:96px;"></div><div class="row" style="left:33px;top:93.7px;">图形选择 4</div>
<div class="sq" style="left:20.5px;top:109px;"></div><div class="row" style="left:33px;top:106.8px;">图形选择 5</div>
<div class="sq" style="left:20.5px;top:122px;"></div><div class="row" style="left:33px;top:119.9px;">图形选择 6</div>
<div class="sq" style="left:20.5px;top:135.5px;"></div><div class="row" style="left:33px;top:133px;">图形选择 7</div>
<div class="row b" style="left:22px;top:147px;color:#fff;">线 (5)</div>
<div class="exp" style="left:11px;top:163px;"></div>
<div class="row b" style="left:22px;top:160px;">点障碍 (0)</div>
<div class="row b" style="left:35px;top:173px;">禁止型 (0)</div>
<div class="row b" style="left:35px;top:186px;">成本增加型 (0)</div>
<div class="abs" style="left:5px;top:577px;width:129px;height:1px;background:#b0b4ba;"></div>

<div class="ptitle" style="left:138px;top:5px;width:197px;"><span style="position:absolute;left:3px;font-size:7.900px;">内容列表</span>
<svg class="abs" style="left:177px;top:2px" width="20" height="10" viewBox="0 0 20 10"><path d="M3 1h3v4h-3zM2 5h5M4.5 5v3" stroke="#222" stroke-width="1" fill="none"/><path d="M12.5 2l5 5M17.5 2l-5 5" stroke="#111" stroke-width="1.3"/></svg></div>
<!-- toc toolbar -->
<div class="abs" style="left:140px;top:20px;width:15px;height:15px;border:1px solid #3a8ae0;background:#dcebfa;box-sizing:border-box;"></div>
<svg class="abs" style="left:140px;top:20px" width="90" height="16" viewBox="0 0 90 16">
<path d="M5.400 5.500v5.800h2M5.400 7.300h2" stroke="#8a96a8" stroke-width=".6" fill="none"/>
<circle cx="4.400" cy="3.900" r="1.900" fill="#f0c040" stroke="#b08820" stroke-width=".6"/><circle cx="8.300" cy="7.300" r="1.800" fill="#f0c040" stroke="#b08820" stroke-width=".6"/><circle cx="8.300" cy="11.300" r="1.800" fill="#f0c040" stroke="#b08820" stroke-width=".6"/><path d="M10.800 7.600h2.200M10.800 11.500h2.200" stroke="#2a5ea8" stroke-width="1.100"/>
<path d="M18.200 8.300h7.800l-3.900 4.400z" fill="#eeb440" stroke="#b88420" stroke-width=".5"/><rect x="19" y="2.400" width="6.600" height="6.300" rx="1.600" fill="#c4ccd8" stroke="#5a6272" stroke-width=".8"/><ellipse cx="22.300" cy="3.600" rx="3" ry="1" fill="#e4e8f0" stroke="#5a6272" stroke-width=".5"/>
<path d="M32.400 9.300l4.500-3l4.500 3l-4.500 3z" fill="#fdfdfd" stroke="#909090" stroke-width=".7"/><path d="M31.500 5.600l5.400-3.200l5.400 3.200l-5.400 3.200z" fill="#f2c050" stroke="#b88420" stroke-width=".6"/>
<path d="M46.200 8.300h10.400l-5.200 4.400z" fill="#eeb440" stroke="#b88420" stroke-width=".5"/><rect x="48" y="2.400" width="7.100" height="6" fill="#28a8dc" stroke="#3a4250" stroke-width=".8"/><path d="M52.500 2.400h2.600v6h-1.300z" fill="#d8d8d8" stroke="#3a4250" stroke-width=".5"/>
<path d="M60.500 3v10" stroke="#b4b4b4" stroke-width="1"/>
<rect x="65.700" y="3.500" width="8" height="9" fill="#f4f6fa" stroke="#7a8498" stroke-width=".8"/><path d="M67 6h1.500M67 10.500h1.500" stroke="#234" stroke-width="1.100"/><path d="M69.300 6h3.500M69.300 8h3.500M69.300 10.500h3.500" stroke="#9aa4ba" stroke-width=".8"/>
</svg>
<div class="box" style="left:138px;top:36px;width:197px;height:541px;border-color:#9aa0aa;"></div>
<!-- tree lines -->
<div class="abs" style="left:172px;top:64px;width:1px;height:130px;background:#b8b8b8;"></div>
<div class="abs" style="left:176px;top:71px;width:4px;height:1px;background:#b8b8b8;"></div><div class="abs" style="left:176px;top:123.500px;width:4px;height:1px;background:#b8b8b8;"></div><div class="abs" style="left:176px;top:176.500px;width:4px;height:1px;background:#b8b8b8;"></div>
<div class="exp" style="left:144px;top:41px;"></div>
<svg class="abs" style="left:153px;top:39px" width="12" height="11" viewBox="0 0 12 11"><path d="M1 7l3-4h7l-3 4z" fill="#f4c860" stroke="#b08020" stroke-width=".6"/><path d="M1 8.500l3-4h7l-3 4z" fill="#f0b848" stroke="#b08020" stroke-width=".6"/><path d="M1 10l3-4h7l-3 4z" fill="#e8a838" stroke="#a07018" stroke-width=".6"/></svg>
<div class="row b" style="left:168px;top:38px;">图层</div>
<div class="exp" style="left:157px;top:54px;"></div><div class="cb" style="left:167px;top:53px;"></div>
<div class="row" style="left:180px;top:51px;font-size:8.1px;">OD 成本矩阵</div>
<div class="exp" style="left:169px;top:67px;"></div><div class="cb" style="left:179.500px;top:66.500px;"></div>
<div class="row" style="left:192px;top:64.500px;">起始点</div>
<div class="circ" style="left:187px;top:79px;background:#ff0000;border-color:#7a1010;"></div><div class="row" style="left:202px;top:77.500px;">错误</div>
<div class="circ" style="left:187px;top:92px;background:#2020d0;border-color:#14146a;"></div><div class="row" style="left:202px;top:90.600px;">已定位</div>
<div class="row b" style="left:184px;top:103.700px;color:#e00000;font-size:9px;">?</div><div class="circ" style="left:189px;top:105px;background:#a8a8dc;border-color:#444;"></div><div class="row" style="left:202px;top:103.700px;">未定位</div>
<div class="exp" style="left:169px;top:120px;"></div><div class="cb" style="left:179.500px;top:119px;"></div>
<div class="row" style="left:192px;top:117px;">目的地点</div>
<div class="sq" style="left:187px;top:132px;background:#ff0000;border-color:#7a1010;width:10px;height:10px;"></div><div class="row" style="left:202px;top:130px;">错误</div>
<div class="sq" style="left:187px;top:145px;width:10px;height:10px;"></div><div class="row" style="left:202px;top:143px;">已定位</div>
<div class="row b" style="left:184px;top:156px;color:#e00000;font-size:9px;">?</div><div class="sq" style="left:189.500px;top:158px;background:#a8a8dc;border-color:#444;width:10px;height:10px;"></div><div class="row" style="left:202px;top:156px;">未定位</div>
<div class="exp" style="left:169px;top:173px;"></div><div class="cb" style="left:179.500px;top:172px;"></div>
<div class="row" style="left:192px;top:170px;">点障碍</div>
<div class="circ" style="left:187px;top:184px;background:#e01010;border-color:#a00;"></div><div class="abs" style="left:189.500px;top:186px;width:4px;height:4px;border:1.200px solid #fff;border-radius:50%;border-left-color:transparent;box-sizing:border-box;"></div><div class="row" style="left:202px;top:183px;">错误</div>
<!-- below table -->
<div class="abs" style="left:177px;top:388px;width:10px;height:1px;background:#aaa;"></div><div class="row" style="left:189px;top:381.500px;">边</div>
<div class="exp" style="left:157px;top:398px;"></div><div class="cb" style="left:167px;top:397px;"></div><div class="row" style="left:180px;top:395px;font-size:8.1px;">道路_GK</div>
<div class="abs" style="left:178px;top:414.500px;width:8px;height:1px;background:#c03aa8;"></div>
<div class="exp" style="left:157px;top:424px;"></div><div class="cb" style="left:167px;top:423px;"></div><div class="row" style="left:180px;top:421px;font-size:8.1px;">省界_GK</div>
<div class="abs" style="left:178px;top:438px;width:9px;height:6px;background:#dcecb8;border:1px solid #888;box-sizing:border-box;"></div>
<div class="exp" style="left:157px;top:451px;"></div><div class="cb" style="left:167px;top:450px;"></div><div class="row" style="left:180px;top:448px;font-size:8.1px;">地级市区域_Gk</div>
<div class="abs" style="left:178px;top:465px;width:9px;height:6px;background:#fcf4a8;border:1px solid #888;box-sizing:border-box;"></div>
<!-- bottom tabs -->
<div class="abs" style="left:143px;top:578px;width:10px;height:1px;background:#3a78c8;"></div><div class="abs" style="left:177px;top:578px;width:10px;height:1px;background:#3a78c8;"></div>

<div class="abs" style="left:337px;top:24.500px;width:309px;height:30.300px;background:#f1f1f1;border:1px solid #7a7a7a;border-width:1px 2px 2px 1px;box-sizing:border-box;"></div>
<div class="abs" style="left:340px;top:27px;width:304px;height:10px;background:#999999;color:#f4f4f4;font-size:8.700px;line-height:10px;white-space:nowrap;"><span class="abs" style="left:1px;top:0;">Network Analyst</span>
<svg class="abs" style="left:283px;top:1px" width="20" height="8" viewBox="0 0 20 8"><path d="M2 3h5l-2.500 3z" fill="#fff"/><path d="M12.500 1.500l5 5M17.500 1.500l-5 5" stroke="#fff" stroke-width="1.500"/></svg></div>
<div class="abs" style="left:342px;top:38px;font-size:8.700px;line-height:15px;white-space:nowrap;color:#111;">Network Analyst</div>
<svg class="abs" style="left:405px;top:37px" width="240" height="17" viewBox="0 0 240 17">
<path d="M2.300 8h4l-2 2.500z" fill="#222"/>
<path d="M9.500 2v13" stroke="#c4c4c4"/>
<rect x="11.500" y="1.500" width="14" height="14" fill="#d8e8f8" stroke="#2a7cd0"/><rect x="14" y="4.500" width="9" height="8" fill="#fff" stroke="#345" stroke-width=".9"/><path d="M14 5h9" stroke="#345" stroke-width="1.500"/><path d="M17 6v6" stroke="#345" stroke-width=".7"/><path d="M19.500 7.500l3 1.800l-3 1.800z" fill="#1a50b0"/>
<path d="M27.500 2v13" stroke="#c4c4c4"/>
<rect x="29.500" y="1.500" width="14" height="14" fill="#cfe2f6" stroke="#9cc0e8"/><path d="M37 4v8M37 4h4v4h-4" stroke="#8aa0b8" stroke-width=".9" fill="none"/><path d="M32 9h3M33.500 7.500v3" stroke="#8aa0b8" stroke-width=".8"/><rect x="40" y="12" width="2" height="2" fill="#667"/>
<path d="M47 4l0 8l2-2l1.500 3l1.200-.6l-1.500-3l2.500 0z" fill="#fff" stroke="#111" stroke-width=".8"/><path d="M53 3l5 1.500l-4 2.500z" fill="#2858c0"/><rect x="56" y="12" width="2" height="2" fill="#222"/>
<g transform="translate(-2,0)"><path d="M63 4h10M63 8h10M63 12h10M65 3v11M69 3v11M73 3v11" stroke="#223" stroke-width=".9" stroke-dasharray="1.500 1"/><path d="M63.500 12.500v-3.500h5v-4.500h4.500" stroke="#2060c8" stroke-width="1.700" fill="none"/></g>
<g transform="translate(-5,0)"><rect x="80.500" y="3.500" width="10" height="8" fill="#e8e8e8" stroke="#b0b0b0"/><path d="M83 13.500l2-2" stroke="#b0b0b0"/><path d="M83.500 9.500h2.500v-4M84.500 7l1.500-1.500l1.500 1.500" stroke="#aaa" fill="none" stroke-width=".8"/></g>
<path d="M89.500 2v13" stroke="#c4c4c4"/>
<rect x="91.500" y="2.500" width="119" height="13" fill="#e1e1e1" stroke="#adadad"/>
<path d="M201 7l3 3.200l3-3.200" stroke="#444" fill="none" stroke-width="1"/>
<path d="M214 4v10M217.500 4v10M221 7v7M213 6h6M213 9.500h9M213 13h9" stroke="#334" stroke-width=".8"/><circle cx="221" cy="4.500" r="2.800" fill="#1a70d8"/><path d="M221 3v3" stroke="#fff" stroke-width=".9"/>
<path d="M228 3v11M231.500 3v11M235 3v11M227 5h10M227 8.500h10M227 12h10" stroke="#445" stroke-width=".8"/><path d="M228 4l8 9" stroke="#223" stroke-width="1.600"/>
</svg>
<div class="abs" style="left:498.500px;top:40px;font-size:8.100px;line-height:13px;white-space:nowrap;color:#111;">道路网络</div>

<div class="abs" style="left:10px;top:191px;width:600px;height:192.700px;background:#f4f4f4;border:1px solid #dcdcdc;border-bottom:1.500px solid #4a4a4a;border-right:1.300px solid #4a4a4a;box-sizing:border-box;"></div>
<div class="abs" style="left:12px;top:193px;width:596px;height:14px;background:linear-gradient(90deg,#9cb7d7 0%,#a3bddb 55%,#b8d0ea 100%);font-size:8.500px;line-height:14px;"><span class="abs" style="left:2px;">表</span>
<svg class="abs" style="left:575px;top:2px" width="22" height="10" viewBox="0 0 22 10"><rect x="1.500" y="2" width="6" height="6" fill="none" stroke="#111" stroke-width="1"/><path d="M1.500 2.500h6" stroke="#111" stroke-width="1.600"/><path d="M13 2l5.500 5.500M18.500 2l-5.500 5.500" stroke="#111" stroke-width="1.400"/></svg></div>
<div class="abs" style="left:12px;top:207px;width:596px;height:19px;background:linear-gradient(180deg,#fdfdfd,#efefef);"></div>
<svg class="abs" style="left:12px;top:207px" width="140" height="19" viewBox="0 0 140 19">
<rect x="5.500" y="5.500" width="7" height="9" fill="#fff" stroke="#8a93a4" stroke-width=".8"/><path d="M7 8h1.500M7 10.500h1.500M7 13h1.500" stroke="#3a5a90" stroke-width="1"/><path d="M9.500 8h2.500M9.500 10.500h2.500M9.500 13h2.500" stroke="#a8b0c0" stroke-width=".7"/>
<path d="M18 10.500h4l-2 2.500z" fill="#222"/><path d="M25.500 4v12" stroke="#c0c0c0"/>
<rect x="30.500" y="5.500" width="6" height="4" fill="#58a8b8" stroke="#2a5a70" stroke-width=".8"/><rect x="34.500" y="10.500" width="6" height="4" fill="#58a8b8" stroke="#2a5a70" stroke-width=".8"/><path d="M30.500 12h3M38 5.500h3" stroke="#333" stroke-width="1"/>
<path d="M44 10.500h4l-2 2.500z" fill="#222"/><path d="M51.500 4v12" stroke="#c0c0c0"/>
<rect x="56.500" y="4.500" width="5" height="6" fill="#28a0d8" stroke="#1a5a8a" stroke-width=".8"/><rect x="60.500" y="8.500" width="5" height="6" fill="#ddd" stroke="#555" stroke-width=".8"/>
<rect x="71.500" y="4.500" width="5" height="6" fill="#28a0d8" stroke="#1a5a8a" stroke-width=".8"/><rect x="75.500" y="8.500" width="5" height="6" fill="#e8f0f8" stroke="#1a5a8a" stroke-width=".8"/>
<rect x="87.500" y="5.500" width="6" height="6" fill="#f4f4f4" stroke="#b4b4b4" stroke-width=".8"/><path d="M89 7h3M90.500 7v3" stroke="#bbb" stroke-width=".7"/>
<circle cx="103" cy="11" r="3" fill="none" stroke="#b0b0b0" stroke-width=".9"/><rect x="104.500" y="5.500" width="5" height="5" fill="#eee" stroke="#b8b8b8" stroke-width=".7"/><path d="M105 13.500l3 2.500" stroke="#b0b0b0"/>
<path d="M116.500 8.500l5.500 5.500M122 8.500l-5.500 5.500" stroke="#a8a8a8" stroke-width="1.600"/>
</svg>
<div class="abs" style="left:12px;top:226px;width:596px;height:14px;background:linear-gradient(90deg,#c0cfe2 0%,#c6d4e6 50%,#d6e2f0 100%);font-size:8.200px;line-height:14px;"><span class="abs" style="left:2.500px;">线</span>
<svg class="abs" style="left:586.500px;top:3px" width="8" height="8" viewBox="0 0 8 8"><path d="M1 1l5.500 5.500M6.500 1l-5.500 5.500" stroke="#111" stroke-width="1.400"/></svg></div>
<!-- grid area -->
<div class="abs" style="left:12px;top:240px;width:594px;height:106px;background:#ececec;border-top:2px solid #707070;border-left:2px solid #707070;box-sizing:border-box;"></div>
<div class="abs" style="left:14px;top:346px;width:594px;height:21px;background:#f7f7f7;"></div>
<table class="mono" id="grid" cellspacing="0" cellpadding="0" style="position:absolute;left:14px;top:242.500px;border-collapse:collapse;font-size:7.500px;line-height:9px;table-layout:fixed;width:512px;">
<colgroup><col style="width:12px"><col style="width:60px"><col style="width:41px"><col style="width:89px"><col style="width:60px"><col style="width:89px"><col style="width:101px"><col style="width:60px"></colgroup>
<tr class="h"><th></th><th>ObjectID</th><th>Shape</th><th>Name</th><th>OriginID</th><th>DestinationID</th><th>DestinationRank</th><th>Total_时间</th></tr>
<tr><td class="s"><svg width="5" height="6" style="display:block;margin:1px auto 0"><path d="M1 0l3.500 3l-3.500 3z" fill="#111"/></svg></td><td class="r">1</td><td>折线</td><td>图形选择 1 - 图形选择</td><td class="r">1</td><td class="r">4</td><td class="r">1</td><td class="r">50.827294</td></tr>
<tr><td class="s"></td><td class="r">2</td><td>折线</td><td>图形选择 1 - 图形选择</td><td class="r">1</td><td class="r">5</td><td class="r">2</td><td class="r">75.218243</td></tr>
<tr><td class="s"></td><td class="r">3</td><td>折线</td><td>图形选择 1 - 图形选择</td><td class="r">1</td><td class="r">3</td><td class="r">3</td><td class="r">84.42982</td></tr>
<tr><td class="s"></td><td class="r">4</td><td>折线</td><td>图形选择 1 - 图形选择</td><td class="r">1</td><td class="r">2</td><td class="r">4</td><td class="r">85.297772</td></tr>
<tr><td class="s"></td><td class="r">5</td><td>折线</td><td>图形选择 1 - 图形选择</td><td class="r">1</td><td class="r">6</td><td class="r">5</td><td class="r">101.071231</td></tr>
</table>
<style>
#grid th{background:#f0f0f0;border:1px solid #555;border-width:1px 1px 2px 1px;height:8px;font-weight:bold;text-align:center;color:#222;padding:0;overflow:hidden;white-space:nowrap;}
#grid td{background:#fff;border:1px solid #8c8c8c;border-left-color:#c4c4c4;border-right-color:#c4c4c4;height:8.600px;padding:0 3px;overflow:hidden;white-space:nowrap;color:#151515;font-family:"Liberation Mono","Noto Sans CJK SC",monospace;}
#grid td.r{text-align:right;}
#grid td.s{background:#efefef;border:1px solid #444;padding:0;}
</style>
<!-- nav -->
<svg class="abs" style="left:14px;top:346px" width="200" height="21" viewBox="0 0 200 21">
<path d="M6 8v6" stroke="#111" stroke-width="1.200"/><path d="M11 8v6l-3.500-3z" fill="#111"/>
<path d="M26 8v6l-3.500-3z" fill="#111"/>
<rect x="31" y="3" width="38" height="15" fill="#fff"/>
<path d="M76 8v6l3.500-3z" fill="#111"/>
<path d="M90 8v6l3.500-3z" fill="#111"/><path d="M95 8v6" stroke="#111" stroke-width="1.200"/>
<path d="M100.500 3v15" stroke="#c8c8c8"/>
<rect x="103.500" y="3.500" width="14" height="14" fill="#d8eaf8" stroke="#2a84d8" stroke-width="1"/><rect x="106.500" y="6.500" width="8" height="9" fill="#b0c0c8" stroke="#555" stroke-width=".8"/><path d="M106.500 9.500h8M106.500 12.500h8" stroke="#555" stroke-width=".7"/>
<rect x="120.500" y="5.500" width="9" height="5" fill="#50a8b8" stroke="#456" stroke-width=".8"/>
<path d="M134.500 3v15" stroke="#c8c8c8"/>
</svg>
<div class="abs" style="left:67px;top:350px;width:14px;text-align:right;font-size:9px;line-height:13px;">1</div>
<div class="abs" style="left:152.500px;top:350px;font-size:8.500px;line-height:13px;white-space:nowrap;">(0 / 5 已选择)</div>
<div class="abs" style="left:12px;top:367px;width:596px;height:14.500px;background:#f0f0f0;"></div>
<div class="abs" style="left:13px;top:367.500px;width:15px;height:12px;background:#fafafa;border:1px solid #aaa;border-top:none;border-radius:0 0 2px 2px;box-sizing:border-box;font-size:9px;line-height:11px;text-align:center;">线</div>

<div class="abs red" style="left:509.700px;top:78px;font-size:21.300px;line-height:26px;white-space:nowrap;letter-spacing:0px;">新建<span class="dg">1</span>个起始点，<span class="dg">5</span>个目的地点，生成了<span class="dg">5</span>条线</div>
<div class="abs red" style="left:298.500px;top:205px;font-size:21.300px;line-height:26px;white-space:nowrap;">打开属性表</div>
<svg class="abs" style="left:0;top:0;pointer-events:none" width="1015" height="585" viewBox="0 0 1015 585">
<ellipse cx="27" cy="152.800" rx="24.500" ry="10.500" fill="none" stroke="#ff0000" stroke-width="2"/>
<path d="M47.500 166.100L266.500 215.200" stroke="#ff0000" stroke-width="1.200" fill="none"/>
<path d="M274.200 217L265 219.800L267.400 211.600z" fill="#ff0000"/>
<ellipse cx="500" cy="274" rx="35.600" ry="58.300" fill="none" stroke="#ff0000" stroke-width="1.600"/>
</svg>
<style>.dg{font-size:25.500px;line-height:20px;display:inline-block;transform:scaleX(0.84);margin:0 -1.300px;}</style>

</div>
</body>
</html>
